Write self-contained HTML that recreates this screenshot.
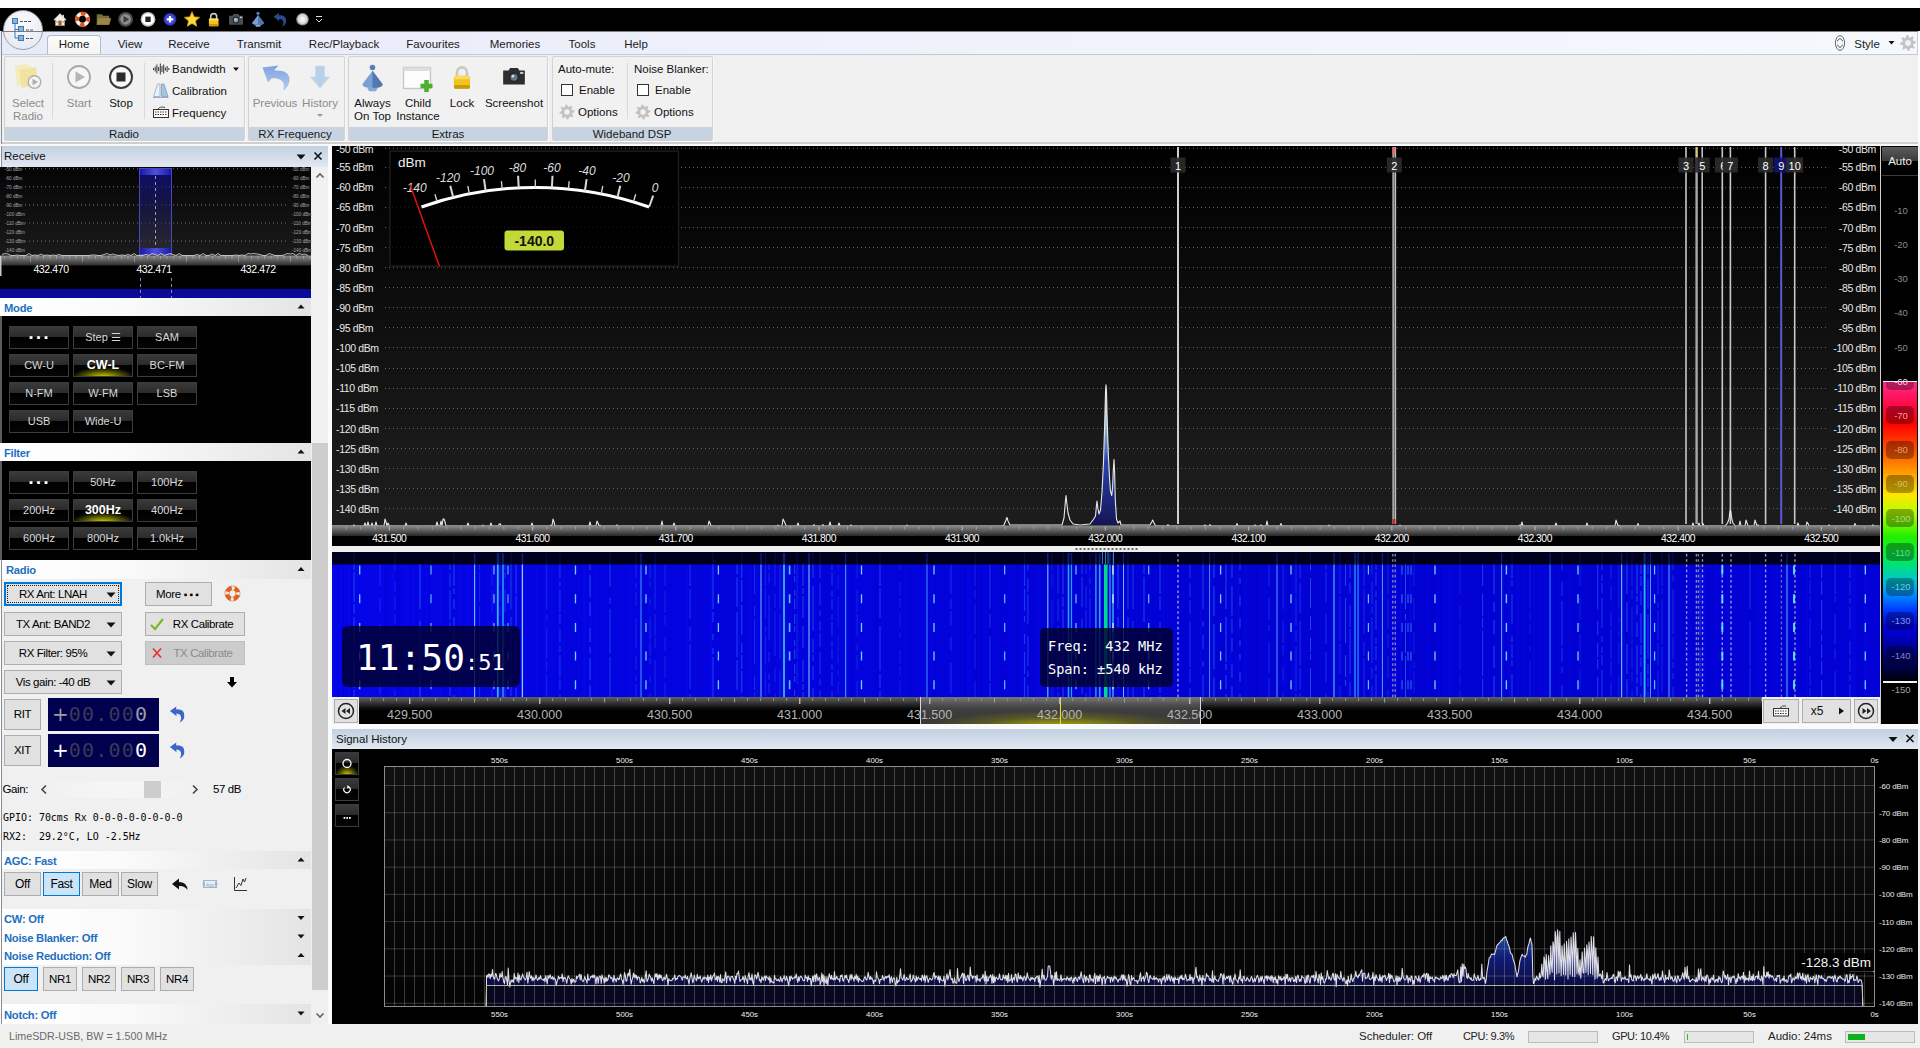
<!DOCTYPE html>
<html><head><meta charset="utf-8"><title>SDR Console</title>
<style>
html,body{margin:0;padding:0;background:#f0f0f0;overflow:hidden}
#app{position:relative;width:1920px;height:1048px;overflow:hidden;background:#f0f0f0;font-family:"Liberation Sans",sans-serif}
#app svg{overflow:visible;pointer-events:none}
</style></head><body><div id="app">
<div style="position:absolute;left:0px;top:0px;width:1920px;height:8px;background:#fff;"></div>
<div style="position:absolute;left:0px;top:8px;width:1920px;height:23px;background:#000;"></div>
<div style="position:absolute;left:0px;top:31px;width:1920px;height:23px;background:linear-gradient(90deg,#e7eaf8,#eef1fb 40%,#f5f8fd 100%);"></div>
<div style="position:absolute;left:1px;top:31px;width:1917px;height:1px;background:#7c7f86;"></div>
<div style="position:absolute;left:1px;top:31px;width:1px;height:1017px;background:#8a8d93;"></div>
<div style="position:absolute;left:1918px;top:32px;width:2px;height:114px;background:#fff;"></div>
<div style="position:absolute;left:1917px;top:32px;width:1px;height:22px;background:#c9ccd3;"></div>
<svg style="position:absolute;left:0px;top:0px;" width="340" height="34"><g transform="translate(53.44,13.240000000000002) scale(0.82)"><path d="M1 8 L8 1 L15 8 L13.5 8 L13.5 15 L2.5 15 L2.5 8 Z" fill="#f4efe6" stroke="#b9b4a8" stroke-width="0.6"/><path d="M0.6 8.4 L8 1 L15.4 8.4" fill="none" stroke="#d8d8d8" stroke-width="1.3"/><rect x="11" y="2" width="1.8" height="3.5" fill="#e8e8e8"/><rect x="6" y="9" width="4" height="6" fill="#a0622a"/><rect x="3.4" y="9.5" width="1.8" height="2.2" fill="#c9a070"/><rect x="10.8" y="9.5" width="1.8" height="2.2" fill="#c9a070"/></g><g transform="translate(82.5,19.3)"><circle r="5.4719999999999995" fill="none" stroke="#f4f4f4" stroke-width="3.952"/><circle r="5.4719999999999995" fill="none" stroke="#e8551a" stroke-width="3.952" stroke-dasharray="4.30 4.30" transform="rotate(-22.5)"/><circle r="7.4479999999999995" fill="none" stroke="#c8420f" stroke-width="0.5" opacity="0.6"/></g><g transform="translate(95.7,11.3)"><path d="M1 3 L6 3 L7.5 4.5 L13.5 4.5 L13.5 13.5 L1 13.5 Z" fill="#7d6d3c"/><path d="M3 7 L15.5 7 L13.5 13.5 L1 13.5 Z" fill="#9a8748"/></g><g transform="translate(125.6,19.3)"><circle r="7.4" fill="#4a4a4a"/><circle r="5.328" fill="#8d8d8d"/><path d="M-2.0720000000000005 -3.33 L3.7 0 L-2.0720000000000005 3.33 Z" fill="#3c3c3c"/></g><g transform="translate(148,19.3)"><circle r="7.4" fill="#bdbdbd"/><circle r="6.068" fill="#fff"/><rect x="-2.664" y="-2.664" width="5.328" height="5.328" fill="#222"/></g><g transform="translate(170,19.3)"><circle r="6.4" fill="#2a2fb4"/><circle r="5.120000000000001" fill="#3d48d8"/><path d="M-3.2 0 H3.2 M0 -3.2 V3.2" stroke="#fff" stroke-width="2.176"/></g><polygon points="192.00,11.80 194.12,16.89 199.61,17.33 195.42,20.91 196.70,26.27 192.00,23.40 187.30,26.27 188.58,20.91 184.39,17.33 189.88,16.89" fill="#ffd83a" stroke="#e0a800" stroke-width="0.8"/><g transform="translate(206.33999999999997,11.940000000000001) scale(0.92)"><path d="M4.8 8 V5 a3.2 3.2 0 0 1 6.4 0 V8" fill="none" stroke="#c9c9c0" stroke-width="1.7"/><rect x="2.8" y="7.2" width="10.4" height="8.3" rx="1" fill="#f0c320"/><rect x="2.8" y="7.2" width="10.4" height="2.2" rx="1" fill="#f8dc60"/><rect x="2.8" y="13.2" width="10.4" height="2.3" rx="1" fill="#c99a0a"/></g><g transform="translate(228.0,11.3) scale(1.0)"><path d="M1 4.5 H4.5 L5.5 2.8 H10.5 L11.5 4.5 H15 V13.5 H1 Z" fill="#4a4d52"/><circle cx="8" cy="8.8" r="3.4" fill="#24262a"/><circle cx="8" cy="8.8" r="2.3" fill="#8fa0b0"/><circle cx="7.3" cy="8.1" r="0.8" fill="#dfe8f0"/><rect x="12" y="5.4" width="2" height="1.3" fill="#ccc"/></g><g transform="translate(250.0,11.3) scale(1.0)"><circle cx="8" cy="2" r="1.6" fill="#5a7fb8"/><path d="M8 3.800 L13.800 11.500 Q14 13.500 8 13.800 Q2 13.500 2.200 11.5 Z" fill="#7a9fd4"/><path d="M8 3.800 L13.800 11.5 Q14 13.500 8 13.800 Z" fill="#5577b0"/><path d="M5 13.600 H11 L10 15.500 H6 Z" fill="#88a8d4"/></g><g transform="translate(272.6,11.3) scale(1.0)"><path d="M1 5.5 L6.5 1.5 L6.3 4 Q13.5 3.5 13.5 9.5 Q13.5 13.5 9.5 15.5 Q11.5 12.5 10.5 9.8 Q9.5 7.5 6.5 7.6 L6.8 10 Z" fill="#2a4a8c"/></g><g transform="translate(302.5,19.3)"><circle r="6.2" fill="#9a9a9a"/><circle r="4.960000000000001" fill="#dcdcdc"/><circle r="2.604" fill="#f2f2f2"/></g><path d="M316 16.5 H322" stroke="#ddd" stroke-width="1"/><path d="M316 19 L319 22 L322 19" stroke="#ddd" stroke-width="1" fill="none"/></svg>
<div style="position:absolute;left:3px;top:10px;width:40px;height:40px;border-radius:50%;background:radial-gradient(circle at 50% 35%,#fbfbfd,#e9ecf4 70%,#e2e6f0);border:1px solid #9aa0aa;box-sizing:border-box"></div>
<svg style="position:absolute;left:0px;top:0px;" width="50" height="54"><g fill="#8ab4dc" stroke="#3a78b4" stroke-width="1"><rect x="12.5" y="18.5" width="5" height="5"/><rect x="18.5" y="26.5" width="5" height="5"/><rect x="18.5" y="35.5" width="5" height="5"/></g><path d="M15 24 V38 H18 M15 29.5 H18" stroke="#3a78b4" stroke-width="1" fill="none"/><path d="M20 21.5 H31 M26 30 H33 M26 38.5 H33" stroke="#555" stroke-width="1" stroke-dasharray="3 1"/></svg>
<div style="position:absolute;left:2px;top:31px;width:44px;height:1px;background:rgba(110,112,118,0.9);"></div>
<div style="position:absolute;left:47px;top:35px;width:54px;height:20px;box-sizing:border-box;border:1px solid #b9bcc4;border-bottom:none;border-radius:4px 4px 0 0;background:linear-gradient(#fdfdfe,#f3f3f3)"></div>
<div style="position:absolute;top:35.0px;line-height:18px;height:18px;font-size:11.5px;color:#1a1a1a;font-family:'Liberation Sans',sans-serif;white-space:pre;left:74px;transform:translateX(-50%);">Home</div>
<div style="position:absolute;top:35.0px;line-height:18px;height:18px;font-size:11.5px;color:#1a1a1a;font-family:'Liberation Sans',sans-serif;white-space:pre;left:130px;transform:translateX(-50%);">View</div>
<div style="position:absolute;top:35.0px;line-height:18px;height:18px;font-size:11.5px;color:#1a1a1a;font-family:'Liberation Sans',sans-serif;white-space:pre;left:189px;transform:translateX(-50%);">Receive</div>
<div style="position:absolute;top:35.0px;line-height:18px;height:18px;font-size:11.5px;color:#1a1a1a;font-family:'Liberation Sans',sans-serif;white-space:pre;left:259px;transform:translateX(-50%);">Transmit</div>
<div style="position:absolute;top:35.0px;line-height:18px;height:18px;font-size:11.5px;color:#1a1a1a;font-family:'Liberation Sans',sans-serif;white-space:pre;left:344px;transform:translateX(-50%);">Rec/Playback</div>
<div style="position:absolute;top:35.0px;line-height:18px;height:18px;font-size:11.5px;color:#1a1a1a;font-family:'Liberation Sans',sans-serif;white-space:pre;left:433px;transform:translateX(-50%);">Favourites</div>
<div style="position:absolute;top:35.0px;line-height:18px;height:18px;font-size:11.5px;color:#1a1a1a;font-family:'Liberation Sans',sans-serif;white-space:pre;left:515px;transform:translateX(-50%);">Memories</div>
<div style="position:absolute;top:35.0px;line-height:18px;height:18px;font-size:11.5px;color:#1a1a1a;font-family:'Liberation Sans',sans-serif;white-space:pre;left:582px;transform:translateX(-50%);">Tools</div>
<div style="position:absolute;top:35.0px;line-height:18px;height:18px;font-size:11.5px;color:#1a1a1a;font-family:'Liberation Sans',sans-serif;white-space:pre;left:636px;transform:translateX(-50%);">Help</div>
<div style="position:absolute;top:34.5px;line-height:18px;height:18px;font-size:11.5px;color:#1a1a1a;font-family:'Liberation Sans',sans-serif;white-space:pre;left:1867px;transform:translateX(-50%);">Style</div>
<svg style="position:absolute;left:0px;top:0px;" width="1920" height="60"><ellipse cx="1840" cy="43" rx="4.6" ry="7.4" fill="none" stroke="#666" stroke-width="1"/><path d="M1837 41.2 L1840 38.4 L1843 41.2 M1837 44.8 L1840 47.6 L1843 44.8" fill="none" stroke="#555" stroke-width="1"/><path d="M1888.5 41 H1894.5 L1891.5 44.5 Z" fill="#111"/><polygon points="1915.85,41.44 1916.00,43.00 1913.65,44.12 1913.32,45.20 1914.65,47.44 1913.66,48.66 1911.20,47.79 1910.20,48.32 1909.56,50.85 1908.00,51.00 1906.88,48.65 1905.80,48.32 1903.56,49.65 1902.34,48.66 1903.21,46.20 1902.68,45.20 1900.15,44.56 1900.00,43.00 1902.35,41.88 1902.68,40.80 1901.35,38.56 1902.34,37.34 1904.80,38.21 1905.80,37.68 1906.44,35.15 1908.00,35.00 1909.12,37.35 1910.20,37.68 1912.44,36.35 1913.66,37.34 1912.79,39.80 1913.32,40.80" fill="#c4c4c4"/><circle cx="1908" cy="43" r="2.88" fill="#eef1f9"/></svg>
<div style="position:absolute;left:2px;top:54px;width:1916px;height:91px;background:#f0f0f0;"></div>
<div style="position:absolute;left:2px;top:54px;width:1916px;height:1px;background:#c6c9cf;"></div>
<div style="position:absolute;left:2px;top:141px;width:1916px;height:1px;background:#f6f6f6;"></div>
<div style="position:absolute;left:2px;top:142px;width:1916px;height:2px;background:#cfcfcf;"></div>
<div style="position:absolute;left:0px;top:144px;width:1920px;height:2px;background:#f8f8f8;"></div>
<div style="position:absolute;left:4px;top:56px;width:241px;height:85px;box-sizing:border-box;border:1px solid #d2d2d2;border-radius:2px;background:#f1f1f1;box-shadow:1px 1px 0 #fafafa"></div>
<div style="position:absolute;left:5px;top:127px;width:239px;height:13px;background:#c7d3e1;"></div>
<div style="position:absolute;top:124.5px;line-height:18px;height:18px;font-size:11.5px;color:#1a1a1a;font-family:'Liberation Sans',sans-serif;white-space:pre;left:124px;transform:translateX(-50%);">Radio</div>
<div style="position:absolute;left:248px;top:56px;width:97px;height:85px;box-sizing:border-box;border:1px solid #d2d2d2;border-radius:2px;background:#f1f1f1;box-shadow:1px 1px 0 #fafafa"></div>
<div style="position:absolute;left:249px;top:127px;width:95px;height:13px;background:#c7d3e1;"></div>
<div style="position:absolute;top:124.5px;line-height:18px;height:18px;font-size:11.5px;color:#1a1a1a;font-family:'Liberation Sans',sans-serif;white-space:pre;left:295px;transform:translateX(-50%);">RX Frequency</div>
<div style="position:absolute;left:348px;top:56px;width:200px;height:85px;box-sizing:border-box;border:1px solid #d2d2d2;border-radius:2px;background:#f1f1f1;box-shadow:1px 1px 0 #fafafa"></div>
<div style="position:absolute;left:349px;top:127px;width:198px;height:13px;background:#c7d3e1;"></div>
<div style="position:absolute;top:124.5px;line-height:18px;height:18px;font-size:11.5px;color:#1a1a1a;font-family:'Liberation Sans',sans-serif;white-space:pre;left:448px;transform:translateX(-50%);">Extras</div>
<div style="position:absolute;left:552px;top:56px;width:161px;height:85px;box-sizing:border-box;border:1px solid #d2d2d2;border-radius:2px;background:#f1f1f1;box-shadow:1px 1px 0 #fafafa"></div>
<div style="position:absolute;left:553px;top:127px;width:159px;height:13px;background:#c7d3e1;"></div>
<div style="position:absolute;top:124.5px;line-height:18px;height:18px;font-size:11.5px;color:#1a1a1a;font-family:'Liberation Sans',sans-serif;white-space:pre;left:632px;transform:translateX(-50%);">Wideband DSP</div>
<div style="position:absolute;left:52px;top:63px;width:1px;height:56px;background:#dadada;"></div>
<div style="position:absolute;left:144px;top:63px;width:1px;height:56px;background:#dadada;"></div>
<div style="position:absolute;left:627px;top:63px;width:1px;height:56px;background:#dadada;"></div>
<div style="position:absolute;top:94.0px;line-height:18px;height:18px;font-size:11.5px;color:#8c8c8c;font-family:'Liberation Sans',sans-serif;white-space:pre;left:28px;transform:translateX(-50%);">Select</div>
<div style="position:absolute;top:107.0px;line-height:18px;height:18px;font-size:11.5px;color:#8c8c8c;font-family:'Liberation Sans',sans-serif;white-space:pre;left:28px;transform:translateX(-50%);">Radio</div>
<div style="position:absolute;top:94.0px;line-height:18px;height:18px;font-size:11.5px;color:#8c8c8c;font-family:'Liberation Sans',sans-serif;white-space:pre;left:79px;transform:translateX(-50%);">Start</div>
<div style="position:absolute;top:94.0px;line-height:18px;height:18px;font-size:11.5px;color:#111;font-family:'Liberation Sans',sans-serif;white-space:pre;left:121px;transform:translateX(-50%);">Stop</div>
<div style="position:absolute;top:60.0px;line-height:18px;height:18px;font-size:11.5px;color:#111;font-family:'Liberation Sans',sans-serif;white-space:pre;left:172px;">Bandwidth</div>
<div style="position:absolute;top:82.0px;line-height:18px;height:18px;font-size:11.5px;color:#111;font-family:'Liberation Sans',sans-serif;white-space:pre;left:172px;">Calibration</div>
<div style="position:absolute;top:104.0px;line-height:18px;height:18px;font-size:11.5px;color:#111;font-family:'Liberation Sans',sans-serif;white-space:pre;left:172px;">Frequency</div>
<div style="position:absolute;top:94.0px;line-height:18px;height:18px;font-size:11.5px;color:#8c8c8c;font-family:'Liberation Sans',sans-serif;white-space:pre;left:275px;transform:translateX(-50%);">Previous</div>
<div style="position:absolute;top:94.0px;line-height:18px;height:18px;font-size:11.5px;color:#8c8c8c;font-family:'Liberation Sans',sans-serif;white-space:pre;left:320px;transform:translateX(-50%);">History</div>
<div style="position:absolute;top:94.0px;line-height:18px;height:18px;font-size:11.5px;color:#111;font-family:'Liberation Sans',sans-serif;white-space:pre;left:372.5px;transform:translateX(-50%);">Always</div>
<div style="position:absolute;top:107.0px;line-height:18px;height:18px;font-size:11.5px;color:#111;font-family:'Liberation Sans',sans-serif;white-space:pre;left:372.5px;transform:translateX(-50%);">On Top</div>
<div style="position:absolute;top:94.0px;line-height:18px;height:18px;font-size:11.5px;color:#111;font-family:'Liberation Sans',sans-serif;white-space:pre;left:418px;transform:translateX(-50%);">Child</div>
<div style="position:absolute;top:107.0px;line-height:18px;height:18px;font-size:11.5px;color:#111;font-family:'Liberation Sans',sans-serif;white-space:pre;left:418px;transform:translateX(-50%);">Instance</div>
<div style="position:absolute;top:94.0px;line-height:18px;height:18px;font-size:11.5px;color:#111;font-family:'Liberation Sans',sans-serif;white-space:pre;left:462px;transform:translateX(-50%);">Lock</div>
<div style="position:absolute;top:94.0px;line-height:18px;height:18px;font-size:11.5px;color:#111;font-family:'Liberation Sans',sans-serif;white-space:pre;left:514px;transform:translateX(-50%);">Screenshot</div>
<div style="position:absolute;top:60.0px;line-height:18px;height:18px;font-size:11.5px;color:#111;font-family:'Liberation Sans',sans-serif;white-space:pre;left:558px;">Auto-mute:</div>
<div style="position:absolute;top:81.0px;line-height:18px;height:18px;font-size:11.5px;color:#111;font-family:'Liberation Sans',sans-serif;white-space:pre;left:579px;">Enable</div>
<div style="position:absolute;top:103.0px;line-height:18px;height:18px;font-size:11.5px;color:#111;font-family:'Liberation Sans',sans-serif;white-space:pre;left:578px;">Options</div>
<div style="position:absolute;top:60.0px;line-height:18px;height:18px;font-size:11.5px;color:#111;font-family:'Liberation Sans',sans-serif;white-space:pre;left:634px;">Noise Blanker:</div>
<div style="position:absolute;top:81.0px;line-height:18px;height:18px;font-size:11.5px;color:#111;font-family:'Liberation Sans',sans-serif;white-space:pre;left:655px;">Enable</div>
<div style="position:absolute;top:103.0px;line-height:18px;height:18px;font-size:11.5px;color:#111;font-family:'Liberation Sans',sans-serif;white-space:pre;left:654px;">Options</div>
<div style="position:absolute;left:561px;top:84px;width:12px;height:12px;box-sizing:border-box;border:1px solid #333;background:#fff"></div>
<div style="position:absolute;left:637px;top:84px;width:12px;height:12px;box-sizing:border-box;border:1px solid #333;background:#fff"></div>
<svg style="position:absolute;left:0px;top:0px;" width="720" height="146"><g opacity="0.75"><path d="M15 66 L26 64 L33 68 L33 84 L17 86 Z" fill="#f5e9a8"/><path d="M19 70 L36 67 L38 84 L22 88 Z" fill="#efe08a"/><circle cx="34.5" cy="82" r="6.3" fill="#f4f4f4" stroke="#9a9a9a" stroke-width="1.4"/><path d="M32.5 78.8 L38 82 L32.5 85.2 Z" fill="#9a9a9a"/></g><circle cx="79" cy="77" r="11" fill="#f6f6f6" stroke="#a8a8a8" stroke-width="1.8"/><path d="M75.5 71.5 L85 77 L75.5 82.5 Z" fill="#b4b4b4"/><circle cx="121" cy="77" r="11" fill="#f8f8f8" stroke="#3a3a3a" stroke-width="2"/><rect x="116.5" y="72.5" width="9" height="9" fill="#2c2c2c"/><rect x="153.0" y="68.0" width="1" height="2" fill="#333"/><rect x="154.7" y="66.5" width="1" height="5" fill="#333"/><rect x="156.4" y="64.5" width="1" height="9" fill="#333"/><rect x="158.1" y="67.0" width="1" height="4" fill="#333"/><rect x="159.8" y="63.5" width="1" height="11" fill="#333"/><rect x="161.5" y="66.0" width="1" height="6" fill="#333"/><rect x="163.2" y="64.5" width="1" height="9" fill="#333"/><rect x="164.9" y="67.5" width="1" height="3" fill="#333"/><rect x="166.6" y="66.0" width="1" height="6" fill="#333"/><rect x="168.3" y="68.0" width="1" height="2" fill="#333"/><path d="M233 67.5 H239 L236 71 Z" fill="#111"/><path d="M157.500 84 H160 V96.5 H153.500 Z" fill="#e4f0fa" stroke="#8aa0b8" stroke-width="0.7"/><path d="M161.500 84 H164 L168 96.5 H161.5 Z" fill="#a4c6e6" stroke="#7a94b0" stroke-width="0.7"/><path d="M153 97.500 H168.500" stroke="#9ab0c8" stroke-width="1"/><rect x="153.5" y="109.5" width="15" height="8" fill="#fff" stroke="#333" stroke-width="1"/><path d="M155 112 H167 M155 114.5 H167" stroke="#333" stroke-width="1" stroke-dasharray="1.5 1"/><path d="M158 109 Q160 106 165 107.5" stroke="#333" fill="none" stroke-width="0.9"/><defs><linearGradient id="pv" x1="0" x2="0" y1="0" y2="1"><stop offset="0" stop-color="#7ea4de"/><stop offset="1" stop-color="#b4cbee"/></linearGradient></defs><path d="M262.5 67.500 L278.500 65.500 L274 70.500 Q289.500 69.500 289.500 80 Q289 87 283 90.500 Q286.500 81 277 78.500 Q273.500 77.800 271.500 78.500 L268 82.500 Z" fill="url(#pv)"/><path d="M315.5 66 H324.500 V77 H329.5 L320 88 L310.5 77 H315.5 Z" fill="#b9d0ea" stroke="#c9dcf0" stroke-width="0.8"/><path d="M317 114 H323 L320 117 Z" fill="#999"/><g transform="translate(358.5,64.0) scale(1.75)"><circle cx="8" cy="2" r="1.6" fill="#5a7fb8"/><path d="M8 3.800 L13.800 11.500 Q14 13.500 8 13.800 Q2 13.500 2.200 11.5 Z" fill="#7a9fd4"/><path d="M8 3.800 L13.800 11.5 Q14 13.500 8 13.800 Z" fill="#5577b0"/><path d="M5 13.600 H11 L10 15.500 H6 Z" fill="#88a8d4"/></g><rect x="403.5" y="67.5" width="27" height="21" fill="#fcfcfc" stroke="#c8c8c8" stroke-width="1.4"/><rect x="403.5" y="67.5" width="27" height="3.5" fill="#dedede"/><path d="M426.500 80 V92 M420.5 86 H432.5" stroke="#4caf2a" stroke-width="4.5"/><g transform="translate(449.6,64.6) scale(1.55)"><path d="M4.8 8 V5 a3.2 3.2 0 0 1 6.4 0 V8" fill="none" stroke="#c9c9c0" stroke-width="1.7"/><rect x="2.8" y="7.2" width="10.4" height="8.3" rx="1" fill="#f0c320"/><rect x="2.8" y="7.2" width="10.4" height="2.2" rx="1" fill="#f8dc60"/><rect x="2.8" y="13.2" width="10.4" height="2.3" rx="1" fill="#c99a0a"/></g><g transform="translate(501.6,63.6) scale(1.55)"><path d="M1 4.5 H4.5 L5.5 2.8 H10.5 L11.5 4.5 H15 V13.5 H1 Z" fill="#2e2e30"/><circle cx="8" cy="8.8" r="3.4" fill="#24262a"/><circle cx="8" cy="8.8" r="2.3" fill="#5f7688"/><circle cx="7.3" cy="8.1" r="0.8" fill="#dfe8f0"/><rect x="12" y="5.4" width="2" height="1.3" fill="#ccc"/></g><polygon points="574.36,110.54 574.50,112.00 572.30,113.05 571.99,114.07 573.24,116.17 572.30,117.30 570.00,116.49 569.07,116.99 568.46,119.36 567.00,119.50 565.95,117.30 564.93,116.99 562.83,118.24 561.70,117.30 562.51,115.00 562.01,114.07 559.64,113.46 559.50,112.00 561.70,110.95 562.01,109.93 560.76,107.83 561.70,106.70 564.00,107.51 564.93,107.01 565.54,104.64 567.00,104.50 568.05,106.70 569.07,107.01 571.17,105.76 572.30,106.70 571.49,109.00 571.99,109.93" fill="#c2c2c2"/><circle cx="567" cy="112" r="2.6999999999999997" fill="#f1f1f1"/><polygon points="650.36,110.54 650.50,112.00 648.30,113.05 647.99,114.07 649.24,116.17 648.30,117.30 646.00,116.49 645.07,116.99 644.46,119.36 643.00,119.50 641.95,117.30 640.93,116.99 638.83,118.24 637.70,117.30 638.51,115.00 638.01,114.07 635.64,113.46 635.50,112.00 637.70,110.95 638.01,109.93 636.76,107.83 637.70,106.70 640.00,107.51 640.93,107.01 641.54,104.64 643.00,104.50 644.05,106.70 645.07,107.01 647.17,105.76 648.30,106.70 647.49,109.00 647.99,109.93" fill="#c2c2c2"/><circle cx="643" cy="112" r="2.6999999999999997" fill="#f1f1f1"/></svg>
<div style="position:absolute;left:0px;top:146px;width:332px;height:878px;background:#f0f0f0;"></div>
<div style="position:absolute;left:0px;top:146px;width:2px;height:878px;background:#fdfdfd;"></div>
<div style="position:absolute;left:1px;top:146px;width:1px;height:878px;background:#8a8d93;"></div>
<div style="position:absolute;left:328px;top:146px;width:4px;height:878px;background:#fbfbfb;"></div>
<div style="position:absolute;left:2px;top:146px;width:326px;height:21px;background:linear-gradient(#c4d1e1,#d0dbe8 45%,#e1e8f1);"></div>
<div style="position:absolute;top:147.0px;line-height:18px;height:18px;font-size:11.5px;color:#111;font-family:'Liberation Sans',sans-serif;white-space:pre;left:4px;">Receive</div>
<svg style="position:absolute;left:290px;top:146px;" width="40" height="21"><path d="M6.5 8.5 H15.5 L11 13.5 Z" fill="#111"/><path d="M24.5 6.500 L31.5 13.5 M31.5 6.5 L24.5 13.5" stroke="#111" stroke-width="1.6"/></svg>
<div style="position:absolute;left:312px;top:167px;width:16px;height:857px;background:#f0f0f0;"></div>
<div style="position:absolute;left:312px;top:443px;width:16px;height:547px;background:#cdcdcd;"></div>
<svg style="position:absolute;left:312px;top:167px;" width="16" height="857"><path d="M4.5 10.5 L8 7 L11.5 10.5" fill="none" stroke="#606060" stroke-width="1.6"/><path d="M4.5 846.500 L8 850 L11.5 846.5" fill="none" stroke="#606060" stroke-width="1.6"/></svg>
<div style="position:absolute;left:0px;top:167px;width:311px;height:131px;background:#000;"></div>
<div style="position:absolute;left:0px;top:167px;width:311px;height:89px;background:linear-gradient(#050505,#1a1a1a);"></div>
<svg style="position:absolute;left:0px;top:0px;" width="312" height="300"><path d="M25 168.7 H287" stroke="#a0a0a0" stroke-width="1" stroke-dasharray="1 3" opacity="0.7"/><path d="M25 186.8 H287" stroke="#a0a0a0" stroke-width="1" stroke-dasharray="1 3" opacity="0.7"/><path d="M25 204.9 H287" stroke="#a0a0a0" stroke-width="1" stroke-dasharray="1 3" opacity="0.7"/><path d="M25 223 H287" stroke="#a0a0a0" stroke-width="1" stroke-dasharray="1 3" opacity="0.7"/><path d="M25 241.1 H287" stroke="#a0a0a0" stroke-width="1" stroke-dasharray="1 3" opacity="0.7"/><text x="5" y="170.8" font-size="4.6" fill="#a8a8a8" font-family="Liberation Sans,sans-serif">-50 dBm</text><text x="292" y="170.8" font-size="4.6" fill="#a8a8a8" font-family="Liberation Sans,sans-serif">-50 dBm</text><text x="5" y="179.8" font-size="4.6" fill="#a8a8a8" font-family="Liberation Sans,sans-serif">-60 dBm</text><text x="292" y="179.8" font-size="4.6" fill="#a8a8a8" font-family="Liberation Sans,sans-serif">-60 dBm</text><text x="5" y="188.9" font-size="4.6" fill="#a8a8a8" font-family="Liberation Sans,sans-serif">-70 dBm</text><text x="292" y="188.9" font-size="4.6" fill="#a8a8a8" font-family="Liberation Sans,sans-serif">-70 dBm</text><text x="5" y="197.9" font-size="4.6" fill="#a8a8a8" font-family="Liberation Sans,sans-serif">-80 dBm</text><text x="292" y="197.9" font-size="4.6" fill="#a8a8a8" font-family="Liberation Sans,sans-serif">-80 dBm</text><text x="5" y="206.9" font-size="4.6" fill="#a8a8a8" font-family="Liberation Sans,sans-serif">-90 dBm</text><text x="292" y="206.9" font-size="4.6" fill="#a8a8a8" font-family="Liberation Sans,sans-serif">-90 dBm</text><text x="5" y="216.0" font-size="4.6" fill="#a8a8a8" font-family="Liberation Sans,sans-serif">-100 dBm</text><text x="292" y="216.0" font-size="4.6" fill="#a8a8a8" font-family="Liberation Sans,sans-serif">-100 dBm</text><text x="5" y="225.0" font-size="4.6" fill="#a8a8a8" font-family="Liberation Sans,sans-serif">-110 dBm</text><text x="292" y="225.0" font-size="4.6" fill="#a8a8a8" font-family="Liberation Sans,sans-serif">-110 dBm</text><text x="5" y="234.0" font-size="4.6" fill="#a8a8a8" font-family="Liberation Sans,sans-serif">-120 dBm</text><text x="292" y="234.0" font-size="4.6" fill="#a8a8a8" font-family="Liberation Sans,sans-serif">-120 dBm</text><text x="5" y="243.0" font-size="4.6" fill="#a8a8a8" font-family="Liberation Sans,sans-serif">-130 dBm</text><text x="292" y="243.0" font-size="4.6" fill="#a8a8a8" font-family="Liberation Sans,sans-serif">-130 dBm</text><text x="5" y="252.1" font-size="4.6" fill="#a8a8a8" font-family="Liberation Sans,sans-serif">-140 dBm</text><text x="292" y="252.1" font-size="4.6" fill="#a8a8a8" font-family="Liberation Sans,sans-serif">-140 dBm</text><defs><linearGradient id="fbg" x1="0" x2="0" y1="0" y2="1"><stop offset="0" stop-color="#10109a" stop-opacity="0.7"/><stop offset="0.45" stop-color="#1a1a66" stop-opacity="0.55"/><stop offset="1" stop-color="#40404c" stop-opacity="0.4"/></linearGradient></defs><rect x="139.5" y="168.5" width="32" height="86" fill="url(#fbg)" stroke="#4848b8" stroke-width="1"/><defs><linearGradient id="fb" x1="0" x2="1"><stop offset="0" stop-color="#1818b0"/><stop offset="0.5" stop-color="#5050d8"/><stop offset="1" stop-color="#1818b0"/></linearGradient></defs><rect x="140" y="169" width="31" height="6" fill="url(#fb)"/><rect x="140" y="248" width="31" height="6" fill="url(#fb)"/><path d="M155.5 176 V248" stroke="#9a9ad8" stroke-width="1" stroke-dasharray="3 3"/><defs><linearGradient id="rl" x1="0" x2="0" y1="0" y2="1"><stop offset="0" stop-color="#8c8c8c"/><stop offset="1" stop-color="#2c2c2c"/></linearGradient></defs><rect x="0" y="255.5" width="311" height="10" fill="url(#rl)"/><rect x="0" y="256" width="1.5" height="20" fill="#c8c8c8"/><rect x="4.0" y="256" width="1" height="3" fill="#c8c8c8" opacity="0.45"/><rect x="10.5" y="256" width="1" height="3" fill="#c8c8c8" opacity="0.45"/><rect x="17.0" y="256" width="1" height="3" fill="#c8c8c8" opacity="0.45"/><rect x="23.5" y="256" width="1" height="3" fill="#c8c8c8" opacity="0.45"/><rect x="30.0" y="256" width="1" height="6" fill="#c8c8c8" opacity="0.45"/><rect x="36.5" y="256" width="1" height="3" fill="#c8c8c8" opacity="0.45"/><rect x="43.0" y="256" width="1" height="3" fill="#c8c8c8" opacity="0.45"/><rect x="49.5" y="256" width="1" height="3" fill="#c8c8c8" opacity="0.45"/><rect x="56.0" y="256" width="1" height="3" fill="#c8c8c8" opacity="0.45"/><rect x="62.5" y="256" width="1" height="3" fill="#c8c8c8" opacity="0.45"/><rect x="69.0" y="256" width="1" height="3" fill="#c8c8c8" opacity="0.45"/><rect x="75.5" y="256" width="1" height="3" fill="#c8c8c8" opacity="0.45"/><rect x="82.0" y="256" width="1" height="6" fill="#c8c8c8" opacity="0.45"/><rect x="88.5" y="256" width="1" height="3" fill="#c8c8c8" opacity="0.45"/><rect x="95.0" y="256" width="1" height="3" fill="#c8c8c8" opacity="0.45"/><rect x="101.5" y="256" width="1" height="3" fill="#c8c8c8" opacity="0.45"/><rect x="108.0" y="256" width="1" height="3" fill="#c8c8c8" opacity="0.45"/><rect x="114.5" y="256" width="1" height="3" fill="#c8c8c8" opacity="0.45"/><rect x="121.0" y="256" width="1" height="3" fill="#c8c8c8" opacity="0.45"/><rect x="127.5" y="256" width="1" height="3" fill="#c8c8c8" opacity="0.45"/><rect x="134.0" y="256" width="1" height="6" fill="#c8c8c8" opacity="0.45"/><rect x="140.5" y="256" width="1" height="3" fill="#c8c8c8" opacity="0.45"/><rect x="147.0" y="256" width="1" height="3" fill="#c8c8c8" opacity="0.45"/><rect x="153.5" y="256" width="1" height="3" fill="#c8c8c8" opacity="0.45"/><rect x="160.0" y="256" width="1" height="3" fill="#c8c8c8" opacity="0.45"/><rect x="166.5" y="256" width="1" height="3" fill="#c8c8c8" opacity="0.45"/><rect x="173.0" y="256" width="1" height="3" fill="#c8c8c8" opacity="0.45"/><rect x="179.5" y="256" width="1" height="3" fill="#c8c8c8" opacity="0.45"/><rect x="186.0" y="256" width="1" height="6" fill="#c8c8c8" opacity="0.45"/><rect x="192.5" y="256" width="1" height="3" fill="#c8c8c8" opacity="0.45"/><rect x="199.0" y="256" width="1" height="3" fill="#c8c8c8" opacity="0.45"/><rect x="205.5" y="256" width="1" height="3" fill="#c8c8c8" opacity="0.45"/><rect x="212.0" y="256" width="1" height="3" fill="#c8c8c8" opacity="0.45"/><rect x="218.5" y="256" width="1" height="3" fill="#c8c8c8" opacity="0.45"/><rect x="225.0" y="256" width="1" height="3" fill="#c8c8c8" opacity="0.45"/><rect x="231.5" y="256" width="1" height="3" fill="#c8c8c8" opacity="0.45"/><rect x="238.0" y="256" width="1" height="6" fill="#c8c8c8" opacity="0.45"/><rect x="244.5" y="256" width="1" height="3" fill="#c8c8c8" opacity="0.45"/><rect x="251.0" y="256" width="1" height="3" fill="#c8c8c8" opacity="0.45"/><rect x="257.5" y="256" width="1" height="3" fill="#c8c8c8" opacity="0.45"/><rect x="264.0" y="256" width="1" height="3" fill="#c8c8c8" opacity="0.45"/><rect x="270.5" y="256" width="1" height="3" fill="#c8c8c8" opacity="0.45"/><rect x="277.0" y="256" width="1" height="3" fill="#c8c8c8" opacity="0.45"/><rect x="283.5" y="256" width="1" height="3" fill="#c8c8c8" opacity="0.45"/><rect x="290.0" y="256" width="1" height="6" fill="#c8c8c8" opacity="0.45"/><rect x="296.5" y="256" width="1" height="3" fill="#c8c8c8" opacity="0.45"/><rect x="303.0" y="256" width="1" height="3" fill="#c8c8c8" opacity="0.45"/><rect x="309.5" y="256" width="1" height="3" fill="#c8c8c8" opacity="0.45"/><polyline points="2,254.5 5,253.5 8,254.0 11,255.5 14,255.5 17,255.0 20,255.5 23,255.5 26,255.5 29,253.5 32,255.5 35,255.0 38,255.5 41,254.0 44,255.5 47,255.0 50,255.5 53,255.0 56,255.5 59,254.5 62,255.5 65,255.5 68,255.5 71,255.5 74,255.5 77,255.5 80,255.5 83,255.5 86,255.5 89,255.5 92,255.0 95,255.0 98,255.5 101,255.5 104,254.5 107,253.5 110,255.0 113,254.0 116,255.0 119,255.5 122,255.0 125,255.5 128,254.5 131,255.5 134,253.5 137,255.5 140,255.5 143,255.5 146,254.5 149,255.5 152,253.5 155,254.5 158,255.5 161,253.5 164,255.5 167,254.5 170,253.5 173,254.5 176,255.5 179,253.5 182,255.5 185,255.5 188,255.5 191,255.5 194,255.5 197,254.5 200,255.5 203,253.5 206,255.5 209,255.5 212,254.0 215,255.5 218,253.5 221,255.5 224,255.5 227,255.5 230,255.5 233,255.5 236,255.0 239,255.5 242,255.0 245,255.5 248,253.5 251,254.0 254,253.5 257,254.0 260,254.5 263,255.5 266,255.5 269,253.5 272,254.5 275,255.5 278,255.5 281,255.5 284,255.0 287,253.5 290,254.0 293,253.5 296,255.5 299,253.5 302,254.5 305,254.0 308,255.5" fill="none" stroke="#ddd" stroke-width="0.8"/><rect x="0" y="289" width="311" height="9" fill="#0a0a98"/><path d="M140.5 278 V298 M171.500 278 V298" stroke="#8a8ab8" stroke-width="1" stroke-dasharray="3 3"/></svg>
<div style="position:absolute;top:260.5px;line-height:16px;height:16px;font-size:10.5px;color:#fff;font-family:'Liberation Sans',sans-serif;white-space:pre;left:51px;transform:translateX(-50%);letter-spacing:-0.4px;">432.470</div>
<div style="position:absolute;top:260.5px;line-height:16px;height:16px;font-size:10.5px;color:#fff;font-family:'Liberation Sans',sans-serif;white-space:pre;left:154px;transform:translateX(-50%);letter-spacing:-0.4px;">432.471</div>
<div style="position:absolute;top:260.5px;line-height:16px;height:16px;font-size:10.5px;color:#fff;font-family:'Liberation Sans',sans-serif;white-space:pre;left:258px;transform:translateX(-50%);letter-spacing:-0.4px;">432.472</div>
<div style="position:absolute;left:0px;top:298px;width:311px;height:18px;background:linear-gradient(90deg,#ffffff 0%,#fafafa 40%,#e4e4e4 100%);"></div><div style="position:absolute;top:299.7px;line-height:17px;height:17px;font-size:11.2px;color:#1c6fc0;font-family:'Liberation Sans',sans-serif;white-space:pre;font-weight:bold;left:4px;letter-spacing:-0.25px;">Mode</div><svg style="position:absolute;left:0px;top:0px;" width="312" height="316"><path d="M297.5 308.5 H304.5 L301 304.5 Z" fill="#111"/></svg>
<div style="position:absolute;left:0px;top:316px;width:2px;height:127px;background:#5a5a5a;"></div>
<div style="position:absolute;left:2px;top:316px;width:309px;height:127px;background:#000;"></div>
<div style="position:absolute;left:9px;top:326px;width:60px;height:23px;box-sizing:border-box;border:1px solid #3c3c3c;background:linear-gradient(#3a3a3a 0%,#2a2a2a 48%,#000 50%,#050505 100%);color:#d8d8d8;font-family:'Liberation Sans',sans-serif;font-size:11px;line-height:21px;text-align:center;white-space:nowrap"><span style="font-size:11px;letter-spacing:3.6px;margin-left:3px;color:#fff">&#9642;&#9642;&#9642;</span></div>
<div style="position:absolute;left:73px;top:326px;width:60px;height:23px;box-sizing:border-box;border:1px solid #3c3c3c;background:linear-gradient(#3a3a3a 0%,#2a2a2a 48%,#000 50%,#050505 100%);color:#d8d8d8;font-family:'Liberation Sans',sans-serif;font-size:11px;line-height:21px;text-align:center;white-space:nowrap">Step ☰</div>
<div style="position:absolute;left:137px;top:326px;width:60px;height:23px;box-sizing:border-box;border:1px solid #3c3c3c;background:linear-gradient(#3a3a3a 0%,#2a2a2a 48%,#000 50%,#050505 100%);color:#d8d8d8;font-family:'Liberation Sans',sans-serif;font-size:11px;line-height:21px;text-align:center;white-space:nowrap">SAM</div>
<div style="position:absolute;left:9px;top:354px;width:60px;height:23px;box-sizing:border-box;border:1px solid #3c3c3c;background:linear-gradient(#3a3a3a 0%,#2a2a2a 48%,#000 50%,#050505 100%);color:#d8d8d8;font-family:'Liberation Sans',sans-serif;font-size:11px;line-height:21px;text-align:center;white-space:nowrap">CW-U</div>
<div style="position:absolute;left:73px;top:354px;width:60px;height:23px;box-sizing:border-box;border:1px solid #3c3c3c;background:radial-gradient(ellipse 55% 50% at 50% 108%,rgba(225,225,0,1),rgba(150,150,0,0.55) 60%,rgba(0,0,0,0) 100%),linear-gradient(#3a3a3a 0%,#2a2a2a 48%,#000 50%,#050505 100%);color:#fff;font-family:'Liberation Sans',sans-serif;font-size:12.5px;font-weight:bold;line-height:21px;text-align:center;white-space:nowrap">CW-L</div>
<div style="position:absolute;left:137px;top:354px;width:60px;height:23px;box-sizing:border-box;border:1px solid #3c3c3c;background:linear-gradient(#3a3a3a 0%,#2a2a2a 48%,#000 50%,#050505 100%);color:#d8d8d8;font-family:'Liberation Sans',sans-serif;font-size:11px;line-height:21px;text-align:center;white-space:nowrap">BC-FM</div>
<div style="position:absolute;left:9px;top:382px;width:60px;height:23px;box-sizing:border-box;border:1px solid #3c3c3c;background:linear-gradient(#3a3a3a 0%,#2a2a2a 48%,#000 50%,#050505 100%);color:#d8d8d8;font-family:'Liberation Sans',sans-serif;font-size:11px;line-height:21px;text-align:center;white-space:nowrap">N-FM</div>
<div style="position:absolute;left:73px;top:382px;width:60px;height:23px;box-sizing:border-box;border:1px solid #3c3c3c;background:linear-gradient(#3a3a3a 0%,#2a2a2a 48%,#000 50%,#050505 100%);color:#d8d8d8;font-family:'Liberation Sans',sans-serif;font-size:11px;line-height:21px;text-align:center;white-space:nowrap">W-FM</div>
<div style="position:absolute;left:137px;top:382px;width:60px;height:23px;box-sizing:border-box;border:1px solid #3c3c3c;background:linear-gradient(#3a3a3a 0%,#2a2a2a 48%,#000 50%,#050505 100%);color:#d8d8d8;font-family:'Liberation Sans',sans-serif;font-size:11px;line-height:21px;text-align:center;white-space:nowrap">LSB</div>
<div style="position:absolute;left:9px;top:410px;width:60px;height:23px;box-sizing:border-box;border:1px solid #3c3c3c;background:linear-gradient(#3a3a3a 0%,#2a2a2a 48%,#000 50%,#050505 100%);color:#d8d8d8;font-family:'Liberation Sans',sans-serif;font-size:11px;line-height:21px;text-align:center;white-space:nowrap">USB</div>
<div style="position:absolute;left:73px;top:410px;width:60px;height:23px;box-sizing:border-box;border:1px solid #3c3c3c;background:linear-gradient(#3a3a3a 0%,#2a2a2a 48%,#000 50%,#050505 100%);color:#d8d8d8;font-family:'Liberation Sans',sans-serif;font-size:11px;line-height:21px;text-align:center;white-space:nowrap">Wide-U</div>
<div style="position:absolute;left:0px;top:443px;width:311px;height:18px;background:linear-gradient(90deg,#ffffff 0%,#fafafa 40%,#e4e4e4 100%);"></div><div style="position:absolute;top:444.7px;line-height:17px;height:17px;font-size:11.2px;color:#1c6fc0;font-family:'Liberation Sans',sans-serif;white-space:pre;font-weight:bold;left:4px;letter-spacing:-0.25px;">Filter</div><svg style="position:absolute;left:0px;top:0px;" width="312" height="461"><path d="M297.5 453.5 H304.5 L301 449.5 Z" fill="#111"/></svg>
<div style="position:absolute;left:0px;top:461px;width:2px;height:99px;background:#5a5a5a;"></div>
<div style="position:absolute;left:2px;top:461px;width:309px;height:99px;background:#000;"></div>
<div style="position:absolute;left:9px;top:471px;width:60px;height:23px;box-sizing:border-box;border:1px solid #3c3c3c;background:linear-gradient(#3a3a3a 0%,#2a2a2a 48%,#000 50%,#050505 100%);color:#d8d8d8;font-family:'Liberation Sans',sans-serif;font-size:11px;line-height:21px;text-align:center;white-space:nowrap"><span style="font-size:11px;letter-spacing:3.6px;margin-left:3px;color:#fff">&#9642;&#9642;&#9642;</span></div>
<div style="position:absolute;left:73px;top:471px;width:60px;height:23px;box-sizing:border-box;border:1px solid #3c3c3c;background:linear-gradient(#3a3a3a 0%,#2a2a2a 48%,#000 50%,#050505 100%);color:#d8d8d8;font-family:'Liberation Sans',sans-serif;font-size:11px;line-height:21px;text-align:center;white-space:nowrap">50Hz</div>
<div style="position:absolute;left:137px;top:471px;width:60px;height:23px;box-sizing:border-box;border:1px solid #3c3c3c;background:linear-gradient(#3a3a3a 0%,#2a2a2a 48%,#000 50%,#050505 100%);color:#d8d8d8;font-family:'Liberation Sans',sans-serif;font-size:11px;line-height:21px;text-align:center;white-space:nowrap">100Hz</div>
<div style="position:absolute;left:9px;top:499px;width:60px;height:23px;box-sizing:border-box;border:1px solid #3c3c3c;background:linear-gradient(#3a3a3a 0%,#2a2a2a 48%,#000 50%,#050505 100%);color:#d8d8d8;font-family:'Liberation Sans',sans-serif;font-size:11px;line-height:21px;text-align:center;white-space:nowrap">200Hz</div>
<div style="position:absolute;left:73px;top:499px;width:60px;height:23px;box-sizing:border-box;border:1px solid #3c3c3c;background:radial-gradient(ellipse 55% 50% at 50% 108%,rgba(225,225,0,1),rgba(150,150,0,0.55) 60%,rgba(0,0,0,0) 100%),linear-gradient(#3a3a3a 0%,#2a2a2a 48%,#000 50%,#050505 100%);color:#fff;font-family:'Liberation Sans',sans-serif;font-size:12.5px;font-weight:bold;line-height:21px;text-align:center;white-space:nowrap">300Hz</div>
<div style="position:absolute;left:137px;top:499px;width:60px;height:23px;box-sizing:border-box;border:1px solid #3c3c3c;background:linear-gradient(#3a3a3a 0%,#2a2a2a 48%,#000 50%,#050505 100%);color:#d8d8d8;font-family:'Liberation Sans',sans-serif;font-size:11px;line-height:21px;text-align:center;white-space:nowrap">400Hz</div>
<div style="position:absolute;left:9px;top:527px;width:60px;height:23px;box-sizing:border-box;border:1px solid #3c3c3c;background:linear-gradient(#3a3a3a 0%,#2a2a2a 48%,#000 50%,#050505 100%);color:#d8d8d8;font-family:'Liberation Sans',sans-serif;font-size:11px;line-height:21px;text-align:center;white-space:nowrap">600Hz</div>
<div style="position:absolute;left:73px;top:527px;width:60px;height:23px;box-sizing:border-box;border:1px solid #3c3c3c;background:linear-gradient(#3a3a3a 0%,#2a2a2a 48%,#000 50%,#050505 100%);color:#d8d8d8;font-family:'Liberation Sans',sans-serif;font-size:11px;line-height:21px;text-align:center;white-space:nowrap">800Hz</div>
<div style="position:absolute;left:137px;top:527px;width:60px;height:23px;box-sizing:border-box;border:1px solid #3c3c3c;background:linear-gradient(#3a3a3a 0%,#2a2a2a 48%,#000 50%,#050505 100%);color:#d8d8d8;font-family:'Liberation Sans',sans-serif;font-size:11px;line-height:21px;text-align:center;white-space:nowrap">1.0kHz</div>
<div style="position:absolute;left:2px;top:560px;width:309px;height:19px;background:linear-gradient(90deg,#ffffff 0%,#fafafa 40%,#e4e4e4 100%);"></div><div style="position:absolute;top:562.2px;line-height:17px;height:17px;font-size:11.2px;color:#1c6fc0;font-family:'Liberation Sans',sans-serif;white-space:pre;font-weight:bold;left:6px;letter-spacing:-0.25px;">Radio</div><svg style="position:absolute;left:0px;top:0px;" width="312" height="579"><path d="M297.5 571.0 H304.5 L301 567.0 Z" fill="#111"/></svg>
<div style="position:absolute;left:4px;top:582px;width:118px;height:24px;box-sizing:border-box;border:2px solid #0078d7;background:#e1e1e1"></div><div style="position:absolute;left:7px;top:585px;width:112px;height:18px;box-sizing:border-box;border:1px dotted #222"></div><div style="position:absolute;top:585.0px;line-height:18px;height:18px;font-size:11.5px;color:#000;font-family:'Liberation Sans',sans-serif;white-space:pre;left:53px;transform:translateX(-50%);letter-spacing:-0.4px;">RX Ant: LNAH</div><svg style="position:absolute;left:104px;top:590px;" width="14" height="10"><path d="M2.5 2.5 H11.5 L7 7.5 Z" fill="#111"/></svg>
<div style="position:absolute;left:4px;top:612px;width:118px;height:24px;box-sizing:border-box;border:1px solid #adadad;background:#e1e1e1;color:#000;font-family:'Liberation Sans',sans-serif;font-size:12px;line-height:22px;text-align:center;white-space:nowrap;letter-spacing:-0.3px;"></div><div style="position:absolute;top:615.0px;line-height:18px;height:18px;font-size:11.5px;color:#000;font-family:'Liberation Sans',sans-serif;white-space:pre;left:53px;transform:translateX(-50%);letter-spacing:-0.4px;">TX Ant: BAND2</div><svg style="position:absolute;left:104px;top:620px;" width="14" height="10"><path d="M2.5 2.5 H11.5 L7 7.5 Z" fill="#111"/></svg>
<div style="position:absolute;left:4px;top:641px;width:118px;height:24px;box-sizing:border-box;border:1px solid #adadad;background:#e1e1e1;color:#000;font-family:'Liberation Sans',sans-serif;font-size:12px;line-height:22px;text-align:center;white-space:nowrap;letter-spacing:-0.3px;"></div><div style="position:absolute;top:644.0px;line-height:18px;height:18px;font-size:11.5px;color:#000;font-family:'Liberation Sans',sans-serif;white-space:pre;left:53px;transform:translateX(-50%);letter-spacing:-0.4px;">RX Filter: 95%</div><svg style="position:absolute;left:104px;top:649px;" width="14" height="10"><path d="M2.5 2.5 H11.5 L7 7.5 Z" fill="#111"/></svg>
<div style="position:absolute;left:4px;top:670px;width:118px;height:24px;box-sizing:border-box;border:1px solid #adadad;background:#e1e1e1;color:#000;font-family:'Liberation Sans',sans-serif;font-size:12px;line-height:22px;text-align:center;white-space:nowrap;letter-spacing:-0.3px;"></div><div style="position:absolute;top:673.0px;line-height:18px;height:18px;font-size:11.5px;color:#000;font-family:'Liberation Sans',sans-serif;white-space:pre;left:53px;transform:translateX(-50%);letter-spacing:-0.4px;">Vis gain: -40 dB</div><svg style="position:absolute;left:104px;top:678px;" width="14" height="10"><path d="M2.5 2.5 H11.5 L7 7.5 Z" fill="#111"/></svg>
<div style="position:absolute;left:145px;top:582px;width:67px;height:24px;box-sizing:border-box;border:1px solid #adadad;background:#e1e1e1;color:#000;font-family:'Liberation Sans',sans-serif;font-size:11.5px;line-height:22px;text-align:center;white-space:nowrap;letter-spacing:-0.3px;">More <span style="font-size:10px;letter-spacing:2.2px;vertical-align:0.5px">&#9642;&#9642;&#9642;</span></div>
<svg style="position:absolute;left:222px;top:583px;" width="22" height="22"><g transform="translate(10.5,10.5)"><circle r="5.4719999999999995" fill="none" stroke="#e0601c" stroke-width="4.18"/><circle r="5.4719999999999995" fill="none" stroke="#fbe9dc" stroke-width="4.18" stroke-dasharray="2.75 5.84" transform="rotate(-14)"/><circle r="7.6" fill="none" stroke="#c04a10" stroke-width="0.6" opacity="0.7"/><circle r="3.344" fill="none" stroke="#c04a10" stroke-width="0.5" opacity="0.6"/></g></svg>
<div style="position:absolute;left:145px;top:612px;width:100px;height:24px;box-sizing:border-box;border:1px solid #adadad;background:#e1e1e1;color:#000;font-family:'Liberation Sans',sans-serif;font-size:11.5px;line-height:22px;text-align:center;white-space:nowrap;letter-spacing:-0.3px;"></div>
<div style="position:absolute;top:615.0px;line-height:18px;height:18px;font-size:11.5px;color:#000;font-family:'Liberation Sans',sans-serif;white-space:pre;left:203px;transform:translateX(-50%);letter-spacing:-0.4px;">RX Calibrate</div>
<svg style="position:absolute;left:148px;top:616px;" width="18" height="16"><path d="M3 9 L7 13 L15 3" fill="none" stroke="#7ab82e" stroke-width="2.2"/></svg>
<div style="position:absolute;left:145px;top:641px;width:100px;height:24px;box-sizing:border-box;border:1px solid #bfbfbf;background:#cccccc;color:#838383;font-family:'Liberation Sans',sans-serif;font-size:11.5px;line-height:22px;text-align:center;white-space:nowrap;letter-spacing:-0.3px;"></div>
<div style="position:absolute;top:644.0px;line-height:18px;height:18px;font-size:11.5px;color:#8a8a8a;font-family:'Liberation Sans',sans-serif;white-space:pre;left:203px;transform:translateX(-50%);letter-spacing:-0.4px;">TX Calibrate</div>
<svg style="position:absolute;left:148px;top:645px;" width="18" height="16"><path d="M5 3.500 L13 12.5 M13 3.5 L5 12.5" fill="none" stroke="#e82a2a" stroke-width="1.5"/></svg>
<svg style="position:absolute;left:224px;top:674px;" width="16" height="16"><path d="M6 3 H10 V8 H13 L8 13.5 L3 8 H6 Z" fill="#000"/></svg>
<div style="position:absolute;left:4px;top:699px;width:37px;height:31px;box-sizing:border-box;border:1px solid #adadad;background:#e1e1e1;color:#000;font-family:'Liberation Sans',sans-serif;font-size:11.5px;line-height:29px;text-align:center;white-space:nowrap;letter-spacing:-0.3px;">RIT</div>
<div style="position:absolute;left:48px;top:698px;width:111px;height:33px;background:#00004e;"></div>
<div style="position:absolute;left:52px;top:698px;height:33px;line-height:33px;font-family:'DejaVu Sans Mono',monospace;font-size:20px;white-space:pre;color:#9a9aa8;letter-spacing:1.2px"><span style="font-family:'DejaVu Sans',sans-serif;letter-spacing:0">+</span><span style="color:#3a3a55">00.00</span>0</div>
<svg style="position:absolute;left:168px;top:704px;" width="22" height="22"><g transform="translate(0.8000000000000007,0.8000000000000007) scale(1.15)"><path d="M1 5.5 L6.5 1.5 L6.3 4 Q13.5 3.5 13.5 9.5 Q13.5 13.5 9.5 15.5 Q11.5 12.5 10.5 9.8 Q9.5 7.5 6.5 7.6 L6.8 10 Z" fill="#3a66c8"/></g></svg>
<div style="position:absolute;left:4px;top:735px;width:37px;height:31px;box-sizing:border-box;border:1px solid #adadad;background:#e1e1e1;color:#000;font-family:'Liberation Sans',sans-serif;font-size:11.5px;line-height:29px;text-align:center;white-space:nowrap;letter-spacing:-0.3px;">XIT</div>
<div style="position:absolute;left:48px;top:734px;width:111px;height:33px;background:#00004e;"></div>
<div style="position:absolute;left:52px;top:734px;height:33px;line-height:33px;font-family:'DejaVu Sans Mono',monospace;font-size:20px;white-space:pre;color:#fff;letter-spacing:1.2px"><span style="font-family:'DejaVu Sans',sans-serif;letter-spacing:0">+</span><span style="color:#3a3a55">00.00</span>0</div>
<svg style="position:absolute;left:168px;top:740px;" width="22" height="22"><g transform="translate(0.8000000000000007,0.8000000000000007) scale(1.15)"><path d="M1 5.5 L6.5 1.5 L6.3 4 Q13.5 3.5 13.5 9.5 Q13.5 13.5 9.5 15.5 Q11.5 12.5 10.5 9.8 Q9.5 7.5 6.5 7.6 L6.8 10 Z" fill="#3a66c8"/></g></svg>
<div style="position:absolute;top:780.0px;line-height:18px;height:18px;font-size:11.5px;color:#000;font-family:'Liberation Sans',sans-serif;white-space:pre;left:2.5px;letter-spacing:-0.4px;">Gain:</div>
<div style="position:absolute;left:36px;top:781px;width:166px;height:17px;background:linear-gradient(90deg,#f0f0f0,#f6f6f6 50%,#f0f0f0);"></div>
<svg style="position:absolute;left:36px;top:781px;" width="170" height="17"><path d="M10 4.5 L6 8.5 L10 12.5 M157 4.5 L161 8.5 L157 12.5" fill="none" stroke="#444" stroke-width="1.6"/></svg>
<div style="position:absolute;left:144px;top:781px;width:17px;height:17px;background:#cdcdcd;"></div>
<div style="position:absolute;top:780.0px;line-height:18px;height:18px;font-size:11.5px;color:#000;font-family:'Liberation Sans',sans-serif;white-space:pre;left:213px;letter-spacing:-0.4px;">57 dB</div>
<div style="position:absolute;top:810.0px;line-height:15px;height:15px;font-size:9.95px;color:#000;font-family:'DejaVu Sans Mono','Liberation Mono',monospace;white-space:pre;left:3px;">GPIO: 70cms Rx 0-0-0-0-0-0-0-0</div>
<div style="position:absolute;top:829.0px;line-height:15px;height:15px;font-size:9.95px;color:#000;font-family:'DejaVu Sans Mono','Liberation Mono',monospace;white-space:pre;left:3px;">RX2:  29.2°C, LO -2.5Hz</div>
<div style="position:absolute;left:2px;top:851px;width:309px;height:18px;background:linear-gradient(90deg,#ffffff 0%,#fafafa 40%,#e4e4e4 100%);"></div><div style="position:absolute;top:852.7px;line-height:17px;height:17px;font-size:11.2px;color:#1c6fc0;font-family:'Liberation Sans',sans-serif;white-space:pre;font-weight:bold;left:4px;letter-spacing:-0.25px;">AGC: Fast</div><svg style="position:absolute;left:0px;top:0px;" width="312" height="869"><path d="M297.5 861.5 H304.5 L301 857.5 Z" fill="#111"/></svg>
<div style="position:absolute;left:4px;top:872px;width:37px;height:24px;box-sizing:border-box;border:1px solid #adadad;background:#e1e1e1;color:#000;font-family:'Liberation Sans',sans-serif;font-size:12px;line-height:22px;text-align:center;white-space:nowrap;letter-spacing:-0.3px;">Off</div>
<div style="position:absolute;left:43px;top:872px;width:37px;height:24px;box-sizing:border-box;border:1px solid #0078d7;background:#cce4f7;color:#000;font-family:'Liberation Sans',sans-serif;font-size:12px;line-height:22px;text-align:center;white-space:nowrap;letter-spacing:-0.3px;">Fast</div>
<div style="position:absolute;left:82px;top:872px;width:37px;height:24px;box-sizing:border-box;border:1px solid #adadad;background:#e1e1e1;color:#000;font-family:'Liberation Sans',sans-serif;font-size:12px;line-height:22px;text-align:center;white-space:nowrap;letter-spacing:-0.3px;">Med</div>
<div style="position:absolute;left:121px;top:872px;width:37px;height:24px;box-sizing:border-box;border:1px solid #adadad;background:#e1e1e1;color:#000;font-family:'Liberation Sans',sans-serif;font-size:12px;line-height:22px;text-align:center;white-space:nowrap;letter-spacing:-0.3px;">Slow</div>
<svg style="position:absolute;left:0px;top:0px;pointer-events:none" width="312" height="1048"><path d="M172 884 L179 878.5 V882 Q187 882 187.500 890 Q184.500 885.500 179 886 V889.5 Z" fill="#111"/><g opacity="0.75"><rect x="203.5" y="880.5" width="13" height="7" fill="#e4eef8" stroke="#8aa4c0"/><path d="M202 884 L205 881 V887 Z M218 884 L215 881 V887 Z" fill="#8aa4c0"/><text x="206" y="886.500" font-size="5" fill="#6a86a8" font-family="Liberation Sans,sans-serif">Agc</text></g><path d="M234.500 877 V890.5 H247" stroke="#333" fill="none" stroke-width="1"/><path d="M236 888 L239 883 L241 885.5 L243 879 L244.500 882 L246 878" stroke="#333" fill="none" stroke-width="1"/></svg>
<div style="position:absolute;left:2px;top:909px;width:309px;height:19px;background:linear-gradient(90deg,#ffffff 0%,#fafafa 40%,#e4e4e4 100%);"></div><div style="position:absolute;top:911.2px;line-height:17px;height:17px;font-size:11.2px;color:#1c6fc0;font-family:'Liberation Sans',sans-serif;white-space:pre;font-weight:bold;left:4px;letter-spacing:-0.25px;">CW: Off</div><svg style="position:absolute;left:0px;top:0px;" width="312" height="928"><path d="M297.5 916.0 H304.5 L301 920.0 Z" fill="#111"/></svg>
<div style="position:absolute;left:2px;top:928px;width:309px;height:18px;background:linear-gradient(90deg,#ffffff 0%,#fafafa 40%,#e4e4e4 100%);"></div><div style="position:absolute;top:929.7px;line-height:17px;height:17px;font-size:11.2px;color:#1c6fc0;font-family:'Liberation Sans',sans-serif;white-space:pre;font-weight:bold;left:4px;letter-spacing:-0.25px;">Noise Blanker: Off</div><svg style="position:absolute;left:0px;top:0px;" width="312" height="946"><path d="M297.5 934.5 H304.5 L301 938.5 Z" fill="#111"/></svg>
<div style="position:absolute;left:2px;top:946px;width:309px;height:19px;background:linear-gradient(90deg,#ffffff 0%,#fafafa 40%,#e4e4e4 100%);"></div><div style="position:absolute;top:948.2px;line-height:17px;height:17px;font-size:11.2px;color:#1c6fc0;font-family:'Liberation Sans',sans-serif;white-space:pre;font-weight:bold;left:4px;letter-spacing:-0.25px;">Noise Reduction: Off</div><svg style="position:absolute;left:0px;top:0px;" width="312" height="965"><path d="M297.5 957.0 H304.5 L301 953.0 Z" fill="#111"/></svg>
<div style="position:absolute;left:4px;top:967px;width:34px;height:24px;box-sizing:border-box;border:1px solid #0078d7;background:#cce4f7;color:#000;font-family:'Liberation Sans',sans-serif;font-size:12px;line-height:22px;text-align:center;white-space:nowrap;letter-spacing:-0.3px;">Off</div>
<div style="position:absolute;left:43px;top:967px;width:34px;height:24px;box-sizing:border-box;border:1px solid #adadad;background:#e1e1e1;color:#000;font-family:'Liberation Sans',sans-serif;font-size:11.5px;line-height:22px;text-align:center;white-space:nowrap;letter-spacing:-0.3px;">NR1</div>
<div style="position:absolute;left:82px;top:967px;width:34px;height:24px;box-sizing:border-box;border:1px solid #adadad;background:#e1e1e1;color:#000;font-family:'Liberation Sans',sans-serif;font-size:11.5px;line-height:22px;text-align:center;white-space:nowrap;letter-spacing:-0.3px;">NR2</div>
<div style="position:absolute;left:121px;top:967px;width:34px;height:24px;box-sizing:border-box;border:1px solid #adadad;background:#e1e1e1;color:#000;font-family:'Liberation Sans',sans-serif;font-size:11.5px;line-height:22px;text-align:center;white-space:nowrap;letter-spacing:-0.3px;">NR3</div>
<div style="position:absolute;left:160px;top:967px;width:34px;height:24px;box-sizing:border-box;border:1px solid #adadad;background:#e1e1e1;color:#000;font-family:'Liberation Sans',sans-serif;font-size:11.5px;line-height:22px;text-align:center;white-space:nowrap;letter-spacing:-0.3px;">NR4</div>
<div style="position:absolute;left:2px;top:1004px;width:309px;height:20px;background:linear-gradient(90deg,#ffffff 0%,#fafafa 40%,#e4e4e4 100%);"></div><div style="position:absolute;top:1006.7px;line-height:17px;height:17px;font-size:11.2px;color:#1c6fc0;font-family:'Liberation Sans',sans-serif;white-space:pre;font-weight:bold;left:4px;letter-spacing:-0.25px;">Notch: Off</div><svg style="position:absolute;left:0px;top:0px;" width="312" height="1024"><path d="M297.5 1011.5 H304.5 L301 1015.5 Z" fill="#111"/></svg>
<div style="position:absolute;left:332px;top:146px;width:1548px;height:400px;background:#000;"></div>
<div style="position:absolute;left:332px;top:146px;width:1548px;height:380px;background:linear-gradient(#000 0%,#0b0b0b 35%,#1a1a1a 80%,#1c1c1c 100%);"></div>
<svg style="position:absolute;left:0px;top:0px;" width="1920" height="548"><defs><linearGradient id="rl2" x1="0" x2="0" y1="0" y2="1"><stop offset="0" stop-color="#8e8e8e"/><stop offset="0.5" stop-color="#5a5a5a"/><stop offset="1" stop-color="#262626"/></linearGradient><linearGradient id="pk" x1="0" x2="0" y1="0" y2="1"><stop offset="0" stop-color="#ffffff"/><stop offset="0.3" stop-color="#9ec8e8"/><stop offset="0.55" stop-color="#2a48c0"/><stop offset="1" stop-color="#14145a"/></linearGradient></defs><path d="M385 148.5 H1828" stroke="#8a8a8a" stroke-width="1" stroke-dasharray="1 3" opacity="0.68"/><path d="M385 167.5 H1828" stroke="#8a8a8a" stroke-width="1" stroke-dasharray="1 3" opacity="0.68"/><path d="M385 187.5 H1828" stroke="#8a8a8a" stroke-width="1" stroke-dasharray="1 3" opacity="0.68"/><path d="M385 207.5 H1828" stroke="#8a8a8a" stroke-width="1" stroke-dasharray="1 3" opacity="0.68"/><path d="M385 227.5 H1828" stroke="#8a8a8a" stroke-width="1" stroke-dasharray="1 3" opacity="0.68"/><path d="M385 247.5 H1828" stroke="#8a8a8a" stroke-width="1" stroke-dasharray="1 3" opacity="0.68"/><path d="M385 267.5 H1828" stroke="#8a8a8a" stroke-width="1" stroke-dasharray="1 3" opacity="0.68"/><path d="M385 287.5 H1828" stroke="#8a8a8a" stroke-width="1" stroke-dasharray="1 3" opacity="0.68"/><path d="M385 307.5 H1828" stroke="#8a8a8a" stroke-width="1" stroke-dasharray="1 3" opacity="0.68"/><path d="M385 327.5 H1828" stroke="#8a8a8a" stroke-width="1" stroke-dasharray="1 3" opacity="0.68"/><path d="M385 347.5 H1828" stroke="#8a8a8a" stroke-width="1" stroke-dasharray="1 3" opacity="0.68"/><path d="M385 368.5 H1828" stroke="#8a8a8a" stroke-width="1" stroke-dasharray="1 3" opacity="0.68"/><path d="M385 388.5 H1828" stroke="#8a8a8a" stroke-width="1" stroke-dasharray="1 3" opacity="0.68"/><path d="M385 408.5 H1828" stroke="#8a8a8a" stroke-width="1" stroke-dasharray="1 3" opacity="0.68"/><path d="M385 428.5 H1828" stroke="#8a8a8a" stroke-width="1" stroke-dasharray="1 3" opacity="0.68"/><path d="M385 448.5 H1828" stroke="#8a8a8a" stroke-width="1" stroke-dasharray="1 3" opacity="0.68"/><path d="M385 468.5 H1828" stroke="#8a8a8a" stroke-width="1" stroke-dasharray="1 3" opacity="0.68"/><path d="M385 488.5 H1828" stroke="#8a8a8a" stroke-width="1" stroke-dasharray="1 3" opacity="0.68"/><path d="M385 508.5 H1828" stroke="#8a8a8a" stroke-width="1" stroke-dasharray="1 3" opacity="0.68"/><path d="M1178 147 V524" stroke="#cfcfcf" stroke-width="2"/><path d="M1394.3 147 V524" stroke="#707070" stroke-width="3.4"/><path d="M1686 147 V524" stroke="#c8c8c8" stroke-width="1.6"/><path d="M1696.6 147 V524" stroke="#a8a8a8" stroke-width="2.4"/><path d="M1702.2 147 V524" stroke="#c0c0c0" stroke-width="1.6"/><path d="M1722.3 147 V524" stroke="#c8c8c8" stroke-width="1.6"/><path d="M1730.4 147 V524" stroke="#c8c8c8" stroke-width="1.6"/><path d="M1765.6 147 V524" stroke="#c8c8c8" stroke-width="1.6"/><path d="M1781.2 147 V524" stroke="#5a5ad8" stroke-width="2"/><path d="M1794.7 147 V524" stroke="#c8c8c8" stroke-width="1.6"/><path d="M1393.1 147 V524 M1395.6 147 V524" stroke="#c4c4c4" stroke-width="1.1"/><rect x="1392.5" y="147" width="3" height="7" fill="#e86a6a"/><rect x="1392.5" y="519" width="3" height="5" fill="#c03030"/><rect x="1695.8" y="147" width="1.6" height="10" fill="#d8c860"/><polygon points="1093.0,520.0 1095.5,516.0 1096.5,505.0 1097.0,501.0 1097.8,508.0 1099.0,514.0 1100.5,510.0 1102.0,492.0 1103.5,462.0 1104.8,420.0 1105.5,392.0 1106.0,384.8 1106.5,392.0 1107.2,420.0 1108.4,456.0 1109.5,478.0 1110.5,491.0 1111.7,495.5 1112.6,488.0 1113.3,470.0 1114.0,459.6 1114.6,472.0 1115.3,500.0 1116.5,519.0 1118.0,523.0 1118,525 1093,525" fill="url(#pk)" opacity="0.9"/><polyline points="332.0,526.0 333.0,526.0 334.0,526.0 335.0,526.0 336.0,526.0 337.0,526.0 338.0,526.0 339.0,526.0 340.0,526.0 341.0,526.0 342.0,526.0 343.0,526.0 344.0,526.0 345.0,526.0 346.0,526.0 347.0,526.0 348.0,526.0 349.0,526.0 350.0,526.0 351.0,526.0 352.0,526.0 353.0,526.0 354.0,524.9 355.0,526.0 356.0,526.0 357.0,526.0 358.0,526.0 359.0,526.0 360.0,526.0 361.0,526.0 362.0,526.0 363.0,526.0 364.0,526.0 365.0,523.0 366.0,526.0 367.0,526.0 368.0,522.0 369.0,526.0 370.0,526.0 371.0,526.0 372.0,523.0 373.0,526.0 374.0,526.0 375.0,526.0 376.0,522.0 377.0,526.0 378.0,526.0 379.0,526.0 380.0,526.0 381.0,526.0 382.0,526.0 383.0,526.0 384.0,526.0 385.0,519.0 386.0,522.0 387.0,526.0 388.0,523.0 389.0,525.1 390.0,526.0 391.0,526.0 392.0,526.0 393.0,526.0 394.0,526.0 395.0,526.0 396.0,526.0 397.0,526.0 398.0,526.0 399.0,526.0 400.0,526.0 401.0,526.0 402.0,526.0 403.0,526.0 404.0,526.0 405.0,526.0 406.0,523.0 407.0,526.0 408.0,526.0 409.0,526.0 410.0,526.0 411.0,526.0 412.0,526.0 413.0,526.0 414.0,526.0 415.0,526.0 416.0,526.0 417.0,526.0 418.0,526.0 419.0,526.0 420.0,526.0 421.0,526.0 422.0,526.0 423.0,526.0 424.0,526.0 425.0,526.0 426.0,526.0 427.0,526.0 428.0,526.0 429.0,526.0 430.0,526.0 431.0,526.0 432.0,526.0 433.0,526.0 434.0,526.0 435.0,526.0 436.0,526.0 437.0,522.0 438.0,526.0 439.0,526.0 440.0,526.0 441.0,521.0 442.0,526.0 443.0,519.0 444.0,519.0 445.0,522.0 446.0,526.0 447.0,526.0 448.0,526.0 449.0,526.0 450.0,526.0 451.0,526.0 452.0,526.0 453.0,526.0 454.0,526.0 455.0,526.0 456.0,526.0 457.0,526.0 458.0,526.0 459.0,526.0 460.0,526.0 461.0,526.0 462.0,526.0 463.0,526.0 464.0,526.0 465.0,526.0 466.0,526.0 467.0,526.0 468.0,523.0 469.0,526.0 470.0,526.0 471.0,526.0 472.0,526.0 473.0,526.0 474.0,526.0 475.0,526.0 476.0,526.0 477.0,526.0 478.0,526.0 479.0,526.0 480.0,526.0 481.0,526.0 482.0,526.0 483.0,525.1 484.0,526.0 485.0,526.0 486.0,526.0 487.0,526.0 488.0,526.0 489.0,526.0 490.0,526.0 491.0,523.0 492.0,526.0 493.0,526.0 494.0,526.0 495.0,526.0 496.0,526.0 497.0,526.0 498.0,526.0 499.0,524.6 500.0,523.5 501.0,526.0 502.0,526.0 503.0,526.0 504.0,526.0 505.0,526.0 506.0,526.0 507.0,526.0 508.0,526.0 509.0,526.0 510.0,526.0 511.0,526.0 512.0,526.0 513.0,526.0 514.0,526.0 515.0,526.0 516.0,526.0 517.0,526.0 518.0,526.0 519.0,526.0 520.0,526.0 521.0,526.0 522.0,526.0 523.0,526.0 524.0,526.0 525.0,526.0 526.0,526.0 527.0,526.0 528.0,526.0 529.0,526.0 530.0,526.0 531.0,526.0 532.0,523.0 533.0,526.0 534.0,526.0 535.0,526.0 536.0,526.0 537.0,526.0 538.0,526.0 539.0,526.0 540.0,526.0 541.0,526.0 542.0,526.0 543.0,526.0 544.0,526.0 545.0,526.0 546.0,526.0 547.0,526.0 548.0,526.0 549.0,526.0 550.0,526.0 551.0,525.1 552.0,526.0 553.0,519.0 554.0,522.0 555.0,526.0 556.0,526.0 557.0,526.0 558.0,526.0 559.0,526.0 560.0,526.0 561.0,526.0 562.0,526.0 563.0,526.0 564.0,526.0 565.0,526.0 566.0,526.0 567.0,526.0 568.0,526.0 569.0,526.0 570.0,526.0 571.0,526.0 572.0,526.0 573.0,526.0 574.0,526.0 575.0,526.0 576.0,526.0 577.0,526.0 578.0,526.0 579.0,526.0 580.0,526.0 581.0,526.0 582.0,526.0 583.0,526.0 584.0,526.0 585.0,526.0 586.0,526.0 587.0,526.0 588.0,526.0 589.0,526.0 590.0,522.0 591.0,526.0 592.0,526.0 593.0,526.0 594.0,526.0 595.0,526.0 596.0,526.0 597.0,521.0 598.0,523.0 599.0,526.0 600.0,525.2 601.0,526.0 602.0,526.0 603.0,526.0 604.0,526.0 605.0,526.0 606.0,526.0 607.0,526.0 608.0,526.0 609.0,526.0 610.0,526.0 611.0,526.0 612.0,526.0 613.0,526.0 614.0,526.0 615.0,526.0 616.0,526.0 617.0,524.9 618.0,526.0 619.0,526.0 620.0,526.0 621.0,526.0 622.0,526.0 623.0,526.0 624.0,526.0 625.0,526.0 626.0,526.0 627.0,526.0 628.0,526.0 629.0,526.0 630.0,526.0 631.0,526.0 632.0,526.0 633.0,526.0 634.0,526.0 635.0,526.0 636.0,526.0 637.0,526.0 638.0,526.0 639.0,526.0 640.0,526.0 641.0,526.0 642.0,526.0 643.0,526.0 644.0,526.0 645.0,526.0 646.0,526.0 647.0,526.0 648.0,526.0 649.0,526.0 650.0,526.0 651.0,526.0 652.0,526.0 653.0,526.0 654.0,526.0 655.0,526.0 656.0,526.0 657.0,526.0 658.0,526.0 659.0,526.0 660.0,526.0 661.0,526.0 662.0,521.0 663.0,526.0 664.0,526.0 665.0,526.0 666.0,526.0 667.0,526.0 668.0,526.0 669.0,526.0 670.0,526.0 671.0,526.0 672.0,526.0 673.0,526.0 674.0,523.0 675.0,526.0 676.0,526.0 677.0,526.0 678.0,526.0 679.0,526.0 680.0,526.0 681.0,526.0 682.0,526.0 683.0,526.0 684.0,526.0 685.0,526.0 686.0,526.0 687.0,526.0 688.0,526.0 689.0,526.0 690.0,526.0 691.0,526.0 692.0,526.0 693.0,526.0 694.0,526.0 695.0,526.0 696.0,526.0 697.0,526.0 698.0,526.0 699.0,526.0 700.0,526.0 701.0,526.0 702.0,526.0 703.0,526.0 704.0,526.0 705.0,526.0 706.0,526.0 707.0,526.0 708.0,526.0 709.0,521.0 710.0,523.0 711.0,526.0 712.0,526.0 713.0,526.0 714.0,526.0 715.0,526.0 716.0,526.0 717.0,526.0 718.0,526.0 719.0,526.0 720.0,526.0 721.0,526.0 722.0,526.0 723.0,526.0 724.0,526.0 725.0,526.0 726.0,526.0 727.0,526.0 728.0,526.0 729.0,526.0 730.0,526.0 731.0,526.0 732.0,526.0 733.0,526.0 734.0,526.0 735.0,526.0 736.0,526.0 737.0,526.0 738.0,526.0 739.0,526.0 740.0,526.0 741.0,526.0 742.0,526.0 743.0,526.0 744.0,526.0 745.0,526.0 746.0,526.0 747.0,526.0 748.0,526.0 749.0,526.0 750.0,526.0 751.0,526.0 752.0,526.0 753.0,526.0 754.0,526.0 755.0,526.0 756.0,526.0 757.0,526.0 758.0,526.0 759.0,526.0 760.0,526.0 761.0,526.0 762.0,526.0 763.0,526.0 764.0,526.0 765.0,526.0 766.0,526.0 767.0,526.0 768.0,526.0 769.0,526.0 770.0,526.0 771.0,526.0 772.0,526.0 773.0,526.0 774.0,526.0 775.0,526.0 776.0,526.0 777.0,526.0 778.0,525.1 779.0,526.0 780.0,526.0 781.0,526.0 782.0,526.0 783.0,519.0 784.0,521.0 785.0,523.0 786.0,526.0 787.0,526.0 788.0,526.0 789.0,526.0 790.0,526.0 791.0,526.0 792.0,526.0 793.0,526.0 794.0,526.0 795.0,526.0 796.0,526.0 797.0,526.0 798.0,523.0 799.0,526.0 800.0,526.0 801.0,526.0 802.0,526.0 803.0,526.0 804.0,526.0 805.0,526.0 806.0,526.0 807.0,526.0 808.0,526.0 809.0,526.0 810.0,526.0 811.0,526.0 812.0,526.0 813.0,526.0 814.0,524.7 815.0,526.0 816.0,526.0 817.0,526.0 818.0,526.0 819.0,526.0 820.0,526.0 821.0,526.0 822.0,526.0 823.0,524.6 824.0,526.0 825.0,526.0 826.0,526.0 827.0,526.0 828.0,526.0 829.0,526.0 830.0,522.0 831.0,526.0 832.0,526.0 833.0,526.0 834.0,526.0 835.0,526.0 836.0,526.0 837.0,526.0 838.0,526.0 839.0,523.0 840.0,526.0 841.0,526.0 842.0,526.0 843.0,526.0 844.0,526.0 845.0,526.0 846.0,526.0 847.0,526.0 848.0,526.0 849.0,526.0 850.0,526.0 851.0,525.0 852.0,526.0 853.0,526.0 854.0,526.0 855.0,526.0 856.0,526.0 857.0,526.0 858.0,526.0 859.0,526.0 860.0,526.0 861.0,526.0 862.0,526.0 863.0,526.0 864.0,526.0 865.0,526.0 866.0,526.0 867.0,526.0 868.0,526.0 869.0,526.0 870.0,526.0 871.0,526.0 872.0,526.0 873.0,526.0 874.0,526.0 875.0,526.0 876.0,526.0 877.0,526.0 878.0,526.0 879.0,526.0 880.0,526.0 881.0,526.0 882.0,526.0 883.0,526.0 884.0,526.0 885.0,526.0 886.0,526.0 887.0,526.0 888.0,526.0 889.0,526.0 890.0,526.0 891.0,526.0 892.0,526.0 893.0,526.0 894.0,526.0 895.0,526.0 896.0,526.0 897.0,526.0 898.0,526.0 899.0,526.0 900.0,526.0 901.0,526.0 902.0,526.0 903.0,526.0 904.0,526.0 905.0,526.0 906.0,526.0 907.0,525.1 908.0,526.0 909.0,526.0 910.0,526.0 911.0,526.0 912.0,526.0 913.0,526.0 914.0,526.0 915.0,526.0 916.0,526.0 917.0,526.0 918.0,526.0 919.0,526.0 920.0,526.0 921.0,526.0 922.0,526.0 923.0,526.0 924.0,526.0 925.0,526.0 926.0,526.0 927.0,526.0 928.0,526.0 929.0,526.0 930.0,526.0 931.0,526.0 932.0,526.0 933.0,526.0 934.0,526.0 935.0,526.0 936.0,526.0 937.0,526.0 938.0,526.0 939.0,526.0 940.0,526.0 941.0,526.0 942.0,526.0 943.0,526.0 944.0,526.0 945.0,526.0 946.0,526.0 947.0,526.0 948.0,526.0 949.0,526.0 950.0,526.0 951.0,526.0 952.0,526.0 953.0,526.0 954.0,526.0 955.0,526.0 956.0,526.0 957.0,526.0 958.0,526.0 959.0,526.0 960.0,526.0 961.0,526.0 962.0,526.0 963.0,526.0 964.0,526.0 965.0,526.0 966.0,526.0 967.0,526.0 968.0,526.0 969.0,526.0 970.0,526.0 971.0,526.0 972.0,526.0 973.0,526.0 974.0,526.0 975.0,526.0 976.0,526.0 977.0,526.0 978.0,526.0 979.0,526.0 980.0,526.0 981.0,526.0 982.0,526.0 983.0,526.0 984.0,526.0 985.0,526.0 986.0,526.0 987.0,526.0 988.0,526.0 989.0,526.0 990.0,526.0 991.0,526.0 992.0,526.0 993.0,526.0 994.0,526.0 995.0,526.0 996.0,526.0 997.0,526.0 998.0,526.0 999.0,526.0 1000.0,526.0 1001.0,526.0 1002.0,526.0 1003.0,526.0 1004.0,525.0 1006.0,520.0 1007.0,517.4 1008.0,521.0 1010.0,525.0 1062.0,525.0 1064.0,518.0 1065.5,500.0 1066.0,495.5 1066.8,503.0 1068.0,513.0 1070.0,520.0 1073.0,524.0 1080.0,525.0 1090.0,524.0 1093.0,520.0 1095.5,516.0 1096.5,505.0 1097.0,501.0 1097.8,508.0 1099.0,514.0 1100.5,510.0 1102.0,492.0 1103.5,462.0 1104.8,420.0 1105.5,392.0 1106.0,384.8 1106.5,392.0 1107.2,420.0 1108.4,456.0 1109.5,478.0 1110.5,491.0 1111.7,495.5 1112.6,488.0 1113.3,470.0 1114.0,459.6 1114.6,472.0 1115.3,500.0 1116.5,519.0 1118.0,523.0 1120.0,521.0 1121.0,525.0 1150.0,525.0 1152.0,521.5 1152.7,520.0 1153.5,522.0 1155.0,525.0 1156.0,526.0 1157.0,526.0 1158.0,526.0 1159.0,526.0 1160.0,526.0 1161.0,526.0 1162.0,526.0 1163.0,526.0 1164.0,526.0 1165.0,526.0 1166.0,526.0 1167.0,526.0 1168.0,524.6 1169.0,526.0 1170.0,526.0 1171.0,526.0 1172.0,526.0 1173.0,526.0 1174.0,526.0 1175.0,526.0 1176.0,526.0 1177.0,526.0 1178.0,526.0 1179.0,526.0 1180.0,526.0 1181.0,526.0 1182.0,526.0 1183.0,526.0 1184.0,526.0 1185.0,526.0 1186.0,526.0 1187.0,526.0 1188.0,526.0 1189.0,526.0 1190.0,526.0 1191.0,526.0 1192.0,526.0 1193.0,526.0 1194.0,526.0 1195.0,526.0 1196.0,526.0 1197.0,526.0 1198.0,526.0 1199.0,526.0 1200.0,526.0 1201.0,526.0 1202.0,526.0 1203.0,526.0 1204.0,526.0 1205.0,525.0 1206.0,526.0 1207.0,526.0 1208.0,526.0 1209.0,526.0 1210.0,524.5 1211.0,526.0 1212.0,526.0 1213.0,526.0 1214.0,526.0 1215.0,526.0 1216.0,526.0 1217.0,526.0 1218.0,526.0 1219.0,526.0 1220.0,526.0 1221.0,526.0 1222.0,526.0 1223.0,526.0 1224.0,526.0 1225.0,526.0 1226.0,526.0 1227.0,526.0 1228.0,526.0 1229.0,526.0 1230.0,526.0 1231.0,526.0 1232.0,526.0 1233.0,526.0 1234.0,526.0 1235.0,526.0 1236.0,526.0 1237.0,523.5 1238.0,526.0 1239.0,526.0 1240.0,526.0 1241.0,526.0 1242.0,526.0 1243.0,526.0 1244.0,526.0 1245.0,526.0 1246.0,526.0 1247.0,526.0 1248.0,526.0 1249.0,526.0 1250.0,526.0 1251.0,526.0 1252.0,526.0 1253.0,526.0 1254.0,526.0 1255.0,525.0 1256.0,526.0 1257.0,526.0 1258.0,526.0 1259.0,526.0 1260.0,526.0 1261.0,525.0 1262.0,526.0 1263.0,526.0 1264.0,526.0 1265.0,526.0 1266.0,526.0 1267.0,521.0 1268.0,526.0 1269.0,526.0 1270.0,526.0 1271.0,526.0 1272.0,526.0 1273.0,526.0 1274.0,526.0 1275.0,526.0 1276.0,526.0 1277.0,526.0 1278.0,526.0 1279.0,526.0 1280.0,526.0 1281.0,523.5 1282.0,526.0 1283.0,526.0 1284.0,526.0 1285.0,526.0 1286.0,526.0 1287.0,526.0 1288.0,526.0 1289.0,526.0 1290.0,526.0 1291.0,526.0 1292.0,526.0 1293.0,526.0 1294.0,526.0 1295.0,526.0 1296.0,526.0 1297.0,526.0 1298.0,526.0 1299.0,526.0 1300.0,526.0 1301.0,526.0 1302.0,526.0 1303.0,526.0 1304.0,526.0 1305.0,526.0 1306.0,526.0 1307.0,526.0 1308.0,526.0 1309.0,526.0 1310.0,526.0 1311.0,526.0 1312.0,526.0 1313.0,526.0 1314.0,526.0 1315.0,526.0 1316.0,526.0 1317.0,526.0 1318.0,526.0 1319.0,526.0 1320.0,526.0 1321.0,526.0 1322.0,526.0 1323.0,526.0 1324.0,526.0 1325.0,526.0 1326.0,526.0 1327.0,526.0 1328.0,526.0 1329.0,525.1 1330.0,526.0 1331.0,526.0 1332.0,526.0 1333.0,526.0 1334.0,526.0 1335.0,526.0 1336.0,526.0 1337.0,526.0 1338.0,526.0 1339.0,526.0 1340.0,526.0 1341.0,526.0 1342.0,526.0 1343.0,526.0 1344.0,526.0 1345.0,526.0 1346.0,526.0 1347.0,526.0 1348.0,526.0 1349.0,526.0 1350.0,526.0 1351.0,526.0 1352.0,526.0 1353.0,526.0 1354.0,526.0 1355.0,526.0 1356.0,526.0 1357.0,526.0 1358.0,526.0 1359.0,526.0 1360.0,526.0 1361.0,526.0 1362.0,526.0 1363.0,526.0 1364.0,526.0 1365.0,526.0 1366.0,526.0 1367.0,526.0 1368.0,526.0 1369.0,526.0 1370.0,526.0 1371.0,526.0 1372.0,526.0 1373.0,526.0 1374.0,526.0 1375.0,526.0 1376.0,526.0 1377.0,526.0 1378.0,526.0 1379.0,526.0 1380.0,526.0 1381.0,526.0 1382.0,526.0 1383.0,526.0 1384.0,526.0 1385.0,526.0 1386.0,526.0 1387.0,526.0 1388.0,526.0 1389.0,526.0 1390.0,526.0 1391.0,526.0 1392.0,526.0 1393.0,526.0 1394.0,526.0 1395.0,526.0 1396.0,526.0 1397.0,526.0 1398.0,526.0 1399.0,526.0 1400.0,525.1 1401.0,526.0 1402.0,526.0 1403.0,526.0 1404.0,526.0 1405.0,526.0 1406.0,526.0 1407.0,526.0 1408.0,526.0 1409.0,526.0 1410.0,526.0 1411.0,526.0 1412.0,526.0 1413.0,526.0 1414.0,526.0 1415.0,526.0 1416.0,526.0 1417.0,526.0 1418.0,526.0 1419.0,526.0 1420.0,526.0 1421.0,526.0 1422.0,526.0 1423.0,526.0 1424.0,526.0 1425.0,526.0 1426.0,526.0 1427.0,526.0 1428.0,526.0 1429.0,526.0 1430.0,526.0 1431.0,526.0 1432.0,526.0 1433.0,526.0 1434.0,526.0 1435.0,526.0 1436.0,526.0 1437.0,526.0 1438.0,526.0 1439.0,526.0 1440.0,526.0 1441.0,526.0 1442.0,526.0 1443.0,526.0 1444.0,526.0 1445.0,526.0 1446.0,526.0 1447.0,526.0 1448.0,526.0 1449.0,526.0 1450.0,526.0 1451.0,526.0 1452.0,526.0 1453.0,526.0 1454.0,526.0 1455.0,526.0 1456.0,526.0 1457.0,526.0 1458.0,526.0 1459.0,526.0 1460.0,526.0 1461.0,526.0 1462.0,526.0 1463.0,526.0 1464.0,526.0 1465.0,526.0 1466.0,526.0 1467.0,526.0 1468.0,526.0 1469.0,526.0 1470.0,526.0 1471.0,526.0 1472.0,526.0 1473.0,526.0 1474.0,526.0 1475.0,526.0 1476.0,526.0 1477.0,526.0 1478.0,526.0 1479.0,526.0 1480.0,526.0 1481.0,526.0 1482.0,526.0 1483.0,526.0 1484.0,526.0 1485.0,526.0 1486.0,526.0 1487.0,526.0 1488.0,526.0 1489.0,526.0 1490.0,526.0 1491.0,526.0 1492.0,526.0 1493.0,526.0 1494.0,526.0 1495.0,526.0 1496.0,526.0 1497.0,526.0 1498.0,526.0 1499.0,526.0 1500.0,526.0 1501.0,526.0 1502.0,526.0 1503.0,526.0 1504.0,526.0 1505.0,526.0 1506.0,526.0 1507.0,526.0 1508.0,526.0 1509.0,526.0 1510.0,526.0 1511.0,526.0 1512.0,526.0 1513.0,526.0 1514.0,526.0 1515.0,526.0 1516.0,526.0 1517.0,526.0 1518.0,526.0 1519.0,526.0 1520.0,524.9 1521.0,526.0 1522.0,522.0 1523.0,526.0 1524.0,526.0 1525.0,526.0 1526.0,526.0 1527.0,526.0 1528.0,526.0 1529.0,526.0 1530.0,526.0 1531.0,526.0 1532.0,526.0 1533.0,526.0 1534.0,526.0 1535.0,526.0 1536.0,526.0 1537.0,526.0 1538.0,526.0 1539.0,526.0 1540.0,526.0 1541.0,526.0 1542.0,526.0 1543.0,526.0 1544.0,526.0 1545.0,526.0 1546.0,526.0 1547.0,526.0 1548.0,526.0 1549.0,526.0 1550.0,526.0 1551.0,526.0 1552.0,526.0 1553.0,526.0 1554.0,526.0 1555.0,526.0 1556.0,523.0 1557.0,526.0 1558.0,526.0 1559.0,526.0 1560.0,526.0 1561.0,526.0 1562.0,526.0 1563.0,526.0 1564.0,526.0 1565.0,526.0 1566.0,526.0 1567.0,526.0 1568.0,526.0 1569.0,526.0 1570.0,526.0 1571.0,526.0 1572.0,526.0 1573.0,526.0 1574.0,526.0 1575.0,526.0 1576.0,526.0 1577.0,526.0 1578.0,526.0 1579.0,526.0 1580.0,526.0 1581.0,526.0 1582.0,526.0 1583.0,526.0 1584.0,526.0 1585.0,526.0 1586.0,526.0 1587.0,523.0 1588.0,526.0 1589.0,526.0 1590.0,526.0 1591.0,526.0 1592.0,526.0 1593.0,526.0 1594.0,526.0 1595.0,526.0 1596.0,526.0 1597.0,526.0 1598.0,526.0 1599.0,526.0 1600.0,526.0 1601.0,526.0 1602.0,526.0 1603.0,526.0 1604.0,526.0 1605.0,526.0 1606.0,526.0 1607.0,526.0 1608.0,526.0 1609.0,526.0 1610.0,526.0 1611.0,526.0 1612.0,526.0 1613.0,526.0 1614.0,526.0 1615.0,526.0 1616.0,520.0 1617.0,523.0 1618.0,526.0 1619.0,525.2 1620.0,526.0 1621.0,526.0 1622.0,526.0 1623.0,526.0 1624.0,526.0 1625.0,526.0 1626.0,526.0 1627.0,526.0 1628.0,526.0 1629.0,526.0 1630.0,526.0 1631.0,526.0 1632.0,526.0 1633.0,526.0 1634.0,526.0 1635.0,526.0 1636.0,526.0 1637.0,526.0 1638.0,523.5 1639.0,526.0 1640.0,526.0 1641.0,526.0 1642.0,526.0 1643.0,526.0 1644.0,526.0 1645.0,526.0 1646.0,526.0 1647.0,526.0 1648.0,526.0 1649.0,526.0 1650.0,526.0 1651.0,526.0 1652.0,526.0 1653.0,526.0 1654.0,526.0 1655.0,526.0 1656.0,526.0 1657.0,526.0 1658.0,526.0 1659.0,526.0 1660.0,526.0 1661.0,526.0 1662.0,526.0 1663.0,526.0 1664.0,526.0 1665.0,526.0 1666.0,526.0 1667.0,526.0 1668.0,526.0 1669.0,526.0 1670.0,526.0 1671.0,526.0 1672.0,526.0 1673.0,526.0 1674.0,526.0 1675.0,526.0 1676.0,526.0 1677.0,526.0 1678.0,526.0 1679.0,526.0 1680.0,526.0 1681.0,526.0 1682.0,526.0 1683.0,526.0 1684.0,526.0 1685.0,526.0 1686.0,526.0 1687.0,526.0 1688.0,526.0 1689.0,526.0 1690.0,526.0 1691.0,526.0 1692.0,526.0 1693.0,523.0 1694.0,526.0 1695.0,526.0 1696.0,526.0 1697.0,526.0 1698.0,526.0 1699.0,523.0 1700.0,526.0 1701.0,526.0 1702.0,526.0 1703.0,523.5 1704.0,526.0 1705.0,526.0 1706.0,526.0 1707.0,526.0 1708.0,526.0 1709.0,526.0 1710.0,526.0 1711.0,526.0 1712.0,526.0 1713.0,526.0 1714.0,526.0 1715.0,526.0 1716.0,526.0 1717.0,526.0 1718.0,526.0 1719.0,526.0 1720.0,526.0 1721.0,526.0 1722.0,526.0 1723.0,526.0 1724.0,526.0 1725.0,526.0 1726.0,525.0 1727.5,523.0 1729.0,519.0 1729.9,512.0 1730.4,510.0 1730.9,512.0 1731.8,519.0 1733.0,523.0 1734.5,525.0 1735.0,526.0 1736.0,526.0 1737.0,526.0 1738.0,526.0 1739.0,526.0 1740.0,521.0 1741.0,526.0 1742.0,526.0 1743.0,526.0 1744.0,526.0 1745.0,526.0 1746.0,520.0 1747.0,523.0 1748.0,526.0 1749.0,526.0 1750.0,526.0 1751.0,526.0 1752.0,526.0 1753.0,526.0 1754.0,526.0 1755.0,520.0 1756.0,523.0 1757.0,526.0 1758.0,524.9 1759.0,526.0 1760.0,526.0 1761.0,526.0 1762.0,526.0 1763.0,526.0 1764.0,526.0 1765.0,526.0 1766.0,526.0 1767.0,526.0 1768.0,526.0 1769.0,526.0 1770.0,526.0 1771.0,526.0 1772.0,526.0 1773.0,526.0 1774.0,526.0 1775.0,526.0 1776.0,526.0 1777.0,526.0 1778.0,526.0 1779.0,526.0 1780.0,526.0 1781.0,526.0 1782.0,526.0 1783.0,526.0 1784.0,526.0 1785.0,526.0 1786.0,526.0 1787.0,526.0 1788.0,526.0 1789.0,526.0 1790.0,526.0 1791.0,526.0 1792.0,526.0 1793.0,526.0 1794.0,526.0 1795.0,526.0 1796.0,526.0 1797.0,526.0 1798.0,523.0 1799.0,526.0 1800.0,526.0 1801.0,526.0 1802.0,526.0 1803.0,526.0 1804.0,526.0 1805.0,526.0 1806.0,526.0 1807.0,522.0 1808.0,523.5 1809.0,526.0 1810.0,526.0 1811.0,526.0 1812.0,526.0 1813.0,526.0 1814.0,526.0 1815.0,526.0 1816.0,526.0 1817.0,526.0 1818.0,526.0 1819.0,526.0 1820.0,526.0 1821.0,526.0 1822.0,526.0 1823.0,526.0 1824.0,526.0 1825.0,526.0 1826.0,526.0 1827.0,526.0 1828.0,526.0 1829.0,524.8 1830.0,526.0 1831.0,526.0 1832.0,526.0 1833.0,526.0 1834.0,526.0 1835.0,526.0 1836.0,526.0 1837.0,526.0 1838.0,526.0 1839.0,526.0 1840.0,526.0 1841.0,526.0 1842.0,526.0 1843.0,526.0 1844.0,526.0 1845.0,526.0 1846.0,526.0 1847.0,526.0 1848.0,526.0 1849.0,526.0 1850.0,526.0 1851.0,526.0 1852.0,526.0 1853.0,526.0 1854.0,526.0 1855.0,523.5 1856.0,526.0 1857.0,526.0 1858.0,526.0 1859.0,526.0 1860.0,526.0 1861.0,526.0 1862.0,526.0 1863.0,526.0 1864.0,526.0 1865.0,526.0 1866.0,526.0 1867.0,526.0 1868.0,526.0 1869.0,526.0 1870.0,526.0 1871.0,526.0 1872.0,526.0 1873.0,524.8 1874.0,526.0 1875.0,526.0 1876.0,526.0 1877.0,526.0 1878.0,526.0 1879.0,526.0" fill="none" stroke="#e8e8e8" stroke-width="1.1" stroke-linejoin="round"/><rect x="332" y="525.5" width="1548" height="10.5" fill="url(#rl2)"/><rect x="345.8" y="526.500" width="1" height="3" fill="#c8c8c8" opacity="0.5"/><rect x="360.2" y="526.500" width="1" height="3" fill="#c8c8c8" opacity="0.5"/><rect x="374.5" y="526.500" width="1" height="3" fill="#c8c8c8" opacity="0.5"/><rect x="388.8" y="526.500" width="1.2" height="4" fill="#d8d8d8" opacity="0.6"/><rect x="403.1" y="526.500" width="1" height="3" fill="#c8c8c8" opacity="0.5"/><rect x="417.4" y="526.500" width="1" height="3" fill="#c8c8c8" opacity="0.5"/><rect x="431.8" y="526.500" width="1" height="3" fill="#c8c8c8" opacity="0.5"/><rect x="446.1" y="526.500" width="1" height="3" fill="#c8c8c8" opacity="0.5"/><rect x="460.4" y="526.500" width="1" height="3" fill="#c8c8c8" opacity="0.5"/><rect x="474.7" y="526.500" width="1" height="3" fill="#c8c8c8" opacity="0.5"/><rect x="489.0" y="526.500" width="1" height="3" fill="#c8c8c8" opacity="0.5"/><rect x="503.4" y="526.500" width="1" height="3" fill="#c8c8c8" opacity="0.5"/><rect x="517.7" y="526.500" width="1" height="3" fill="#c8c8c8" opacity="0.5"/><rect x="532.0" y="526.500" width="1.2" height="4" fill="#d8d8d8" opacity="0.6"/><rect x="546.3" y="526.500" width="1" height="3" fill="#c8c8c8" opacity="0.5"/><rect x="560.6" y="526.500" width="1" height="3" fill="#c8c8c8" opacity="0.5"/><rect x="575.0" y="526.500" width="1" height="3" fill="#c8c8c8" opacity="0.5"/><rect x="589.3" y="526.500" width="1" height="3" fill="#c8c8c8" opacity="0.5"/><rect x="603.6" y="526.500" width="1" height="3" fill="#c8c8c8" opacity="0.5"/><rect x="617.9" y="526.500" width="1" height="3" fill="#c8c8c8" opacity="0.5"/><rect x="632.2" y="526.500" width="1" height="3" fill="#c8c8c8" opacity="0.5"/><rect x="646.6" y="526.500" width="1" height="3" fill="#c8c8c8" opacity="0.5"/><rect x="660.9" y="526.500" width="1" height="3" fill="#c8c8c8" opacity="0.5"/><rect x="675.2" y="526.500" width="1.2" height="4" fill="#d8d8d8" opacity="0.6"/><rect x="689.5" y="526.500" width="1" height="3" fill="#c8c8c8" opacity="0.5"/><rect x="703.8" y="526.500" width="1" height="3" fill="#c8c8c8" opacity="0.5"/><rect x="718.2" y="526.500" width="1" height="3" fill="#c8c8c8" opacity="0.5"/><rect x="732.5" y="526.500" width="1" height="3" fill="#c8c8c8" opacity="0.5"/><rect x="746.8" y="526.500" width="1" height="3" fill="#c8c8c8" opacity="0.5"/><rect x="761.1" y="526.500" width="1" height="3" fill="#c8c8c8" opacity="0.5"/><rect x="775.4" y="526.500" width="1" height="3" fill="#c8c8c8" opacity="0.5"/><rect x="789.8" y="526.500" width="1" height="3" fill="#c8c8c8" opacity="0.5"/><rect x="804.1" y="526.500" width="1" height="3" fill="#c8c8c8" opacity="0.5"/><rect x="818.4" y="526.500" width="1.2" height="4" fill="#d8d8d8" opacity="0.6"/><rect x="832.7" y="526.500" width="1" height="3" fill="#c8c8c8" opacity="0.5"/><rect x="847.0" y="526.500" width="1" height="3" fill="#c8c8c8" opacity="0.5"/><rect x="861.4" y="526.500" width="1" height="3" fill="#c8c8c8" opacity="0.5"/><rect x="875.7" y="526.500" width="1" height="3" fill="#c8c8c8" opacity="0.5"/><rect x="890.0" y="526.500" width="1" height="3" fill="#c8c8c8" opacity="0.5"/><rect x="904.3" y="526.500" width="1" height="3" fill="#c8c8c8" opacity="0.5"/><rect x="918.6" y="526.500" width="1" height="3" fill="#c8c8c8" opacity="0.5"/><rect x="933.0" y="526.500" width="1" height="3" fill="#c8c8c8" opacity="0.5"/><rect x="947.3" y="526.500" width="1" height="3" fill="#c8c8c8" opacity="0.5"/><rect x="961.6" y="526.500" width="1.2" height="4" fill="#d8d8d8" opacity="0.6"/><rect x="975.9" y="526.500" width="1" height="3" fill="#c8c8c8" opacity="0.5"/><rect x="990.2" y="526.500" width="1" height="3" fill="#c8c8c8" opacity="0.5"/><rect x="1004.6" y="526.500" width="1" height="3" fill="#c8c8c8" opacity="0.5"/><rect x="1018.9" y="526.500" width="1" height="3" fill="#c8c8c8" opacity="0.5"/><rect x="1033.2" y="526.500" width="1" height="3" fill="#c8c8c8" opacity="0.5"/><rect x="1047.5" y="526.500" width="1" height="3" fill="#c8c8c8" opacity="0.5"/><rect x="1061.8" y="526.500" width="1" height="3" fill="#c8c8c8" opacity="0.5"/><rect x="1076.2" y="526.500" width="1" height="3" fill="#c8c8c8" opacity="0.5"/><rect x="1090.5" y="526.500" width="1" height="3" fill="#c8c8c8" opacity="0.5"/><rect x="1104.8" y="526.500" width="1.2" height="4" fill="#d8d8d8" opacity="0.6"/><rect x="1119.1" y="526.500" width="1" height="3" fill="#c8c8c8" opacity="0.5"/><rect x="1133.4" y="526.500" width="1" height="3" fill="#c8c8c8" opacity="0.5"/><rect x="1147.8" y="526.500" width="1" height="3" fill="#c8c8c8" opacity="0.5"/><rect x="1162.1" y="526.500" width="1" height="3" fill="#c8c8c8" opacity="0.5"/><rect x="1176.4" y="526.500" width="1" height="3" fill="#c8c8c8" opacity="0.5"/><rect x="1190.7" y="526.500" width="1" height="3" fill="#c8c8c8" opacity="0.5"/><rect x="1205.0" y="526.500" width="1" height="3" fill="#c8c8c8" opacity="0.5"/><rect x="1219.4" y="526.500" width="1" height="3" fill="#c8c8c8" opacity="0.5"/><rect x="1233.7" y="526.500" width="1" height="3" fill="#c8c8c8" opacity="0.5"/><rect x="1248.0" y="526.500" width="1.2" height="4" fill="#d8d8d8" opacity="0.6"/><rect x="1262.3" y="526.500" width="1" height="3" fill="#c8c8c8" opacity="0.5"/><rect x="1276.6" y="526.500" width="1" height="3" fill="#c8c8c8" opacity="0.5"/><rect x="1291.0" y="526.500" width="1" height="3" fill="#c8c8c8" opacity="0.5"/><rect x="1305.3" y="526.500" width="1" height="3" fill="#c8c8c8" opacity="0.5"/><rect x="1319.6" y="526.500" width="1" height="3" fill="#c8c8c8" opacity="0.5"/><rect x="1333.9" y="526.500" width="1" height="3" fill="#c8c8c8" opacity="0.5"/><rect x="1348.2" y="526.500" width="1" height="3" fill="#c8c8c8" opacity="0.5"/><rect x="1362.6" y="526.500" width="1" height="3" fill="#c8c8c8" opacity="0.5"/><rect x="1376.9" y="526.500" width="1" height="3" fill="#c8c8c8" opacity="0.5"/><rect x="1391.2" y="526.500" width="1.2" height="4" fill="#d8d8d8" opacity="0.6"/><rect x="1405.5" y="526.500" width="1" height="3" fill="#c8c8c8" opacity="0.5"/><rect x="1419.8" y="526.500" width="1" height="3" fill="#c8c8c8" opacity="0.5"/><rect x="1434.2" y="526.500" width="1" height="3" fill="#c8c8c8" opacity="0.5"/><rect x="1448.5" y="526.500" width="1" height="3" fill="#c8c8c8" opacity="0.5"/><rect x="1462.8" y="526.500" width="1" height="3" fill="#c8c8c8" opacity="0.5"/><rect x="1477.1" y="526.500" width="1" height="3" fill="#c8c8c8" opacity="0.5"/><rect x="1491.4" y="526.500" width="1" height="3" fill="#c8c8c8" opacity="0.5"/><rect x="1505.8" y="526.500" width="1" height="3" fill="#c8c8c8" opacity="0.5"/><rect x="1520.1" y="526.500" width="1" height="3" fill="#c8c8c8" opacity="0.5"/><rect x="1534.4" y="526.500" width="1.2" height="4" fill="#d8d8d8" opacity="0.6"/><rect x="1548.7" y="526.500" width="1" height="3" fill="#c8c8c8" opacity="0.5"/><rect x="1563.0" y="526.500" width="1" height="3" fill="#c8c8c8" opacity="0.5"/><rect x="1577.4" y="526.500" width="1" height="3" fill="#c8c8c8" opacity="0.5"/><rect x="1591.7" y="526.500" width="1" height="3" fill="#c8c8c8" opacity="0.5"/><rect x="1606.0" y="526.500" width="1" height="3" fill="#c8c8c8" opacity="0.5"/><rect x="1620.3" y="526.500" width="1" height="3" fill="#c8c8c8" opacity="0.5"/><rect x="1634.6" y="526.500" width="1" height="3" fill="#c8c8c8" opacity="0.5"/><rect x="1649.0" y="526.500" width="1" height="3" fill="#c8c8c8" opacity="0.5"/><rect x="1663.3" y="526.500" width="1" height="3" fill="#c8c8c8" opacity="0.5"/><rect x="1677.6" y="526.500" width="1.2" height="4" fill="#d8d8d8" opacity="0.6"/><rect x="1691.9" y="526.500" width="1" height="3" fill="#c8c8c8" opacity="0.5"/><rect x="1706.2" y="526.500" width="1" height="3" fill="#c8c8c8" opacity="0.5"/><rect x="1720.6" y="526.500" width="1" height="3" fill="#c8c8c8" opacity="0.5"/><rect x="1734.9" y="526.500" width="1" height="3" fill="#c8c8c8" opacity="0.5"/><rect x="1749.2" y="526.500" width="1" height="3" fill="#c8c8c8" opacity="0.5"/><rect x="1763.5" y="526.500" width="1" height="3" fill="#c8c8c8" opacity="0.5"/><rect x="1777.8" y="526.500" width="1" height="3" fill="#c8c8c8" opacity="0.5"/><rect x="1792.2" y="526.500" width="1" height="3" fill="#c8c8c8" opacity="0.5"/><rect x="1806.5" y="526.500" width="1" height="3" fill="#c8c8c8" opacity="0.5"/><rect x="1820.8" y="526.500" width="1.2" height="4" fill="#d8d8d8" opacity="0.6"/><rect x="1835.1" y="526.500" width="1" height="3" fill="#c8c8c8" opacity="0.5"/><rect x="1849.4" y="526.500" width="1" height="3" fill="#c8c8c8" opacity="0.5"/><rect x="1863.8" y="526.500" width="1" height="3" fill="#c8c8c8" opacity="0.5"/><rect x="1170.5" y="157.500" width="15" height="15" fill="#2a2a2a" opacity="0.92"/><text x="1178.0" y="169.5" font-size="11" fill="#fff" text-anchor="middle" font-family="Liberation Sans,sans-serif">1</text><rect x="1386.8" y="157.500" width="15" height="15" fill="#2a2a2a" opacity="0.92"/><text x="1394.3" y="169.5" font-size="11" fill="#fff" text-anchor="middle" font-family="Liberation Sans,sans-serif">2</text><rect x="1678.5" y="157.500" width="15" height="15" fill="#2a2a2a" opacity="0.92"/><text x="1686.0" y="169.5" font-size="11" fill="#fff" text-anchor="middle" font-family="Liberation Sans,sans-serif">3</text><rect x="1694.7" y="157.500" width="15" height="15" fill="#2a2a2a" opacity="0.92"/><text x="1702.2" y="169.5" font-size="11" fill="#fff" text-anchor="middle" font-family="Liberation Sans,sans-serif">5</text><rect x="1714.8" y="157.500" width="15" height="15" fill="#2a2a2a" opacity="0.92"/><text x="1723.3" y="169.5" font-size="11" fill="#fff" text-anchor="middle" font-family="Liberation Sans,sans-serif" clip-path="inset(0 3px 0 0)">6</text><rect x="1722.9" y="157.500" width="15" height="15" fill="#2a2a2a" opacity="0.92"/><text x="1730.4" y="169.5" font-size="11" fill="#fff" text-anchor="middle" font-family="Liberation Sans,sans-serif">7</text><rect x="1758.1" y="157.500" width="15" height="15" fill="#2a2a2a" opacity="0.92"/><text x="1765.6" y="169.5" font-size="11" fill="#fff" text-anchor="middle" font-family="Liberation Sans,sans-serif">8</text><rect x="1773.7" y="157.500" width="15" height="15" fill="#14146a" opacity="0.92"/><text x="1781.2" y="169.5" font-size="11" fill="#fff" text-anchor="middle" font-family="Liberation Sans,sans-serif">9</text><rect x="1786.2" y="157.500" width="17" height="15" fill="#2a2a2a" opacity="0.92"/><text x="1794.7" y="169.5" font-size="11" fill="#fff" text-anchor="middle" font-family="Liberation Sans,sans-serif">10</text><rect x="390" y="151" width="288.500" height="115" fill="#000" stroke="#1c1c1c" stroke-width="1.5"/><path d="M392 207.2 H676" stroke="#3a3a3a" stroke-width="1" stroke-dasharray="1 3" opacity="0.5"/><path d="M392 227.3 H676" stroke="#3a3a3a" stroke-width="1" stroke-dasharray="1 3" opacity="0.5"/><path d="M392 247.4 H676" stroke="#3a3a3a" stroke-width="1" stroke-dasharray="1 3" opacity="0.5"/><path d="M421.5 207.0 A340.2 340.2 0 0 1 649.1 207.0" fill="none" stroke="#fff" stroke-width="3"/><path d="M437.2 201.8 L434.9 194.2" stroke="#d8d8d8" stroke-width="1.3"/><path d="M453.2 197.5 L450.3 185.8" stroke="#d8d8d8" stroke-width="2"/><path d="M469.4 193.8 L467.8 186.0" stroke="#d8d8d8" stroke-width="1.3"/><path d="M485.7 191.0 L484.0 179.2" stroke="#d8d8d8" stroke-width="2"/><path d="M502.2 189.0 L501.4 181.1" stroke="#d8d8d8" stroke-width="1.3"/><path d="M518.7 187.8 L518.1 175.8" stroke="#d8d8d8" stroke-width="2"/><path d="M535.3 187.4 L535.3 179.4" stroke="#d8d8d8" stroke-width="1.3"/><path d="M551.9 187.8 L552.5 175.8" stroke="#d8d8d8" stroke-width="2"/><path d="M568.4 189.0 L569.2 181.1" stroke="#d8d8d8" stroke-width="1.3"/><path d="M584.9 191.0 L586.6 179.2" stroke="#d8d8d8" stroke-width="2"/><path d="M601.2 193.8 L602.8 186.0" stroke="#d8d8d8" stroke-width="1.3"/><path d="M617.4 197.5 L620.3 185.8" stroke="#d8d8d8" stroke-width="2"/><path d="M633.4 201.8 L635.7 194.2" stroke="#d8d8d8" stroke-width="1.3"/><path d="M649.1 207.0 L653.2 195.7" stroke="#d8d8d8" stroke-width="2"/><text x="414.7" y="192.1" font-size="12" font-style="italic" fill="#dcdcdc" text-anchor="middle" font-family="Liberation Sans,sans-serif">-140</text><text x="448" y="182.2" font-size="12" font-style="italic" fill="#dcdcdc" text-anchor="middle" font-family="Liberation Sans,sans-serif">-120</text><text x="482" y="174.89999999999998" font-size="12" font-style="italic" fill="#dcdcdc" text-anchor="middle" font-family="Liberation Sans,sans-serif">-100</text><text x="517.5" y="171.79999999999998" font-size="12" font-style="italic" fill="#dcdcdc" text-anchor="middle" font-family="Liberation Sans,sans-serif">-80</text><text x="552" y="171.79999999999998" font-size="12" font-style="italic" fill="#dcdcdc" text-anchor="middle" font-family="Liberation Sans,sans-serif">-60</text><text x="587" y="174.89999999999998" font-size="12" font-style="italic" fill="#dcdcdc" text-anchor="middle" font-family="Liberation Sans,sans-serif">-40</text><text x="621" y="182.2" font-size="12" font-style="italic" fill="#dcdcdc" text-anchor="middle" font-family="Liberation Sans,sans-serif">-20</text><text x="655" y="192.1" font-size="12" font-style="italic" fill="#dcdcdc" text-anchor="middle" font-family="Liberation Sans,sans-serif">0</text><text x="398" y="167" font-size="13.5" fill="#f0f0f0" font-family="Liberation Sans,sans-serif">dBm</text><path d="M410 184.500 L439.5 266.5" stroke="#e01010" stroke-width="1.5"/><rect x="504.5" y="230.500" width="59.5" height="20" rx="3" fill="#c3d938"/><text x="534.3" y="246" font-size="14" font-weight="bold" fill="#111" text-anchor="middle" font-family="Liberation Sans,sans-serif">-140.0</text></svg>
<div style="position:absolute;top:140.5px;line-height:16px;height:16px;font-size:10.5px;color:#e8e8e8;font-family:'Liberation Sans',sans-serif;white-space:pre;left:336px;letter-spacing:-0.35px;">-50 dBm</div>
<div style="position:absolute;top:140.5px;line-height:16px;height:16px;font-size:10.5px;color:#e8e8e8;font-family:'Liberation Sans',sans-serif;white-space:pre;left:1876px;transform:translateX(-100%);letter-spacing:-0.35px;">-50 dBm</div>
<div style="position:absolute;top:159.2px;line-height:16px;height:16px;font-size:10.5px;color:#e8e8e8;font-family:'Liberation Sans',sans-serif;white-space:pre;left:336px;letter-spacing:-0.35px;">-55 dBm</div>
<div style="position:absolute;top:159.2px;line-height:16px;height:16px;font-size:10.5px;color:#e8e8e8;font-family:'Liberation Sans',sans-serif;white-space:pre;left:1876px;transform:translateX(-100%);letter-spacing:-0.35px;">-55 dBm</div>
<div style="position:absolute;top:179.3px;line-height:16px;height:16px;font-size:10.5px;color:#e8e8e8;font-family:'Liberation Sans',sans-serif;white-space:pre;left:336px;letter-spacing:-0.35px;">-60 dBm</div>
<div style="position:absolute;top:179.3px;line-height:16px;height:16px;font-size:10.5px;color:#e8e8e8;font-family:'Liberation Sans',sans-serif;white-space:pre;left:1876px;transform:translateX(-100%);letter-spacing:-0.35px;">-60 dBm</div>
<div style="position:absolute;top:199.4px;line-height:16px;height:16px;font-size:10.5px;color:#e8e8e8;font-family:'Liberation Sans',sans-serif;white-space:pre;left:336px;letter-spacing:-0.35px;">-65 dBm</div>
<div style="position:absolute;top:199.4px;line-height:16px;height:16px;font-size:10.5px;color:#e8e8e8;font-family:'Liberation Sans',sans-serif;white-space:pre;left:1876px;transform:translateX(-100%);letter-spacing:-0.35px;">-65 dBm</div>
<div style="position:absolute;top:219.5px;line-height:16px;height:16px;font-size:10.5px;color:#e8e8e8;font-family:'Liberation Sans',sans-serif;white-space:pre;left:336px;letter-spacing:-0.35px;">-70 dBm</div>
<div style="position:absolute;top:219.5px;line-height:16px;height:16px;font-size:10.5px;color:#e8e8e8;font-family:'Liberation Sans',sans-serif;white-space:pre;left:1876px;transform:translateX(-100%);letter-spacing:-0.35px;">-70 dBm</div>
<div style="position:absolute;top:239.6px;line-height:16px;height:16px;font-size:10.5px;color:#e8e8e8;font-family:'Liberation Sans',sans-serif;white-space:pre;left:336px;letter-spacing:-0.35px;">-75 dBm</div>
<div style="position:absolute;top:239.6px;line-height:16px;height:16px;font-size:10.5px;color:#e8e8e8;font-family:'Liberation Sans',sans-serif;white-space:pre;left:1876px;transform:translateX(-100%);letter-spacing:-0.35px;">-75 dBm</div>
<div style="position:absolute;top:259.7px;line-height:16px;height:16px;font-size:10.5px;color:#e8e8e8;font-family:'Liberation Sans',sans-serif;white-space:pre;left:336px;letter-spacing:-0.35px;">-80 dBm</div>
<div style="position:absolute;top:259.7px;line-height:16px;height:16px;font-size:10.5px;color:#e8e8e8;font-family:'Liberation Sans',sans-serif;white-space:pre;left:1876px;transform:translateX(-100%);letter-spacing:-0.35px;">-80 dBm</div>
<div style="position:absolute;top:279.8px;line-height:16px;height:16px;font-size:10.5px;color:#e8e8e8;font-family:'Liberation Sans',sans-serif;white-space:pre;left:336px;letter-spacing:-0.35px;">-85 dBm</div>
<div style="position:absolute;top:279.8px;line-height:16px;height:16px;font-size:10.5px;color:#e8e8e8;font-family:'Liberation Sans',sans-serif;white-space:pre;left:1876px;transform:translateX(-100%);letter-spacing:-0.35px;">-85 dBm</div>
<div style="position:absolute;top:299.9px;line-height:16px;height:16px;font-size:10.5px;color:#e8e8e8;font-family:'Liberation Sans',sans-serif;white-space:pre;left:336px;letter-spacing:-0.35px;">-90 dBm</div>
<div style="position:absolute;top:299.9px;line-height:16px;height:16px;font-size:10.5px;color:#e8e8e8;font-family:'Liberation Sans',sans-serif;white-space:pre;left:1876px;transform:translateX(-100%);letter-spacing:-0.35px;">-90 dBm</div>
<div style="position:absolute;top:320.0px;line-height:16px;height:16px;font-size:10.5px;color:#e8e8e8;font-family:'Liberation Sans',sans-serif;white-space:pre;left:336px;letter-spacing:-0.35px;">-95 dBm</div>
<div style="position:absolute;top:320.0px;line-height:16px;height:16px;font-size:10.5px;color:#e8e8e8;font-family:'Liberation Sans',sans-serif;white-space:pre;left:1876px;transform:translateX(-100%);letter-spacing:-0.35px;">-95 dBm</div>
<div style="position:absolute;top:340.1px;line-height:16px;height:16px;font-size:10.5px;color:#e8e8e8;font-family:'Liberation Sans',sans-serif;white-space:pre;left:336px;letter-spacing:-0.35px;">-100 dBm</div>
<div style="position:absolute;top:340.1px;line-height:16px;height:16px;font-size:10.5px;color:#e8e8e8;font-family:'Liberation Sans',sans-serif;white-space:pre;left:1876px;transform:translateX(-100%);letter-spacing:-0.35px;">-100 dBm</div>
<div style="position:absolute;top:360.2px;line-height:16px;height:16px;font-size:10.5px;color:#e8e8e8;font-family:'Liberation Sans',sans-serif;white-space:pre;left:336px;letter-spacing:-0.35px;">-105 dBm</div>
<div style="position:absolute;top:360.2px;line-height:16px;height:16px;font-size:10.5px;color:#e8e8e8;font-family:'Liberation Sans',sans-serif;white-space:pre;left:1876px;transform:translateX(-100%);letter-spacing:-0.35px;">-105 dBm</div>
<div style="position:absolute;top:380.3px;line-height:16px;height:16px;font-size:10.5px;color:#e8e8e8;font-family:'Liberation Sans',sans-serif;white-space:pre;left:336px;letter-spacing:-0.35px;">-110 dBm</div>
<div style="position:absolute;top:380.3px;line-height:16px;height:16px;font-size:10.5px;color:#e8e8e8;font-family:'Liberation Sans',sans-serif;white-space:pre;left:1876px;transform:translateX(-100%);letter-spacing:-0.35px;">-110 dBm</div>
<div style="position:absolute;top:400.4px;line-height:16px;height:16px;font-size:10.5px;color:#e8e8e8;font-family:'Liberation Sans',sans-serif;white-space:pre;left:336px;letter-spacing:-0.35px;">-115 dBm</div>
<div style="position:absolute;top:400.4px;line-height:16px;height:16px;font-size:10.5px;color:#e8e8e8;font-family:'Liberation Sans',sans-serif;white-space:pre;left:1876px;transform:translateX(-100%);letter-spacing:-0.35px;">-115 dBm</div>
<div style="position:absolute;top:420.5px;line-height:16px;height:16px;font-size:10.5px;color:#e8e8e8;font-family:'Liberation Sans',sans-serif;white-space:pre;left:336px;letter-spacing:-0.35px;">-120 dBm</div>
<div style="position:absolute;top:420.5px;line-height:16px;height:16px;font-size:10.5px;color:#e8e8e8;font-family:'Liberation Sans',sans-serif;white-space:pre;left:1876px;transform:translateX(-100%);letter-spacing:-0.35px;">-120 dBm</div>
<div style="position:absolute;top:440.6px;line-height:16px;height:16px;font-size:10.5px;color:#e8e8e8;font-family:'Liberation Sans',sans-serif;white-space:pre;left:336px;letter-spacing:-0.35px;">-125 dBm</div>
<div style="position:absolute;top:440.6px;line-height:16px;height:16px;font-size:10.5px;color:#e8e8e8;font-family:'Liberation Sans',sans-serif;white-space:pre;left:1876px;transform:translateX(-100%);letter-spacing:-0.35px;">-125 dBm</div>
<div style="position:absolute;top:460.7px;line-height:16px;height:16px;font-size:10.5px;color:#e8e8e8;font-family:'Liberation Sans',sans-serif;white-space:pre;left:336px;letter-spacing:-0.35px;">-130 dBm</div>
<div style="position:absolute;top:460.7px;line-height:16px;height:16px;font-size:10.5px;color:#e8e8e8;font-family:'Liberation Sans',sans-serif;white-space:pre;left:1876px;transform:translateX(-100%);letter-spacing:-0.35px;">-130 dBm</div>
<div style="position:absolute;top:480.8px;line-height:16px;height:16px;font-size:10.5px;color:#e8e8e8;font-family:'Liberation Sans',sans-serif;white-space:pre;left:336px;letter-spacing:-0.35px;">-135 dBm</div>
<div style="position:absolute;top:480.8px;line-height:16px;height:16px;font-size:10.5px;color:#e8e8e8;font-family:'Liberation Sans',sans-serif;white-space:pre;left:1876px;transform:translateX(-100%);letter-spacing:-0.35px;">-135 dBm</div>
<div style="position:absolute;top:500.9px;line-height:16px;height:16px;font-size:10.5px;color:#e8e8e8;font-family:'Liberation Sans',sans-serif;white-space:pre;left:336px;letter-spacing:-0.35px;">-140 dBm</div>
<div style="position:absolute;top:500.9px;line-height:16px;height:16px;font-size:10.5px;color:#e8e8e8;font-family:'Liberation Sans',sans-serif;white-space:pre;left:1876px;transform:translateX(-100%);letter-spacing:-0.35px;">-140 dBm</div>
<div style="position:absolute;top:530.8px;line-height:16px;height:16px;font-size:10.3px;color:#fff;font-family:'Liberation Sans',sans-serif;white-space:pre;left:389.3px;transform:translateX(-50%);letter-spacing:-0.45px;">431.500</div>
<div style="position:absolute;top:530.8px;line-height:16px;height:16px;font-size:10.3px;color:#fff;font-family:'Liberation Sans',sans-serif;white-space:pre;left:532.5px;transform:translateX(-50%);letter-spacing:-0.45px;">431.600</div>
<div style="position:absolute;top:530.8px;line-height:16px;height:16px;font-size:10.3px;color:#fff;font-family:'Liberation Sans',sans-serif;white-space:pre;left:675.7px;transform:translateX(-50%);letter-spacing:-0.45px;">431.700</div>
<div style="position:absolute;top:530.8px;line-height:16px;height:16px;font-size:10.3px;color:#fff;font-family:'Liberation Sans',sans-serif;white-space:pre;left:818.9px;transform:translateX(-50%);letter-spacing:-0.45px;">431.800</div>
<div style="position:absolute;top:530.8px;line-height:16px;height:16px;font-size:10.3px;color:#fff;font-family:'Liberation Sans',sans-serif;white-space:pre;left:962.0999999999999px;transform:translateX(-50%);letter-spacing:-0.45px;">431.900</div>
<div style="position:absolute;top:530.8px;line-height:16px;height:16px;font-size:10.3px;color:#fff;font-family:'Liberation Sans',sans-serif;white-space:pre;left:1105.3px;transform:translateX(-50%);letter-spacing:-0.45px;">432.000</div>
<div style="position:absolute;top:530.8px;line-height:16px;height:16px;font-size:10.3px;color:#fff;font-family:'Liberation Sans',sans-serif;white-space:pre;left:1248.5px;transform:translateX(-50%);letter-spacing:-0.45px;">432.100</div>
<div style="position:absolute;top:530.8px;line-height:16px;height:16px;font-size:10.3px;color:#fff;font-family:'Liberation Sans',sans-serif;white-space:pre;left:1391.6999999999998px;transform:translateX(-50%);letter-spacing:-0.45px;">432.200</div>
<div style="position:absolute;top:530.8px;line-height:16px;height:16px;font-size:10.3px;color:#fff;font-family:'Liberation Sans',sans-serif;white-space:pre;left:1534.8999999999999px;transform:translateX(-50%);letter-spacing:-0.45px;">432.300</div>
<div style="position:absolute;top:530.8px;line-height:16px;height:16px;font-size:10.3px;color:#fff;font-family:'Liberation Sans',sans-serif;white-space:pre;left:1678.1px;transform:translateX(-50%);letter-spacing:-0.45px;">432.400</div>
<div style="position:absolute;top:530.8px;line-height:16px;height:16px;font-size:10.3px;color:#fff;font-family:'Liberation Sans',sans-serif;white-space:pre;left:1821.3px;transform:translateX(-50%);letter-spacing:-0.45px;">432.500</div>
<div style="position:absolute;left:332px;top:546px;width:1548px;height:6px;background:#f0f0f0;"></div>
<svg style="position:absolute;left:1070px;top:546px;" width="80" height="6"><path d="M5.500 3 H68" stroke="#6a6a6a" stroke-width="2" stroke-dasharray="2 2"/></svg>
<div style="position:absolute;left:1880px;top:146px;width:1.3px;height:578px;background:#d2d2d2;"></div>
<div style="position:absolute;left:332px;top:552px;width:1548px;height:145px;background:linear-gradient(90deg,#0505e8 0%,#0303de 30%,#0202d4 60%,#0202d6 100%);"></div>
<svg style="position:absolute;left:0px;top:0px;" width="1920" height="700"><rect x="333" y="552" width="1" height="145" fill="#0a0af8" opacity="0.22"/><rect x="337" y="552" width="2" height="145" fill="#0000cc" opacity="0.22"/><rect x="340" y="552" width="2" height="145" fill="#0a0af8" opacity="0.22"/><rect x="342" y="552" width="2" height="145" fill="#0000cc" opacity="0.22"/><rect x="345" y="552" width="2" height="145" fill="#0000c8" opacity="0.22"/><rect x="351" y="552" width="2" height="145" fill="#0000c8" opacity="0.22"/><rect x="353" y="552" width="1" height="145" fill="#0000d4" opacity="0.22"/><rect x="356" y="552" width="2" height="145" fill="#0a0af8" opacity="0.22"/><rect x="361" y="552" width="1" height="145" fill="#0808f4" opacity="0.22"/><rect x="362" y="552" width="1" height="145" fill="#0000d4" opacity="0.22"/><rect x="365" y="552" width="1" height="145" fill="#0808f4" opacity="0.22"/><rect x="366" y="552" width="2" height="145" fill="#0a0af8" opacity="0.22"/><rect x="384" y="552" width="2" height="145" fill="#0000c8" opacity="0.22"/><rect x="386" y="552" width="1" height="145" fill="#0000d4" opacity="0.22"/><rect x="387" y="552" width="2" height="145" fill="#0000c8" opacity="0.22"/><rect x="391" y="552" width="1" height="145" fill="#0808f4" opacity="0.22"/><rect x="392" y="552" width="1" height="145" fill="#0a0af8" opacity="0.22"/><rect x="393" y="552" width="1" height="145" fill="#0a0af8" opacity="0.22"/><rect x="395" y="552" width="1" height="145" fill="#0000c8" opacity="0.22"/><rect x="396" y="552" width="1" height="145" fill="#0000c8" opacity="0.22"/><rect x="397" y="552" width="2" height="145" fill="#0000cc" opacity="0.22"/><rect x="399" y="552" width="2" height="145" fill="#0000d0" opacity="0.22"/><rect x="402" y="552" width="1" height="145" fill="#0000cc" opacity="0.22"/><rect x="403" y="552" width="2" height="145" fill="#0a0af8" opacity="0.22"/><rect x="410" y="552" width="2" height="145" fill="#0000d4" opacity="0.22"/><rect x="415" y="552" width="1" height="145" fill="#0000d0" opacity="0.22"/><rect x="416" y="552" width="2" height="145" fill="#0000d0" opacity="0.22"/><rect x="419" y="552" width="2" height="145" fill="#0808f4" opacity="0.22"/><rect x="423" y="552" width="1" height="145" fill="#0000d4" opacity="0.22"/><rect x="424" y="552" width="1" height="145" fill="#0000d4" opacity="0.22"/><rect x="428" y="552" width="3" height="145" fill="#0000d0" opacity="0.22"/><rect x="433" y="552" width="1" height="145" fill="#0000cc" opacity="0.22"/><rect x="435" y="552" width="2" height="145" fill="#0808f4" opacity="0.22"/><rect x="442" y="552" width="1" height="145" fill="#0000d4" opacity="0.22"/><rect x="443" y="552" width="1" height="145" fill="#0000cc" opacity="0.22"/><rect x="444" y="552" width="3" height="145" fill="#0000d4" opacity="0.22"/><rect x="447" y="552" width="1" height="145" fill="#0000d0" opacity="0.22"/><rect x="449" y="552" width="1" height="145" fill="#0000cc" opacity="0.22"/><rect x="450" y="552" width="1" height="145" fill="#0000d4" opacity="0.22"/><rect x="452" y="552" width="2" height="145" fill="#0000c8" opacity="0.22"/><rect x="454" y="552" width="1" height="145" fill="#0000cc" opacity="0.22"/><rect x="456" y="552" width="2" height="145" fill="#0000d0" opacity="0.22"/><rect x="459" y="552" width="3" height="145" fill="#0a0af8" opacity="0.22"/><rect x="463" y="552" width="2" height="145" fill="#0000d0" opacity="0.22"/><rect x="465" y="552" width="2" height="145" fill="#0808f4" opacity="0.22"/><rect x="467" y="552" width="1" height="145" fill="#0808f4" opacity="0.22"/><rect x="469" y="552" width="1" height="145" fill="#0808f4" opacity="0.22"/><rect x="474" y="552" width="3" height="145" fill="#0000d4" opacity="0.22"/><rect x="482" y="552" width="1" height="145" fill="#0000cc" opacity="0.22"/><rect x="484" y="552" width="1" height="145" fill="#0000cc" opacity="0.22"/><rect x="485" y="552" width="1" height="145" fill="#0000d4" opacity="0.22"/><rect x="490" y="552" width="1" height="145" fill="#0000c8" opacity="0.22"/><rect x="491" y="552" width="1" height="145" fill="#0000cc" opacity="0.22"/><rect x="492" y="552" width="3" height="145" fill="#0a0af8" opacity="0.22"/><rect x="495" y="552" width="2" height="145" fill="#0a0af8" opacity="0.22"/><rect x="497" y="552" width="1" height="145" fill="#0000d0" opacity="0.22"/><rect x="498" y="552" width="2" height="145" fill="#0000c8" opacity="0.22"/><rect x="500" y="552" width="1" height="145" fill="#0000c8" opacity="0.22"/><rect x="503" y="552" width="1" height="145" fill="#0000d0" opacity="0.22"/><rect x="505" y="552" width="1" height="145" fill="#0a0af8" opacity="0.22"/><rect x="506" y="552" width="2" height="145" fill="#0000d0" opacity="0.22"/><rect x="508" y="552" width="1" height="145" fill="#0a0af8" opacity="0.22"/><rect x="509" y="552" width="2" height="145" fill="#0808f4" opacity="0.22"/><rect x="513" y="552" width="1" height="145" fill="#0000c8" opacity="0.22"/><rect x="514" y="552" width="1" height="145" fill="#0000c8" opacity="0.22"/><rect x="515" y="552" width="3" height="145" fill="#0a0af8" opacity="0.22"/><rect x="518" y="552" width="2" height="145" fill="#0000d0" opacity="0.22"/><rect x="520" y="552" width="1" height="145" fill="#0000d4" opacity="0.22"/><rect x="523" y="552" width="1" height="145" fill="#0000d0" opacity="0.22"/><rect x="524" y="552" width="2" height="145" fill="#0a0af8" opacity="0.22"/><rect x="529" y="552" width="2" height="145" fill="#0000d0" opacity="0.22"/><rect x="533" y="552" width="2" height="145" fill="#0000c8" opacity="0.22"/><rect x="537" y="552" width="1" height="145" fill="#0808f4" opacity="0.22"/><rect x="538" y="552" width="3" height="145" fill="#0000d4" opacity="0.22"/><rect x="541" y="552" width="2" height="145" fill="#0000cc" opacity="0.22"/><rect x="543" y="552" width="1" height="145" fill="#0000d4" opacity="0.22"/><rect x="544" y="552" width="2" height="145" fill="#0808f4" opacity="0.22"/><rect x="546" y="552" width="1" height="145" fill="#0000c8" opacity="0.22"/><rect x="547" y="552" width="1" height="145" fill="#0a0af8" opacity="0.22"/><rect x="548" y="552" width="1" height="145" fill="#0000d4" opacity="0.22"/><rect x="555" y="552" width="3" height="145" fill="#0000d0" opacity="0.22"/><rect x="558" y="552" width="2" height="145" fill="#0a0af8" opacity="0.22"/><rect x="560" y="552" width="3" height="145" fill="#0000cc" opacity="0.22"/><rect x="564" y="552" width="1" height="145" fill="#0a0af8" opacity="0.22"/><rect x="566" y="552" width="2" height="145" fill="#0000c8" opacity="0.22"/><rect x="569" y="552" width="1" height="145" fill="#0000c8" opacity="0.22"/><rect x="570" y="552" width="3" height="145" fill="#0000d4" opacity="0.22"/><rect x="574" y="552" width="1" height="145" fill="#0a0af8" opacity="0.22"/><rect x="575" y="552" width="2" height="145" fill="#0000cc" opacity="0.22"/><rect x="580" y="552" width="2" height="145" fill="#0000c8" opacity="0.22"/><rect x="583" y="552" width="3" height="145" fill="#0a0af8" opacity="0.22"/><rect x="589" y="552" width="2" height="145" fill="#0a0af8" opacity="0.22"/><rect x="593" y="552" width="2" height="145" fill="#0000c8" opacity="0.22"/><rect x="595" y="552" width="2" height="145" fill="#0808f4" opacity="0.22"/><rect x="607" y="552" width="1" height="145" fill="#0808f4" opacity="0.22"/><rect x="608" y="552" width="3" height="145" fill="#0000d4" opacity="0.22"/><rect x="615" y="552" width="1" height="145" fill="#0000cc" opacity="0.22"/><rect x="618" y="552" width="3" height="145" fill="#0000d0" opacity="0.22"/><rect x="629" y="552" width="1" height="145" fill="#0808f4" opacity="0.22"/><rect x="630" y="552" width="2" height="145" fill="#0a0af8" opacity="0.22"/><rect x="632" y="552" width="1" height="145" fill="#0808f4" opacity="0.22"/><rect x="633" y="552" width="1" height="145" fill="#0000d4" opacity="0.22"/><rect x="636" y="552" width="1" height="145" fill="#0000d4" opacity="0.22"/><rect x="637" y="552" width="2" height="145" fill="#0000d4" opacity="0.22"/><rect x="642" y="552" width="1" height="145" fill="#0000cc" opacity="0.22"/><rect x="644" y="552" width="3" height="145" fill="#0000cc" opacity="0.22"/><rect x="647" y="552" width="1" height="145" fill="#0000cc" opacity="0.22"/><rect x="648" y="552" width="1" height="145" fill="#0a0af8" opacity="0.22"/><rect x="653" y="552" width="1" height="145" fill="#0000c8" opacity="0.22"/><rect x="654" y="552" width="1" height="145" fill="#0000c8" opacity="0.22"/><rect x="658" y="552" width="1" height="145" fill="#0000d0" opacity="0.22"/><rect x="659" y="552" width="1" height="145" fill="#0a0af8" opacity="0.22"/><rect x="663" y="552" width="1" height="145" fill="#0000d0" opacity="0.22"/><rect x="664" y="552" width="2" height="145" fill="#0000c8" opacity="0.22"/><rect x="670" y="552" width="2" height="145" fill="#0000d0" opacity="0.22"/><rect x="674" y="552" width="1" height="145" fill="#0a0af8" opacity="0.22"/><rect x="675" y="552" width="1" height="145" fill="#0000d4" opacity="0.22"/><rect x="682" y="552" width="1" height="145" fill="#0000d0" opacity="0.22"/><rect x="686" y="552" width="2" height="145" fill="#0808f4" opacity="0.22"/><rect x="688" y="552" width="2" height="145" fill="#0000d4" opacity="0.22"/><rect x="696" y="552" width="3" height="145" fill="#0000d0" opacity="0.22"/><rect x="699" y="552" width="3" height="145" fill="#0000c8" opacity="0.22"/><rect x="702" y="552" width="2" height="145" fill="#0000d0" opacity="0.22"/><rect x="707" y="552" width="2" height="145" fill="#0000d0" opacity="0.22"/><rect x="709" y="552" width="3" height="145" fill="#0808f4" opacity="0.22"/><rect x="713" y="552" width="3" height="145" fill="#0000d4" opacity="0.22"/><rect x="719" y="552" width="2" height="145" fill="#0000d0" opacity="0.22"/><rect x="721" y="552" width="1" height="145" fill="#0000cc" opacity="0.22"/><rect x="722" y="552" width="1" height="145" fill="#0000d0" opacity="0.22"/><rect x="724" y="552" width="2" height="145" fill="#0000d0" opacity="0.22"/><rect x="726" y="552" width="2" height="145" fill="#0000c8" opacity="0.22"/><rect x="728" y="552" width="1" height="145" fill="#0000c8" opacity="0.22"/><rect x="729" y="552" width="1" height="145" fill="#0000c8" opacity="0.22"/><rect x="730" y="552" width="3" height="145" fill="#0000d4" opacity="0.22"/><rect x="733" y="552" width="1" height="145" fill="#0000cc" opacity="0.22"/><rect x="734" y="552" width="2" height="145" fill="#0000d4" opacity="0.22"/><rect x="738" y="552" width="3" height="145" fill="#0a0af8" opacity="0.22"/><rect x="742" y="552" width="1" height="145" fill="#0000cc" opacity="0.22"/><rect x="743" y="552" width="2" height="145" fill="#0000d0" opacity="0.22"/><rect x="749" y="552" width="2" height="145" fill="#0a0af8" opacity="0.22"/><rect x="755" y="552" width="3" height="145" fill="#0a0af8" opacity="0.22"/><rect x="759" y="552" width="1" height="145" fill="#0000d4" opacity="0.22"/><rect x="760" y="552" width="1" height="145" fill="#0a0af8" opacity="0.22"/><rect x="761" y="552" width="3" height="145" fill="#0000cc" opacity="0.22"/><rect x="764" y="552" width="2" height="145" fill="#0a0af8" opacity="0.22"/><rect x="773" y="552" width="1" height="145" fill="#0000c8" opacity="0.22"/><rect x="776" y="552" width="1" height="145" fill="#0000cc" opacity="0.22"/><rect x="777" y="552" width="2" height="145" fill="#0a0af8" opacity="0.22"/><rect x="780" y="552" width="1" height="145" fill="#0000d0" opacity="0.22"/><rect x="792" y="552" width="1" height="145" fill="#0000cc" opacity="0.22"/><rect x="793" y="552" width="2" height="145" fill="#0000c8" opacity="0.22"/><rect x="795" y="552" width="2" height="145" fill="#0000cc" opacity="0.22"/><rect x="797" y="552" width="3" height="145" fill="#0808f4" opacity="0.22"/><rect x="805" y="552" width="1" height="145" fill="#0808f4" opacity="0.22"/><rect x="806" y="552" width="3" height="145" fill="#0000cc" opacity="0.22"/><rect x="811" y="552" width="3" height="145" fill="#0000d0" opacity="0.22"/><rect x="814" y="552" width="2" height="145" fill="#0a0af8" opacity="0.22"/><rect x="816" y="552" width="2" height="145" fill="#0000c8" opacity="0.22"/><rect x="818" y="552" width="1" height="145" fill="#0000d0" opacity="0.22"/><rect x="820" y="552" width="2" height="145" fill="#0000cc" opacity="0.22"/><rect x="822" y="552" width="1" height="145" fill="#0808f4" opacity="0.22"/><rect x="823" y="552" width="2" height="145" fill="#0000c8" opacity="0.22"/><rect x="825" y="552" width="1" height="145" fill="#0000cc" opacity="0.22"/><rect x="826" y="552" width="2" height="145" fill="#0000c8" opacity="0.22"/><rect x="828" y="552" width="1" height="145" fill="#0000d0" opacity="0.22"/><rect x="829" y="552" width="2" height="145" fill="#0000d4" opacity="0.22"/><rect x="831" y="552" width="1" height="145" fill="#0000c8" opacity="0.22"/><rect x="832" y="552" width="2" height="145" fill="#0000cc" opacity="0.22"/><rect x="834" y="552" width="1" height="145" fill="#0808f4" opacity="0.22"/><rect x="835" y="552" width="1" height="145" fill="#0a0af8" opacity="0.22"/><rect x="836" y="552" width="1" height="145" fill="#0000c8" opacity="0.22"/><rect x="837" y="552" width="2" height="145" fill="#0000d4" opacity="0.22"/><rect x="839" y="552" width="1" height="145" fill="#0808f4" opacity="0.22"/><rect x="840" y="552" width="1" height="145" fill="#0a0af8" opacity="0.22"/><rect x="841" y="552" width="1" height="145" fill="#0000d0" opacity="0.22"/><rect x="845" y="552" width="1" height="145" fill="#0000d4" opacity="0.22"/><rect x="850" y="552" width="1" height="145" fill="#0000c8" opacity="0.22"/><rect x="851" y="552" width="1" height="145" fill="#0000c8" opacity="0.22"/><rect x="852" y="552" width="2" height="145" fill="#0000d4" opacity="0.22"/><rect x="857" y="552" width="2" height="145" fill="#0808f4" opacity="0.22"/><rect x="860" y="552" width="1" height="145" fill="#0a0af8" opacity="0.22"/><rect x="866" y="552" width="1" height="145" fill="#0a0af8" opacity="0.22"/><rect x="867" y="552" width="1" height="145" fill="#0808f4" opacity="0.22"/><rect x="869" y="552" width="3" height="145" fill="#0a0af8" opacity="0.22"/><rect x="874" y="552" width="2" height="145" fill="#0000d4" opacity="0.22"/><rect x="876" y="552" width="2" height="145" fill="#0000cc" opacity="0.22"/><rect x="882" y="552" width="3" height="145" fill="#0808f4" opacity="0.22"/><rect x="885" y="552" width="1" height="145" fill="#0000d4" opacity="0.22"/><rect x="891" y="552" width="1" height="145" fill="#0000d4" opacity="0.22"/><rect x="893" y="552" width="1" height="145" fill="#0000d4" opacity="0.22"/><rect x="894" y="552" width="3" height="145" fill="#0000d0" opacity="0.22"/><rect x="897" y="552" width="1" height="145" fill="#0808f4" opacity="0.22"/><rect x="898" y="552" width="1" height="145" fill="#0000d0" opacity="0.22"/><rect x="899" y="552" width="1" height="145" fill="#0000d4" opacity="0.22"/><rect x="900" y="552" width="1" height="145" fill="#0000c8" opacity="0.22"/><rect x="903" y="552" width="1" height="145" fill="#0000d0" opacity="0.22"/><rect x="904" y="552" width="1" height="145" fill="#0a0af8" opacity="0.22"/><rect x="905" y="552" width="2" height="145" fill="#0a0af8" opacity="0.22"/><rect x="910" y="552" width="2" height="145" fill="#0000c8" opacity="0.22"/><rect x="914" y="552" width="1" height="145" fill="#0000d0" opacity="0.22"/><rect x="915" y="552" width="1" height="145" fill="#0808f4" opacity="0.22"/><rect x="920" y="552" width="3" height="145" fill="#0000d4" opacity="0.22"/><rect x="923" y="552" width="3" height="145" fill="#0a0af8" opacity="0.22"/><rect x="926" y="552" width="3" height="145" fill="#0000c8" opacity="0.22"/><rect x="930" y="552" width="2" height="145" fill="#0808f4" opacity="0.22"/><rect x="932" y="552" width="1" height="145" fill="#0000c8" opacity="0.22"/><rect x="933" y="552" width="2" height="145" fill="#0000d4" opacity="0.22"/><rect x="935" y="552" width="1" height="145" fill="#0000cc" opacity="0.22"/><rect x="940" y="552" width="1" height="145" fill="#0000d4" opacity="0.22"/><rect x="942" y="552" width="1" height="145" fill="#0000c8" opacity="0.22"/><rect x="943" y="552" width="1" height="145" fill="#0808f4" opacity="0.22"/><rect x="944" y="552" width="1" height="145" fill="#0000d0" opacity="0.22"/><rect x="950" y="552" width="3" height="145" fill="#0808f4" opacity="0.22"/><rect x="958" y="552" width="2" height="145" fill="#0a0af8" opacity="0.22"/><rect x="960" y="552" width="1" height="145" fill="#0000c8" opacity="0.22"/><rect x="963" y="552" width="1" height="145" fill="#0000c8" opacity="0.22"/><rect x="964" y="552" width="3" height="145" fill="#0000cc" opacity="0.22"/><rect x="967" y="552" width="3" height="145" fill="#0808f4" opacity="0.22"/><rect x="970" y="552" width="2" height="145" fill="#0808f4" opacity="0.22"/><rect x="972" y="552" width="3" height="145" fill="#0000d0" opacity="0.22"/><rect x="975" y="552" width="1" height="145" fill="#0000d0" opacity="0.22"/><rect x="976" y="552" width="2" height="145" fill="#0000cc" opacity="0.22"/><rect x="978" y="552" width="1" height="145" fill="#0000d4" opacity="0.22"/><rect x="980" y="552" width="3" height="145" fill="#0000cc" opacity="0.22"/><rect x="983" y="552" width="2" height="145" fill="#0808f4" opacity="0.22"/><rect x="985" y="552" width="2" height="145" fill="#0a0af8" opacity="0.22"/><rect x="987" y="552" width="1" height="145" fill="#0000d0" opacity="0.22"/><rect x="988" y="552" width="1" height="145" fill="#0000d0" opacity="0.22"/><rect x="991" y="552" width="2" height="145" fill="#0000cc" opacity="0.22"/><rect x="993" y="552" width="3" height="145" fill="#0a0af8" opacity="0.22"/><rect x="996" y="552" width="1" height="145" fill="#0000c8" opacity="0.22"/><rect x="997" y="552" width="1" height="145" fill="#0808f4" opacity="0.22"/><rect x="1000" y="552" width="1" height="145" fill="#0000cc" opacity="0.22"/><rect x="1001" y="552" width="1" height="145" fill="#0000d0" opacity="0.22"/><rect x="1003" y="552" width="1" height="145" fill="#0000d0" opacity="0.22"/><rect x="1005" y="552" width="2" height="145" fill="#0000d0" opacity="0.22"/><rect x="1007" y="552" width="1" height="145" fill="#0808f4" opacity="0.22"/><rect x="1009" y="552" width="3" height="145" fill="#0a0af8" opacity="0.22"/><rect x="1016" y="552" width="2" height="145" fill="#0000d0" opacity="0.22"/><rect x="1018" y="552" width="2" height="145" fill="#0000c8" opacity="0.22"/><rect x="1020" y="552" width="1" height="145" fill="#0808f4" opacity="0.22"/><rect x="1021" y="552" width="3" height="145" fill="#0808f4" opacity="0.22"/><rect x="1024" y="552" width="2" height="145" fill="#0a0af8" opacity="0.22"/><rect x="1026" y="552" width="2" height="145" fill="#0a0af8" opacity="0.22"/><rect x="1028" y="552" width="3" height="145" fill="#0000cc" opacity="0.22"/><rect x="1032" y="552" width="2" height="145" fill="#0000d0" opacity="0.22"/><rect x="1034" y="552" width="2" height="145" fill="#0000d0" opacity="0.22"/><rect x="1036" y="552" width="2" height="145" fill="#0a0af8" opacity="0.22"/><rect x="1039" y="552" width="1" height="145" fill="#0808f4" opacity="0.22"/><rect x="1044" y="552" width="2" height="145" fill="#0000d0" opacity="0.22"/><rect x="1048" y="552" width="1" height="145" fill="#0000d0" opacity="0.22"/><rect x="1052" y="552" width="1" height="145" fill="#0000d4" opacity="0.22"/><rect x="1053" y="552" width="1" height="145" fill="#0a0af8" opacity="0.22"/><rect x="1056" y="552" width="3" height="145" fill="#0000d0" opacity="0.22"/><rect x="1059" y="552" width="1" height="145" fill="#0808f4" opacity="0.22"/><rect x="1060" y="552" width="2" height="145" fill="#0000d0" opacity="0.22"/><rect x="1063" y="552" width="1" height="145" fill="#0808f4" opacity="0.22"/><rect x="1064" y="552" width="2" height="145" fill="#0000cc" opacity="0.22"/><rect x="1066" y="552" width="2" height="145" fill="#0000c8" opacity="0.22"/><rect x="1068" y="552" width="2" height="145" fill="#0000cc" opacity="0.22"/><rect x="1070" y="552" width="3" height="145" fill="#0a0af8" opacity="0.22"/><rect x="1076" y="552" width="3" height="145" fill="#0000d0" opacity="0.22"/><rect x="1079" y="552" width="2" height="145" fill="#0000d0" opacity="0.22"/><rect x="1083" y="552" width="1" height="145" fill="#0000cc" opacity="0.22"/><rect x="1084" y="552" width="1" height="145" fill="#0000d4" opacity="0.22"/><rect x="1088" y="552" width="3" height="145" fill="#0808f4" opacity="0.22"/><rect x="1091" y="552" width="1" height="145" fill="#0000d4" opacity="0.22"/><rect x="1092" y="552" width="1" height="145" fill="#0000d4" opacity="0.22"/><rect x="1094" y="552" width="1" height="145" fill="#0000cc" opacity="0.22"/><rect x="1095" y="552" width="2" height="145" fill="#0000c8" opacity="0.22"/><rect x="1097" y="552" width="2" height="145" fill="#0000c8" opacity="0.22"/><rect x="1099" y="552" width="1" height="145" fill="#0000c8" opacity="0.22"/><rect x="1100" y="552" width="1" height="145" fill="#0808f4" opacity="0.22"/><rect x="1102" y="552" width="2" height="145" fill="#0000cc" opacity="0.22"/><rect x="1106" y="552" width="1" height="145" fill="#0a0af8" opacity="0.22"/><rect x="1107" y="552" width="2" height="145" fill="#0000d0" opacity="0.22"/><rect x="1109" y="552" width="2" height="145" fill="#0000d0" opacity="0.22"/><rect x="1115" y="552" width="2" height="145" fill="#0000d0" opacity="0.22"/><rect x="1117" y="552" width="2" height="145" fill="#0808f4" opacity="0.22"/><rect x="1119" y="552" width="2" height="145" fill="#0a0af8" opacity="0.22"/><rect x="1122" y="552" width="3" height="145" fill="#0000cc" opacity="0.22"/><rect x="1125" y="552" width="1" height="145" fill="#0000cc" opacity="0.22"/><rect x="1126" y="552" width="1" height="145" fill="#0000c8" opacity="0.22"/><rect x="1129" y="552" width="1" height="145" fill="#0000c8" opacity="0.22"/><rect x="1133" y="552" width="3" height="145" fill="#0000d4" opacity="0.22"/><rect x="1136" y="552" width="1" height="145" fill="#0a0af8" opacity="0.22"/><rect x="1137" y="552" width="2" height="145" fill="#0000cc" opacity="0.22"/><rect x="1141" y="552" width="1" height="145" fill="#0a0af8" opacity="0.22"/><rect x="1143" y="552" width="2" height="145" fill="#0a0af8" opacity="0.22"/><rect x="1152" y="552" width="1" height="145" fill="#0000c8" opacity="0.22"/><rect x="1153" y="552" width="2" height="145" fill="#0000d4" opacity="0.22"/><rect x="1156" y="552" width="1" height="145" fill="#0000d0" opacity="0.22"/><rect x="1157" y="552" width="2" height="145" fill="#0000d0" opacity="0.22"/><rect x="1162" y="552" width="2" height="145" fill="#0a0af8" opacity="0.22"/><rect x="1164" y="552" width="1" height="145" fill="#0808f4" opacity="0.22"/><rect x="1167" y="552" width="1" height="145" fill="#0808f4" opacity="0.22"/><rect x="1168" y="552" width="2" height="145" fill="#0000c8" opacity="0.22"/><rect x="1170" y="552" width="1" height="145" fill="#0000c8" opacity="0.22"/><rect x="1171" y="552" width="2" height="145" fill="#0000c8" opacity="0.22"/><rect x="1177" y="552" width="1" height="145" fill="#0000d0" opacity="0.22"/><rect x="1178" y="552" width="2" height="145" fill="#0808f4" opacity="0.22"/><rect x="1184" y="552" width="2" height="145" fill="#0000d0" opacity="0.22"/><rect x="1186" y="552" width="1" height="145" fill="#0000c8" opacity="0.22"/><rect x="1187" y="552" width="2" height="145" fill="#0000c8" opacity="0.22"/><rect x="1189" y="552" width="1" height="145" fill="#0000d0" opacity="0.22"/><rect x="1190" y="552" width="1" height="145" fill="#0a0af8" opacity="0.22"/><rect x="1194" y="552" width="2" height="145" fill="#0000d0" opacity="0.22"/><rect x="1199" y="552" width="1" height="145" fill="#0000d4" opacity="0.22"/><rect x="1200" y="552" width="2" height="145" fill="#0808f4" opacity="0.22"/><rect x="1202" y="552" width="1" height="145" fill="#0000d0" opacity="0.22"/><rect x="1207" y="552" width="2" height="145" fill="#0000d0" opacity="0.22"/><rect x="1209" y="552" width="2" height="145" fill="#0000cc" opacity="0.22"/><rect x="1211" y="552" width="2" height="145" fill="#0808f4" opacity="0.22"/><rect x="1213" y="552" width="1" height="145" fill="#0808f4" opacity="0.22"/><rect x="1216" y="552" width="3" height="145" fill="#0000d0" opacity="0.22"/><rect x="1223" y="552" width="1" height="145" fill="#0000d4" opacity="0.22"/><rect x="1224" y="552" width="1" height="145" fill="#0000c8" opacity="0.22"/><rect x="1225" y="552" width="1" height="145" fill="#0808f4" opacity="0.22"/><rect x="1229" y="552" width="3" height="145" fill="#0808f4" opacity="0.22"/><rect x="1232" y="552" width="2" height="145" fill="#0000d0" opacity="0.22"/><rect x="1235" y="552" width="1" height="145" fill="#0a0af8" opacity="0.22"/><rect x="1237" y="552" width="2" height="145" fill="#0a0af8" opacity="0.22"/><rect x="1239" y="552" width="1" height="145" fill="#0808f4" opacity="0.22"/><rect x="1240" y="552" width="2" height="145" fill="#0000d0" opacity="0.22"/><rect x="1244" y="552" width="2" height="145" fill="#0a0af8" opacity="0.22"/><rect x="1246" y="552" width="1" height="145" fill="#0a0af8" opacity="0.22"/><rect x="1249" y="552" width="1" height="145" fill="#0a0af8" opacity="0.22"/><rect x="1253" y="552" width="1" height="145" fill="#0000d4" opacity="0.22"/><rect x="1256" y="552" width="3" height="145" fill="#0000cc" opacity="0.22"/><rect x="1260" y="552" width="2" height="145" fill="#0a0af8" opacity="0.22"/><rect x="1264" y="552" width="1" height="145" fill="#0000c8" opacity="0.22"/><rect x="1265" y="552" width="1" height="145" fill="#0808f4" opacity="0.22"/><rect x="1269" y="552" width="1" height="145" fill="#0000d0" opacity="0.22"/><rect x="1270" y="552" width="2" height="145" fill="#0000d0" opacity="0.22"/><rect x="1272" y="552" width="1" height="145" fill="#0000c8" opacity="0.22"/><rect x="1276" y="552" width="3" height="145" fill="#0000cc" opacity="0.22"/><rect x="1279" y="552" width="1" height="145" fill="#0a0af8" opacity="0.22"/><rect x="1280" y="552" width="1" height="145" fill="#0000d4" opacity="0.22"/><rect x="1281" y="552" width="1" height="145" fill="#0000d4" opacity="0.22"/><rect x="1284" y="552" width="2" height="145" fill="#0a0af8" opacity="0.22"/><rect x="1288" y="552" width="3" height="145" fill="#0000d0" opacity="0.22"/><rect x="1291" y="552" width="1" height="145" fill="#0a0af8" opacity="0.22"/><rect x="1292" y="552" width="2" height="145" fill="#0a0af8" opacity="0.22"/><rect x="1294" y="552" width="1" height="145" fill="#0808f4" opacity="0.22"/><rect x="1295" y="552" width="3" height="145" fill="#0808f4" opacity="0.22"/><rect x="1300" y="552" width="1" height="145" fill="#0a0af8" opacity="0.22"/><rect x="1306" y="552" width="1" height="145" fill="#0000cc" opacity="0.22"/><rect x="1307" y="552" width="1" height="145" fill="#0a0af8" opacity="0.22"/><rect x="1309" y="552" width="2" height="145" fill="#0000c8" opacity="0.22"/><rect x="1311" y="552" width="2" height="145" fill="#0000d4" opacity="0.22"/><rect x="1321" y="552" width="1" height="145" fill="#0808f4" opacity="0.22"/><rect x="1325" y="552" width="1" height="145" fill="#0a0af8" opacity="0.22"/><rect x="1329" y="552" width="2" height="145" fill="#0a0af8" opacity="0.22"/><rect x="1331" y="552" width="1" height="145" fill="#0000d4" opacity="0.22"/><rect x="1337" y="552" width="2" height="145" fill="#0808f4" opacity="0.22"/><rect x="1339" y="552" width="2" height="145" fill="#0808f4" opacity="0.22"/><rect x="1344" y="552" width="2" height="145" fill="#0000cc" opacity="0.22"/><rect x="1346" y="552" width="1" height="145" fill="#0000cc" opacity="0.22"/><rect x="1347" y="552" width="1" height="145" fill="#0a0af8" opacity="0.22"/><rect x="1349" y="552" width="2" height="145" fill="#0808f4" opacity="0.22"/><rect x="1351" y="552" width="1" height="145" fill="#0000d0" opacity="0.22"/><rect x="1352" y="552" width="3" height="145" fill="#0000d0" opacity="0.22"/><rect x="1355" y="552" width="1" height="145" fill="#0000c8" opacity="0.22"/><rect x="1356" y="552" width="2" height="145" fill="#0000cc" opacity="0.22"/><rect x="1358" y="552" width="1" height="145" fill="#0000d4" opacity="0.22"/><rect x="1359" y="552" width="1" height="145" fill="#0a0af8" opacity="0.22"/><rect x="1363" y="552" width="1" height="145" fill="#0000d4" opacity="0.22"/><rect x="1368" y="552" width="1" height="145" fill="#0000d4" opacity="0.22"/><rect x="1369" y="552" width="2" height="145" fill="#0a0af8" opacity="0.22"/><rect x="1371" y="552" width="1" height="145" fill="#0808f4" opacity="0.22"/><rect x="1372" y="552" width="3" height="145" fill="#0a0af8" opacity="0.22"/><rect x="1378" y="552" width="2" height="145" fill="#0a0af8" opacity="0.22"/><rect x="1381" y="552" width="2" height="145" fill="#0000c8" opacity="0.22"/><rect x="1383" y="552" width="1" height="145" fill="#0000c8" opacity="0.22"/><rect x="1385" y="552" width="1" height="145" fill="#0000cc" opacity="0.22"/><rect x="1389" y="552" width="1" height="145" fill="#0000d4" opacity="0.22"/><rect x="1392" y="552" width="1" height="145" fill="#0000cc" opacity="0.22"/><rect x="1394" y="552" width="3" height="145" fill="#0808f4" opacity="0.22"/><rect x="1397" y="552" width="3" height="145" fill="#0000c8" opacity="0.22"/><rect x="1400" y="552" width="2" height="145" fill="#0a0af8" opacity="0.22"/><rect x="1402" y="552" width="3" height="145" fill="#0000cc" opacity="0.22"/><rect x="1406" y="552" width="3" height="145" fill="#0000c8" opacity="0.22"/><rect x="1409" y="552" width="3" height="145" fill="#0a0af8" opacity="0.22"/><rect x="1416" y="552" width="2" height="145" fill="#0000cc" opacity="0.22"/><rect x="1421" y="552" width="1" height="145" fill="#0000d4" opacity="0.22"/><rect x="1422" y="552" width="2" height="145" fill="#0000c8" opacity="0.22"/><rect x="1424" y="552" width="1" height="145" fill="#0000d0" opacity="0.22"/><rect x="1425" y="552" width="1" height="145" fill="#0000cc" opacity="0.22"/><rect x="1426" y="552" width="2" height="145" fill="#0a0af8" opacity="0.22"/><rect x="1430" y="552" width="3" height="145" fill="#0000cc" opacity="0.22"/><rect x="1433" y="552" width="2" height="145" fill="#0000c8" opacity="0.22"/><rect x="1435" y="552" width="1" height="145" fill="#0000cc" opacity="0.22"/><rect x="1436" y="552" width="2" height="145" fill="#0808f4" opacity="0.22"/><rect x="1439" y="552" width="1" height="145" fill="#0a0af8" opacity="0.22"/><rect x="1440" y="552" width="1" height="145" fill="#0000c8" opacity="0.22"/><rect x="1441" y="552" width="2" height="145" fill="#0000d0" opacity="0.22"/><rect x="1443" y="552" width="1" height="145" fill="#0a0af8" opacity="0.22"/><rect x="1444" y="552" width="2" height="145" fill="#0a0af8" opacity="0.22"/><rect x="1448" y="552" width="3" height="145" fill="#0a0af8" opacity="0.22"/><rect x="1453" y="552" width="1" height="145" fill="#0808f4" opacity="0.22"/><rect x="1454" y="552" width="2" height="145" fill="#0000d0" opacity="0.22"/><rect x="1458" y="552" width="1" height="145" fill="#0000cc" opacity="0.22"/><rect x="1460" y="552" width="1" height="145" fill="#0a0af8" opacity="0.22"/><rect x="1461" y="552" width="1" height="145" fill="#0808f4" opacity="0.22"/><rect x="1462" y="552" width="1" height="145" fill="#0000cc" opacity="0.22"/><rect x="1466" y="552" width="2" height="145" fill="#0000c8" opacity="0.22"/><rect x="1473" y="552" width="1" height="145" fill="#0000d0" opacity="0.22"/><rect x="1475" y="552" width="2" height="145" fill="#0000d0" opacity="0.22"/><rect x="1477" y="552" width="1" height="145" fill="#0a0af8" opacity="0.22"/><rect x="1478" y="552" width="1" height="145" fill="#0000d4" opacity="0.22"/><rect x="1479" y="552" width="1" height="145" fill="#0000d4" opacity="0.22"/><rect x="1480" y="552" width="1" height="145" fill="#0000cc" opacity="0.22"/><rect x="1481" y="552" width="3" height="145" fill="#0000d4" opacity="0.22"/><rect x="1484" y="552" width="3" height="145" fill="#0000d4" opacity="0.22"/><rect x="1487" y="552" width="1" height="145" fill="#0000d4" opacity="0.22"/><rect x="1488" y="552" width="1" height="145" fill="#0a0af8" opacity="0.22"/><rect x="1489" y="552" width="1" height="145" fill="#0000d0" opacity="0.22"/><rect x="1490" y="552" width="3" height="145" fill="#0000c8" opacity="0.22"/><rect x="1496" y="552" width="2" height="145" fill="#0000d0" opacity="0.22"/><rect x="1500" y="552" width="1" height="145" fill="#0000d4" opacity="0.22"/><rect x="1501" y="552" width="3" height="145" fill="#0808f4" opacity="0.22"/><rect x="1504" y="552" width="3" height="145" fill="#0000d0" opacity="0.22"/><rect x="1508" y="552" width="3" height="145" fill="#0808f4" opacity="0.22"/><rect x="1513" y="552" width="3" height="145" fill="#0000c8" opacity="0.22"/><rect x="1516" y="552" width="3" height="145" fill="#0a0af8" opacity="0.22"/><rect x="1520" y="552" width="1" height="145" fill="#0000d0" opacity="0.22"/><rect x="1522" y="552" width="2" height="145" fill="#0808f4" opacity="0.22"/><rect x="1526" y="552" width="1" height="145" fill="#0000c8" opacity="0.22"/><rect x="1528" y="552" width="2" height="145" fill="#0000d4" opacity="0.22"/><rect x="1530" y="552" width="2" height="145" fill="#0000cc" opacity="0.22"/><rect x="1532" y="552" width="1" height="145" fill="#0000cc" opacity="0.22"/><rect x="1533" y="552" width="2" height="145" fill="#0808f4" opacity="0.22"/><rect x="1540" y="552" width="2" height="145" fill="#0a0af8" opacity="0.22"/><rect x="1544" y="552" width="2" height="145" fill="#0808f4" opacity="0.22"/><rect x="1547" y="552" width="3" height="145" fill="#0000c8" opacity="0.22"/><rect x="1554" y="552" width="3" height="145" fill="#0000cc" opacity="0.22"/><rect x="1559" y="552" width="1" height="145" fill="#0a0af8" opacity="0.22"/><rect x="1561" y="552" width="1" height="145" fill="#0000cc" opacity="0.22"/><rect x="1562" y="552" width="2" height="145" fill="#0000cc" opacity="0.22"/><rect x="1564" y="552" width="1" height="145" fill="#0000d4" opacity="0.22"/><rect x="1565" y="552" width="2" height="145" fill="#0000d4" opacity="0.22"/><rect x="1567" y="552" width="2" height="145" fill="#0000c8" opacity="0.22"/><rect x="1569" y="552" width="1" height="145" fill="#0a0af8" opacity="0.22"/><rect x="1570" y="552" width="1" height="145" fill="#0808f4" opacity="0.22"/><rect x="1572" y="552" width="1" height="145" fill="#0000cc" opacity="0.22"/><rect x="1573" y="552" width="2" height="145" fill="#0000cc" opacity="0.22"/><rect x="1575" y="552" width="1" height="145" fill="#0000c8" opacity="0.22"/><rect x="1579" y="552" width="2" height="145" fill="#0000d4" opacity="0.22"/><rect x="1585" y="552" width="1" height="145" fill="#0000cc" opacity="0.22"/><rect x="1590" y="552" width="2" height="145" fill="#0000c8" opacity="0.22"/><rect x="1595" y="552" width="2" height="145" fill="#0000cc" opacity="0.22"/><rect x="1597" y="552" width="1" height="145" fill="#0000c8" opacity="0.22"/><rect x="1598" y="552" width="1" height="145" fill="#0808f4" opacity="0.22"/><rect x="1599" y="552" width="3" height="145" fill="#0000d4" opacity="0.22"/><rect x="1602" y="552" width="2" height="145" fill="#0000d4" opacity="0.22"/><rect x="1605" y="552" width="1" height="145" fill="#0000d0" opacity="0.22"/><rect x="1607" y="552" width="1" height="145" fill="#0000c8" opacity="0.22"/><rect x="1609" y="552" width="1" height="145" fill="#0000d0" opacity="0.22"/><rect x="1610" y="552" width="2" height="145" fill="#0808f4" opacity="0.22"/><rect x="1616" y="552" width="1" height="145" fill="#0000c8" opacity="0.22"/><rect x="1617" y="552" width="1" height="145" fill="#0808f4" opacity="0.22"/><rect x="1618" y="552" width="1" height="145" fill="#0a0af8" opacity="0.22"/><rect x="1620" y="552" width="2" height="145" fill="#0000d4" opacity="0.22"/><rect x="1623" y="552" width="2" height="145" fill="#0a0af8" opacity="0.22"/><rect x="1625" y="552" width="2" height="145" fill="#0000c8" opacity="0.22"/><rect x="1627" y="552" width="2" height="145" fill="#0000d0" opacity="0.22"/><rect x="1629" y="552" width="1" height="145" fill="#0a0af8" opacity="0.22"/><rect x="1631" y="552" width="1" height="145" fill="#0000d0" opacity="0.22"/><rect x="1632" y="552" width="1" height="145" fill="#0a0af8" opacity="0.22"/><rect x="1635" y="552" width="2" height="145" fill="#0808f4" opacity="0.22"/><rect x="1637" y="552" width="1" height="145" fill="#0a0af8" opacity="0.22"/><rect x="1638" y="552" width="2" height="145" fill="#0808f4" opacity="0.22"/><rect x="1641" y="552" width="3" height="145" fill="#0000d4" opacity="0.22"/><rect x="1649" y="552" width="1" height="145" fill="#0000d0" opacity="0.22"/><rect x="1652" y="552" width="1" height="145" fill="#0000d4" opacity="0.22"/><rect x="1653" y="552" width="1" height="145" fill="#0808f4" opacity="0.22"/><rect x="1666" y="552" width="2" height="145" fill="#0000d0" opacity="0.22"/><rect x="1668" y="552" width="2" height="145" fill="#0808f4" opacity="0.22"/><rect x="1670" y="552" width="3" height="145" fill="#0a0af8" opacity="0.22"/><rect x="1677" y="552" width="1" height="145" fill="#0000cc" opacity="0.22"/><rect x="1682" y="552" width="1" height="145" fill="#0000d4" opacity="0.22"/><rect x="1683" y="552" width="2" height="145" fill="#0000d0" opacity="0.22"/><rect x="1686" y="552" width="1" height="145" fill="#0000c8" opacity="0.22"/><rect x="1688" y="552" width="3" height="145" fill="#0808f4" opacity="0.22"/><rect x="1693" y="552" width="2" height="145" fill="#0000cc" opacity="0.22"/><rect x="1697" y="552" width="1" height="145" fill="#0000c8" opacity="0.22"/><rect x="1703" y="552" width="2" height="145" fill="#0808f4" opacity="0.22"/><rect x="1705" y="552" width="2" height="145" fill="#0808f4" opacity="0.22"/><rect x="1707" y="552" width="3" height="145" fill="#0000d0" opacity="0.22"/><rect x="1712" y="552" width="2" height="145" fill="#0000cc" opacity="0.22"/><rect x="1715" y="552" width="3" height="145" fill="#0a0af8" opacity="0.22"/><rect x="1718" y="552" width="2" height="145" fill="#0000cc" opacity="0.22"/><rect x="1721" y="552" width="1" height="145" fill="#0a0af8" opacity="0.22"/><rect x="1722" y="552" width="1" height="145" fill="#0000d4" opacity="0.22"/><rect x="1724" y="552" width="3" height="145" fill="#0000d0" opacity="0.22"/><rect x="1727" y="552" width="2" height="145" fill="#0a0af8" opacity="0.22"/><rect x="1730" y="552" width="3" height="145" fill="#0000d0" opacity="0.22"/><rect x="1737" y="552" width="2" height="145" fill="#0000cc" opacity="0.22"/><rect x="1739" y="552" width="1" height="145" fill="#0000c8" opacity="0.22"/><rect x="1741" y="552" width="1" height="145" fill="#0000c8" opacity="0.22"/><rect x="1742" y="552" width="1" height="145" fill="#0000cc" opacity="0.22"/><rect x="1743" y="552" width="1" height="145" fill="#0000d0" opacity="0.22"/><rect x="1748" y="552" width="3" height="145" fill="#0000c8" opacity="0.22"/><rect x="1751" y="552" width="2" height="145" fill="#0000d0" opacity="0.22"/><rect x="1754" y="552" width="2" height="145" fill="#0000d0" opacity="0.22"/><rect x="1756" y="552" width="2" height="145" fill="#0808f4" opacity="0.22"/><rect x="1760" y="552" width="2" height="145" fill="#0808f4" opacity="0.22"/><rect x="1767" y="552" width="1" height="145" fill="#0000d0" opacity="0.22"/><rect x="1768" y="552" width="1" height="145" fill="#0000c8" opacity="0.22"/><rect x="1775" y="552" width="3" height="145" fill="#0808f4" opacity="0.22"/><rect x="1779" y="552" width="1" height="145" fill="#0000d4" opacity="0.22"/><rect x="1781" y="552" width="3" height="145" fill="#0000cc" opacity="0.22"/><rect x="1787" y="552" width="2" height="145" fill="#0808f4" opacity="0.22"/><rect x="1791" y="552" width="1" height="145" fill="#0000d4" opacity="0.22"/><rect x="1792" y="552" width="1" height="145" fill="#0000cc" opacity="0.22"/><rect x="1793" y="552" width="2" height="145" fill="#0000cc" opacity="0.22"/><rect x="1806" y="552" width="2" height="145" fill="#0808f4" opacity="0.22"/><rect x="1808" y="552" width="3" height="145" fill="#0000d4" opacity="0.22"/><rect x="1811" y="552" width="2" height="145" fill="#0000d0" opacity="0.22"/><rect x="1813" y="552" width="1" height="145" fill="#0000d4" opacity="0.22"/><rect x="1820" y="552" width="2" height="145" fill="#0000d0" opacity="0.22"/><rect x="1822" y="552" width="2" height="145" fill="#0000d0" opacity="0.22"/><rect x="1831" y="552" width="1" height="145" fill="#0000d0" opacity="0.22"/><rect x="1832" y="552" width="2" height="145" fill="#0000cc" opacity="0.22"/><rect x="1838" y="552" width="1" height="145" fill="#0000c8" opacity="0.22"/><rect x="1845" y="552" width="2" height="145" fill="#0000d0" opacity="0.22"/><rect x="1849" y="552" width="1" height="145" fill="#0000cc" opacity="0.22"/><rect x="1852" y="552" width="3" height="145" fill="#0a0af8" opacity="0.22"/><rect x="1855" y="552" width="1" height="145" fill="#0a0af8" opacity="0.22"/><rect x="1856" y="552" width="2" height="145" fill="#0000d0" opacity="0.22"/><rect x="1859" y="552" width="3" height="145" fill="#0000c8" opacity="0.22"/><rect x="1862" y="552" width="2" height="145" fill="#0000c8" opacity="0.22"/><rect x="1864" y="552" width="2" height="145" fill="#0808f4" opacity="0.22"/><rect x="1866" y="552" width="1" height="145" fill="#0a0af8" opacity="0.22"/><rect x="1874" y="552" width="1" height="145" fill="#0000c8" opacity="0.22"/><rect x="1876" y="552" width="1" height="145" fill="#0000d4" opacity="0.22"/><path d="M354 564 V697" stroke="#2e62f4" stroke-width="1" stroke-dasharray="6 2 30 2 10 3 30 3" opacity="0.69"/><path d="M450 564 V697" stroke="#2e62f4" stroke-width="1" stroke-dasharray="6 3 14 3 30 2 10 8" opacity="0.59"/><path d="M454 564 V697" stroke="#2e62f4" stroke-width="1" stroke-dasharray="22 2 6 5 10 8 22 3" opacity="0.74"/><path d="M479.6 564 V697" stroke="#2e62f4" stroke-width="1" stroke-dasharray="6 2 30 5 45 3 10 8" opacity="0.35"/><path d="M546.7 564 V697" stroke="#2e62f4" stroke-width="1" stroke-dasharray="45 5 6 8 30 3 10 3" opacity="0.38"/><path d="M665 564 V697" stroke="#2e62f4" stroke-width="1" stroke-dasharray="22 5 22 2 10 12 14 5" opacity="0.40"/><path d="M713 564 V697" stroke="#2e62f4" stroke-width="1" stroke-dasharray="45 3 10 12 6 8 6 3" opacity="0.70"/><path d="M737 564 V697" stroke="#2e62f4" stroke-width="1" stroke-dasharray="10 3 30 5 45 3 30 8" opacity="0.70"/><path d="M741.8 564 V697" stroke="#2e62f4" stroke-width="1" stroke-dasharray="14 2 22 3 30 8 10 2" opacity="0.72"/><path d="M754.6 564 V697" stroke="#2e62f4" stroke-width="1" stroke-dasharray="30 12 10 3 45 12 14 2" opacity="0.48"/><path d="M765.6 564 V697" stroke="#2e62f4" stroke-width="1" stroke-dasharray="22 2 30 8 6 3 30 8" opacity="0.36"/><path d="M794.7 564 V697" stroke="#2e62f4" stroke-width="1" stroke-dasharray="10 2 6 8 6 3 10 5" opacity="0.69"/><path d="M813 564 V697" stroke="#2e62f4" stroke-width="1" stroke-dasharray="14 8 45 8 14 2 6 5" opacity="0.67"/><path d="M832 564 V697" stroke="#2e62f4" stroke-width="1" stroke-dasharray="6 2 14 5 6 2 10 5" opacity="0.57"/><path d="M857 564 V697" stroke="#2e62f4" stroke-width="1" stroke-dasharray="14 12 22 2 22 8 6 5" opacity="0.35"/><path d="M951 564 V697" stroke="#2e62f4" stroke-width="1" stroke-dasharray="30 5 10 2 14 12 14 12" opacity="0.45"/><path d="M1024.6 564 V697" stroke="#2e62f4" stroke-width="1" stroke-dasharray="22 3 22 5 6 12 10 8" opacity="0.64"/><path d="M1028 564 V697" stroke="#2e62f4" stroke-width="1" stroke-dasharray="6 8 14 2 30 12 30 5" opacity="0.60"/><path d="M1082 564 V697" stroke="#2e62f4" stroke-width="1" stroke-dasharray="10 3 30 12 22 8 45 5" opacity="0.61"/><path d="M1144 564 V697" stroke="#2e62f4" stroke-width="1" stroke-dasharray="10 3 45 12 6 3 10 12" opacity="0.66"/><path d="M1214 564 V697" stroke="#2e62f4" stroke-width="1" stroke-dasharray="14 8 30 8 45 8 30 12" opacity="0.74"/><path d="M1269 564 V697" stroke="#2e62f4" stroke-width="1" stroke-dasharray="22 12 22 5 6 12 30 5" opacity="0.44"/><path d="M1310.5 564 V697" stroke="#2e62f4" stroke-width="1" stroke-dasharray="6 8 30 8 14 8 14 2" opacity="0.70"/><path d="M1345.6 564 V697" stroke="#2e62f4" stroke-width="1" stroke-dasharray="22 12 45 12 22 3 6 12" opacity="0.75"/><path d="M1364 564 V697" stroke="#2e62f4" stroke-width="1" stroke-dasharray="22 3 45 8 14 2 45 12" opacity="0.47"/><path d="M1405.5 564 V697" stroke="#2e62f4" stroke-width="1" stroke-dasharray="45 5 6 3 30 3 45 2" opacity="0.74"/><path d="M1414 564 V697" stroke="#2e62f4" stroke-width="1" stroke-dasharray="22 12 22 12 22 8 6 3" opacity="0.32"/><path d="M1482.6 564 V697" stroke="#2e62f4" stroke-width="1" stroke-dasharray="22 8 22 2 10 3 45 3" opacity="0.64"/><path d="M1562 564 V697" stroke="#2e62f4" stroke-width="1" stroke-dasharray="6 12 14 5 45 2 14 5" opacity="0.59"/><path d="M1597.7 564 V697" stroke="#2e62f4" stroke-width="1" stroke-dasharray="45 12 14 8 14 2 10 8" opacity="0.59"/><path d="M1602 564 V697" stroke="#2e62f4" stroke-width="1" stroke-dasharray="6 5 6 2 10 5 30 8" opacity="0.62"/><path d="M1619 564 V697" stroke="#2e62f4" stroke-width="1" stroke-dasharray="45 8 6 8 6 5 22 12" opacity="0.33"/><path d="M1632 564 V697" stroke="#2e62f4" stroke-width="1" stroke-dasharray="22 3 10 8 30 2 6 2" opacity="0.36"/><path d="M1641 564 V697" stroke="#2e62f4" stroke-width="1" stroke-dasharray="10 2 10 5 14 8 30 2" opacity="0.69"/><path d="M1673 564 V697" stroke="#2e62f4" stroke-width="1" stroke-dasharray="6 5 6 8 45 3 22 3" opacity="0.49"/><path d="M1821.7 564 V697" stroke="#2e62f4" stroke-width="1" stroke-dasharray="14 3 14 5 30 5 6 3" opacity="0.68"/><path d="M1850 564 V697" stroke="#2e62f4" stroke-width="1" stroke-dasharray="14 3 14 3 6 3 22 12" opacity="0.50"/><path d="M380 564 V697" stroke="#2e62f4" stroke-width="1" stroke-dasharray="22 12 14 12 6 8 6 3" opacity="0.44"/><path d="M395 564 V697" stroke="#2e62f4" stroke-width="1" stroke-dasharray="6 12 10 5 14 3 10 3" opacity="0.35"/><path d="M420 564 V697" stroke="#2e62f4" stroke-width="1" stroke-dasharray="45 12 30 2 45 3 10 5" opacity="0.74"/><path d="M560 564 V697" stroke="#2e62f4" stroke-width="1" stroke-dasharray="14 3 6 3 22 2 10 5" opacity="0.59"/><path d="M590 564 V697" stroke="#2e62f4" stroke-width="1" stroke-dasharray="6 5 22 5 14 12 14 5" opacity="0.72"/><path d="M610 564 V697" stroke="#2e62f4" stroke-width="1" stroke-dasharray="22 12 6 5 45 3 45 5" opacity="0.65"/><path d="M690 564 V697" stroke="#2e62f4" stroke-width="1" stroke-dasharray="22 3 30 8 14 3 45 5" opacity="0.56"/><path d="M880 564 V697" stroke="#2e62f4" stroke-width="1" stroke-dasharray="22 2 30 8 45 3 14 3" opacity="0.66"/><path d="M900 564 V697" stroke="#2e62f4" stroke-width="1" stroke-dasharray="6 12 14 2 10 5 14 5" opacity="0.32"/><path d="M975 564 V697" stroke="#2e62f4" stroke-width="1" stroke-dasharray="22 3 10 5 30 5 30 12" opacity="0.38"/><path d="M990 564 V697" stroke="#2e62f4" stroke-width="1" stroke-dasharray="45 5 14 8 45 2 22 3" opacity="0.53"/><path d="M1160 564 V697" stroke="#2e62f4" stroke-width="1" stroke-dasharray="30 2 14 12 6 3 30 2" opacity="0.68"/><path d="M1190 564 V697" stroke="#2e62f4" stroke-width="1" stroke-dasharray="14 5 14 3 14 8 45 2" opacity="0.52"/><path d="M1240 564 V697" stroke="#2e62f4" stroke-width="1" stroke-dasharray="6 8 6 12 10 12 10 12" opacity="0.71"/><path d="M1300 564 V697" stroke="#2e62f4" stroke-width="1" stroke-dasharray="14 5 30 8 45 2 22 3" opacity="0.50"/><path d="M1460 564 V697" stroke="#2e62f4" stroke-width="1" stroke-dasharray="30 12 14 5 45 5 10 5" opacity="0.30"/><path d="M1530 564 V697" stroke="#2e62f4" stroke-width="1" stroke-dasharray="45 2 10 3 10 12 6 8" opacity="0.31"/><path d="M1580 564 V697" stroke="#2e62f4" stroke-width="1" stroke-dasharray="22 12 22 3 6 5 30 5" opacity="0.30"/><path d="M1700 564 V697" stroke="#2e62f4" stroke-width="1" stroke-dasharray="6 3 30 3 30 12 30 8" opacity="0.53"/><path d="M1750 564 V697" stroke="#2e62f4" stroke-width="1" stroke-dasharray="45 12 45 2 45 8 22 5" opacity="0.57"/><path d="M1810 564 V697" stroke="#2e62f4" stroke-width="1" stroke-dasharray="14 2 14 2 14 8 30 8" opacity="0.38"/><path d="M1835 564 V697" stroke="#2e62f4" stroke-width="1" stroke-dasharray="30 2 6 12 30 5 10 12" opacity="0.44"/><path d="M492 564 V697" stroke="#2e62f4" stroke-width="1" stroke-dasharray="22 5 22 8 6 12 14 5" opacity="0.34"/><path d="M500 564 V697" stroke="#2e62f4" stroke-width="1" stroke-dasharray="22 5 10 5 10 3 22 3" opacity="0.32"/><path d="M505 564 V697" stroke="#2e62f4" stroke-width="1" stroke-dasharray="6 2 6 12 22 12 22 5" opacity="0.55"/><path d="M511 564 V697" stroke="#2e62f4" stroke-width="1" stroke-dasharray="45 8 45 12 22 5 14 8" opacity="0.60"/><path d="M516 564 V697" stroke="#2e62f4" stroke-width="1" stroke-dasharray="30 2 30 8 30 2 10 12" opacity="0.62"/><path d="M636 564 V697" stroke="#2e62f4" stroke-width="1" stroke-dasharray="14 5 6 3 14 12 30 8" opacity="0.41"/><path d="M650 564 V697" stroke="#2e62f4" stroke-width="1" stroke-dasharray="14 3 6 12 6 12 22 2" opacity="0.42"/><path d="M655 564 V697" stroke="#2e62f4" stroke-width="1" stroke-dasharray="45 5 22 2 10 12 45 2" opacity="0.44"/><path d="M769 564 V697" stroke="#2e62f4" stroke-width="1" stroke-dasharray="6 3 10 12 45 12 10 12" opacity="0.46"/><path d="M775 564 V697" stroke="#2e62f4" stroke-width="1" stroke-dasharray="22 8 14 3 45 12 14 12" opacity="0.38"/><path d="M780 564 V697" stroke="#2e62f4" stroke-width="1" stroke-dasharray="45 5 45 12 30 3 14 5" opacity="0.44"/><path d="M797 564 V697" stroke="#2e62f4" stroke-width="1" stroke-dasharray="45 5 45 3 22 12 14 8" opacity="0.36"/><path d="M803 564 V697" stroke="#2e62f4" stroke-width="1" stroke-dasharray="22 2 6 2 22 8 22 12" opacity="0.70"/><path d="M820 564 V697" stroke="#2e62f4" stroke-width="1" stroke-dasharray="14 5 22 5 6 5 10 2" opacity="0.54"/><path d="M838 564 V697" stroke="#2e62f4" stroke-width="1" stroke-dasharray="6 5 14 8 30 8 30 5" opacity="0.32"/><path d="M1052 564 V697" stroke="#2e62f4" stroke-width="1" stroke-dasharray="6 3 14 12 45 8 14 12" opacity="0.30"/><path d="M1058 564 V697" stroke="#2e62f4" stroke-width="1" stroke-dasharray="30 5 22 5 10 8 45 3" opacity="0.47"/><path d="M1063 564 V697" stroke="#2e62f4" stroke-width="1" stroke-dasharray="30 3 10 2 45 5 45 8" opacity="0.68"/><path d="M1086 564 V697" stroke="#2e62f4" stroke-width="1" stroke-dasharray="10 12 22 2 22 8 45 8" opacity="0.43"/><path d="M1090 564 V697" stroke="#2e62f4" stroke-width="1" stroke-dasharray="6 8 6 5 6 3 45 8" opacity="0.43"/><path d="M1118 564 V697" stroke="#2e62f4" stroke-width="1" stroke-dasharray="45 8 10 8 45 2 6 8" opacity="0.70"/><path d="M1128 564 V697" stroke="#2e62f4" stroke-width="1" stroke-dasharray="45 8 14 2 30 5 6 2" opacity="0.64"/><path d="M1133 564 V697" stroke="#2e62f4" stroke-width="1" stroke-dasharray="45 12 14 5 10 2 30 5" opacity="0.57"/><path d="M1203 564 V697" stroke="#2e62f4" stroke-width="1" stroke-dasharray="45 12 6 8 14 12 6 8" opacity="0.69"/><path d="M1226 564 V697" stroke="#2e62f4" stroke-width="1" stroke-dasharray="45 8 45 2 6 5 14 5" opacity="0.72"/><path d="M1232 564 V697" stroke="#2e62f4" stroke-width="1" stroke-dasharray="14 8 30 3 14 5 14 12" opacity="0.69"/><path d="M1283 564 V697" stroke="#2e62f4" stroke-width="1" stroke-dasharray="45 12 22 2 10 12 14 12" opacity="0.41"/><path d="M1296 564 V697" stroke="#2e62f4" stroke-width="1" stroke-dasharray="30 2 30 5 10 5 45 3" opacity="0.41"/><path d="M1326 564 V697" stroke="#2e62f4" stroke-width="1" stroke-dasharray="6 2 30 12 30 8 30 12" opacity="0.54"/><path d="M1340 564 V697" stroke="#2e62f4" stroke-width="1" stroke-dasharray="30 2 45 3 30 12 22 8" opacity="0.35"/><path d="M1350 564 V697" stroke="#2e62f4" stroke-width="1" stroke-dasharray="14 5 10 12 22 2 45 8" opacity="0.59"/><path d="M1372 564 V697" stroke="#2e62f4" stroke-width="1" stroke-dasharray="10 8 22 3 6 5 45 5" opacity="0.47"/><path d="M1376 564 V697" stroke="#2e62f4" stroke-width="1" stroke-dasharray="6 2 14 5 6 3 30 8" opacity="0.64"/><path d="M1388 564 V697" stroke="#2e62f4" stroke-width="1" stroke-dasharray="30 5 30 5 14 8 22 12" opacity="0.39"/><path d="M1494 564 V697" stroke="#2e62f4" stroke-width="1" stroke-dasharray="30 8 10 8 14 12 22 8" opacity="0.71"/><path d="M1512 564 V697" stroke="#2e62f4" stroke-width="1" stroke-dasharray="14 2 6 8 30 12 6 2" opacity="0.61"/><path d="M1611 564 V697" stroke="#2e62f4" stroke-width="1" stroke-dasharray="14 8 14 12 14 3 30 2" opacity="0.35"/><path d="M1627 564 V697" stroke="#2e62f4" stroke-width="1" stroke-dasharray="30 8 30 12 30 5 45 8" opacity="0.74"/><path d="M1637 564 V697" stroke="#2e62f4" stroke-width="1" stroke-dasharray="30 2 6 3 10 8 14 8" opacity="0.73"/><path d="M1648 564 V697" stroke="#2e62f4" stroke-width="1" stroke-dasharray="10 5 30 5 45 5 10 3" opacity="0.61"/><path d="M1658 564 V697" stroke="#2e62f4" stroke-width="1" stroke-dasharray="30 8 6 2 30 3 22 5" opacity="0.42"/><path d="M1662 564 V697" stroke="#2e62f4" stroke-width="1" stroke-dasharray="22 2 6 5 45 3 45 12" opacity="0.40"/><path d="M474.6 564 V697" stroke="#6cc8ff" stroke-width="1.20" opacity="0.92"/><path d="M497.8 564 V697" stroke="#38c8ff" stroke-width="1.76" opacity="0.92"/><path d="M503 564 V697" stroke="#30b8ff" stroke-width="1.44" opacity="0.92"/><path d="M522.4 564 V697" stroke="#9adcff" stroke-width="1.28" opacity="0.92"/><path d="M641 564 V697" stroke="#4aa4ff" stroke-width="1.04" opacity="0.92"/><path d="M761 564 V697" stroke="#5cc0ff" stroke-width="1.12" opacity="0.92"/><path d="M784 564 V697" stroke="#30c0ff" stroke-width="1.92" opacity="0.92"/><path d="M809 564 V697" stroke="#6cc8ff" stroke-width="1.20" opacity="0.92"/><path d="M845.7 564 V697" stroke="#5cc0ff" stroke-width="0.96" opacity="0.92"/><path d="M927 564 V697" stroke="#4aa4ff" stroke-width="0.96" opacity="0.92"/><path d="M1047.8 564 V697" stroke="#6cc8ff" stroke-width="1.20" opacity="0.92"/><path d="M1068.5 564 V697" stroke="#28b0ff" stroke-width="1.60" opacity="0.92"/><path d="M1071.5 564 V697" stroke="#28a8ff" stroke-width="1.20" opacity="0.92"/><path d="M1095.9 564 V697" stroke="#54b8ff" stroke-width="1.20" opacity="0.92"/><path d="M1099.7 564 V697" stroke="#30b0ff" stroke-width="1.60" opacity="0.92"/><path d="M1110 564 V697" stroke="#30c8ff" stroke-width="1.20" opacity="0.92"/><path d="M1113 564 V697" stroke="#50d0ff" stroke-width="1.28" opacity="0.92"/><path d="M1123.5 564 V697" stroke="#70ccff" stroke-width="1.04" opacity="0.92"/><path d="M1209.6 564 V697" stroke="#4aa4ff" stroke-width="0.96" opacity="0.92"/><path d="M1277 564 V697" stroke="#5cc0ff" stroke-width="0.96" opacity="0.92"/><path d="M1334 564 V697" stroke="#5cc0ff" stroke-width="1.20" opacity="0.92"/><path d="M1355 564 V697" stroke="#30b0ff" stroke-width="1.28" opacity="0.92"/><path d="M1358 564 V697" stroke="#30a8ff" stroke-width="1.12" opacity="0.92"/><path d="M1382.4 564 V697" stroke="#5cc0ff" stroke-width="0.96" opacity="0.92"/><path d="M1501.6 564 V697" stroke="#58b0ff" stroke-width="1.04" opacity="0.92"/><path d="M1550 564 V697" stroke="#48a0ff" stroke-width="0.96" opacity="0.92"/><path d="M1621.6 564 V697" stroke="#6cc8ff" stroke-width="1.20" opacity="0.92"/><path d="M1644.6 564 V697" stroke="#30c0ff" stroke-width="1.92" opacity="0.92"/><path d="M1650.5 564 V697" stroke="#40b0ff" stroke-width="1.04" opacity="0.92"/><path d="M1669 564 V697" stroke="#5cb8ff" stroke-width="1.04" opacity="0.92"/><path d="M1787 564 V697" stroke="#5cc0ff" stroke-width="1.04" opacity="0.92"/><rect x="1104" y="564" width="3.6" height="133" fill="#00d890"/><path d="M359.7 565.5 V697" stroke="#74ccff" stroke-width="1.3" stroke-dasharray="9 19.7"/><path d="M431 565.5 V697" stroke="#60b8ff" stroke-width="1.2" stroke-dasharray="9 19.7"/><path d="M494 565.5 V697" stroke="#68c0ff" stroke-width="1.2" stroke-dasharray="9 19.7"/><path d="M508 565.5 V697" stroke="#60b8ff" stroke-width="1.1" stroke-dasharray="9 19.7"/><path d="M575.5 565.5 V697" stroke="#74ccff" stroke-width="1.3" stroke-dasharray="9 19.7"/><path d="M646 565.5 V697" stroke="#74ccff" stroke-width="1.3" stroke-dasharray="9 19.7"/><path d="M718.4 565.5 V697" stroke="#74ccff" stroke-width="1.3" stroke-dasharray="9 19.7"/><path d="M789.6 565.5 V697" stroke="#50c0ff" stroke-width="1.6" stroke-dasharray="9 19.7"/><path d="M861.5 565.5 V697" stroke="#74ccff" stroke-width="1.3" stroke-dasharray="9 19.7"/><path d="M934 565.5 V697" stroke="#74ccff" stroke-width="1.3" stroke-dasharray="9 19.7"/><path d="M1004.7 565.5 V697" stroke="#68c0ff" stroke-width="1.2" stroke-dasharray="9 19.7"/><path d="M1076 565.5 V697" stroke="#60b8ff" stroke-width="1.3" stroke-dasharray="9 19.7"/><path d="M1148.7 565.5 V697" stroke="#68c0ff" stroke-width="1.2" stroke-dasharray="9 19.7"/><path d="M1220.6 565.5 V697" stroke="#74ccff" stroke-width="1.3" stroke-dasharray="9 19.7"/><path d="M1291 565.5 V697" stroke="#74ccff" stroke-width="1.3" stroke-dasharray="9 19.7"/><path d="M1368.4 565.5 V697" stroke="#68c0ff" stroke-width="1.2" stroke-dasharray="9 19.7"/><path d="M1402 565.5 V697" stroke="#3a80f0" stroke-width="0.9" stroke-dasharray="9 19.7"/><path d="M1408 565.5 V697" stroke="#3a80f0" stroke-width="0.9" stroke-dasharray="9 19.7"/><path d="M1411 565.5 V697" stroke="#3a80f0" stroke-width="0.9" stroke-dasharray="9 19.7"/><path d="M1435 565.5 V697" stroke="#74ccff" stroke-width="1.3" stroke-dasharray="9 19.7"/><path d="M1506.4 565.5 V697" stroke="#7ac8ff" stroke-width="1.4" stroke-dasharray="9 19.7"/><path d="M1578 565.5 V697" stroke="#74ccff" stroke-width="1.3" stroke-dasharray="9 19.7"/><path d="M1654.6 565.5 V697" stroke="#68c0ff" stroke-width="1.2" stroke-dasharray="9 19.7"/><path d="M1722.3 565.5 V697" stroke="#40d8ff" stroke-width="2" stroke-dasharray="9 19.7"/><path d="M1794 565.5 V697" stroke="#40d8ff" stroke-width="2" stroke-dasharray="9 19.7"/><path d="M1865.3 565.5 V697" stroke="#74ccff" stroke-width="1.3" stroke-dasharray="9 19.7"/><path d="M1113 565.5 V697" stroke="#c0f0ff" stroke-width="1.4" stroke-dasharray="9 19.7"/><rect x="332" y="552" width="1548" height="12.5" fill="#00000e" opacity="0.93"/><path d="M474.6 553 V564" stroke="#1838c0" stroke-width="1.5" opacity="0.55"/><path d="M497.8 553 V564" stroke="#1838c0" stroke-width="2.2" opacity="0.55"/><path d="M503 553 V564" stroke="#1838c0" stroke-width="1.8" opacity="0.55"/><path d="M522.4 553 V564" stroke="#1838c0" stroke-width="1.6" opacity="0.55"/><path d="M641 553 V564" stroke="#1838c0" stroke-width="1.3" opacity="0.55"/><path d="M761 553 V564" stroke="#1838c0" stroke-width="1.4" opacity="0.55"/><path d="M784 553 V564" stroke="#1838c0" stroke-width="2.4" opacity="0.55"/><path d="M809 553 V564" stroke="#1838c0" stroke-width="1.5" opacity="0.55"/><path d="M845.7 553 V564" stroke="#1838c0" stroke-width="1.2" opacity="0.55"/><path d="M927 553 V564" stroke="#1838c0" stroke-width="1.2" opacity="0.55"/><path d="M1047.8 553 V564" stroke="#1838c0" stroke-width="1.5" opacity="0.55"/><path d="M1068.5 553 V564" stroke="#1838c0" stroke-width="2" opacity="0.55"/><path d="M1071.5 553 V564" stroke="#1838c0" stroke-width="1.5" opacity="0.55"/><path d="M1095.9 553 V564" stroke="#1838c0" stroke-width="1.5" opacity="0.55"/><path d="M1099.7 553 V564" stroke="#1838c0" stroke-width="2" opacity="0.55"/><path d="M1110 553 V564" stroke="#1838c0" stroke-width="1.5" opacity="0.55"/><path d="M1113 553 V564" stroke="#1838c0" stroke-width="1.6" opacity="0.55"/><path d="M1123.5 553 V564" stroke="#1838c0" stroke-width="1.3" opacity="0.55"/><path d="M1209.6 553 V564" stroke="#1838c0" stroke-width="1.2" opacity="0.55"/><path d="M1277 553 V564" stroke="#1838c0" stroke-width="1.2" opacity="0.55"/><path d="M1334 553 V564" stroke="#1838c0" stroke-width="1.5" opacity="0.55"/><path d="M1355 553 V564" stroke="#1838c0" stroke-width="1.6" opacity="0.55"/><path d="M1358 553 V564" stroke="#1838c0" stroke-width="1.4" opacity="0.55"/><path d="M1382.4 553 V564" stroke="#1838c0" stroke-width="1.2" opacity="0.55"/><path d="M1501.6 553 V564" stroke="#1838c0" stroke-width="1.3" opacity="0.55"/><path d="M1550 553 V564" stroke="#1838c0" stroke-width="1.2" opacity="0.55"/><path d="M1621.6 553 V564" stroke="#1838c0" stroke-width="1.5" opacity="0.55"/><path d="M1644.6 553 V564" stroke="#1838c0" stroke-width="2.4" opacity="0.55"/><path d="M1650.5 553 V564" stroke="#1838c0" stroke-width="1.3" opacity="0.55"/><path d="M1669 553 V564" stroke="#1838c0" stroke-width="1.3" opacity="0.55"/><path d="M1787 553 V564" stroke="#1838c0" stroke-width="1.3" opacity="0.55"/><path d="M354 553 V564" stroke="#0c1c80" stroke-width="1" opacity="0.5"/><path d="M454 553 V564" stroke="#0c1c80" stroke-width="1" opacity="0.5"/><path d="M546.7 553 V564" stroke="#0c1c80" stroke-width="1" opacity="0.5"/><path d="M713 553 V564" stroke="#0c1c80" stroke-width="1" opacity="0.5"/><path d="M741.8 553 V564" stroke="#0c1c80" stroke-width="1" opacity="0.5"/><path d="M765.6 553 V564" stroke="#0c1c80" stroke-width="1" opacity="0.5"/><path d="M813 553 V564" stroke="#0c1c80" stroke-width="1" opacity="0.5"/><path d="M857 553 V564" stroke="#0c1c80" stroke-width="1" opacity="0.5"/><path d="M1024.6 553 V564" stroke="#0c1c80" stroke-width="1" opacity="0.5"/><path d="M1082 553 V564" stroke="#0c1c80" stroke-width="1" opacity="0.5"/><path d="M1214 553 V564" stroke="#0c1c80" stroke-width="1" opacity="0.5"/><path d="M1310.5 553 V564" stroke="#0c1c80" stroke-width="1" opacity="0.5"/><path d="M1364 553 V564" stroke="#0c1c80" stroke-width="1" opacity="0.5"/><path d="M1414 553 V564" stroke="#0c1c80" stroke-width="1" opacity="0.5"/><path d="M1562 553 V564" stroke="#0c1c80" stroke-width="1" opacity="0.5"/><path d="M1602 553 V564" stroke="#0c1c80" stroke-width="1" opacity="0.5"/><path d="M1632 553 V564" stroke="#0c1c80" stroke-width="1" opacity="0.5"/><path d="M1673 553 V564" stroke="#0c1c80" stroke-width="1" opacity="0.5"/><path d="M1850 553 V564" stroke="#0c1c80" stroke-width="1" opacity="0.5"/><path d="M395 553 V564" stroke="#0c1c80" stroke-width="1" opacity="0.5"/><path d="M560 553 V564" stroke="#0c1c80" stroke-width="1" opacity="0.5"/><path d="M610 553 V564" stroke="#0c1c80" stroke-width="1" opacity="0.5"/><path d="M880 553 V564" stroke="#0c1c80" stroke-width="1" opacity="0.5"/><path d="M975 553 V564" stroke="#0c1c80" stroke-width="1" opacity="0.5"/><path d="M1160 553 V564" stroke="#0c1c80" stroke-width="1" opacity="0.5"/><path d="M1240 553 V564" stroke="#0c1c80" stroke-width="1" opacity="0.5"/><path d="M1460 553 V564" stroke="#0c1c80" stroke-width="1" opacity="0.5"/><path d="M1580 553 V564" stroke="#0c1c80" stroke-width="1" opacity="0.5"/><path d="M1750 553 V564" stroke="#0c1c80" stroke-width="1" opacity="0.5"/><path d="M1835 553 V564" stroke="#0c1c80" stroke-width="1" opacity="0.5"/><path d="M500 553 V564" stroke="#0c1c80" stroke-width="1" opacity="0.5"/><path d="M511 553 V564" stroke="#0c1c80" stroke-width="1" opacity="0.5"/><path d="M636 553 V564" stroke="#0c1c80" stroke-width="1" opacity="0.5"/><path d="M655 553 V564" stroke="#0c1c80" stroke-width="1" opacity="0.5"/><path d="M775 553 V564" stroke="#0c1c80" stroke-width="1" opacity="0.5"/><path d="M797 553 V564" stroke="#0c1c80" stroke-width="1" opacity="0.5"/><path d="M820 553 V564" stroke="#0c1c80" stroke-width="1" opacity="0.5"/><path d="M1052 553 V564" stroke="#0c1c80" stroke-width="1" opacity="0.5"/><path d="M1063 553 V564" stroke="#0c1c80" stroke-width="1" opacity="0.5"/><path d="M1090 553 V564" stroke="#0c1c80" stroke-width="1" opacity="0.5"/><path d="M1128 553 V564" stroke="#0c1c80" stroke-width="1" opacity="0.5"/><path d="M1203 553 V564" stroke="#0c1c80" stroke-width="1" opacity="0.5"/><path d="M1232 553 V564" stroke="#0c1c80" stroke-width="1" opacity="0.5"/><path d="M1296 553 V564" stroke="#0c1c80" stroke-width="1" opacity="0.5"/><path d="M1340 553 V564" stroke="#0c1c80" stroke-width="1" opacity="0.5"/><path d="M1372 553 V564" stroke="#0c1c80" stroke-width="1" opacity="0.5"/><path d="M1388 553 V564" stroke="#0c1c80" stroke-width="1" opacity="0.5"/><path d="M1512 553 V564" stroke="#0c1c80" stroke-width="1" opacity="0.5"/><path d="M1627 553 V564" stroke="#0c1c80" stroke-width="1" opacity="0.5"/><path d="M1648 553 V564" stroke="#0c1c80" stroke-width="1" opacity="0.5"/><path d="M1662 553 V564" stroke="#0c1c80" stroke-width="1" opacity="0.5"/><path d="M1102.5 552 V564" stroke="#30a0e0" stroke-width="1" opacity="0.8"/><path d="M1105.5 552 V564" stroke="#30a0e0" stroke-width="1" opacity="0.8"/><path d="M1108 552 V564" stroke="#30a0e0" stroke-width="1" opacity="0.8"/><path d="M1113.5 552 V564" stroke="#30a0e0" stroke-width="1" opacity="0.8"/><path d="M1178 554 V697" stroke="#d8d8f0" stroke-width="1.4" stroke-dasharray="2.6 2.6" opacity="0.72"/><path d="M1392.8 554 V697" stroke="#b0b0c8" stroke-width="1.4" stroke-dasharray="2.6 2.6" opacity="0.72"/><path d="M1395.3 554 V697" stroke="#b0b0c8" stroke-width="1.4" stroke-dasharray="2.6 2.6" opacity="0.72"/><path d="M1686.6 554 V697" stroke="#d0d0e8" stroke-width="1.4" stroke-dasharray="2.6 2.6" opacity="0.72"/><path d="M1696.4 554 V697" stroke="#c8c8a8" stroke-width="1.4" stroke-dasharray="2.6 2.6" opacity="0.72"/><path d="M1698.4 554 V697" stroke="#b0b0c0" stroke-width="1.4" stroke-dasharray="2.6 2.6" opacity="0.72"/><path d="M1702.5 554 V697" stroke="#d0d0e8" stroke-width="1.4" stroke-dasharray="2.6 2.6" opacity="0.72"/><path d="M1722.3 554 V697" stroke="#d0d0e8" stroke-width="1.4" stroke-dasharray="2.6 2.6" opacity="0.72"/><path d="M1731 554 V697" stroke="#d0d0e8" stroke-width="1.4" stroke-dasharray="2.6 2.6" opacity="0.72"/><path d="M1765.6 554 V697" stroke="#d0d0e8" stroke-width="1.4" stroke-dasharray="2.6 2.6" opacity="0.72"/><path d="M1781.4 554 V697" stroke="#8a8ad8" stroke-width="1.4" stroke-dasharray="2.6 2.6" opacity="0.72"/><path d="M1795 554 V697" stroke="#e0c8c8" stroke-width="1.4" stroke-dasharray="2.6 2.6" opacity="0.72"/></svg>
<div style="position:absolute;left:342px;top:626px;width:178px;height:61px;border-radius:6px;background:rgba(0,0,40,0.8)"></div>
<div style="position:absolute;left:356px;top:636px;height:44px;line-height:44px;white-space:pre;color:#fff;font-family:'DejaVu Sans Mono',monospace;font-size:36.2px">11:50<span style="font-size:22px">:51</span></div>
<div style="position:absolute;left:1039.500px;top:628px;width:133px;height:58.500px;border-radius:5px;background:rgba(0,0,45,0.82)"></div>
<div style="position:absolute;top:635.5px;line-height:21px;height:21px;font-size:13.6px;color:#fff;font-family:'DejaVu Sans Mono','Liberation Mono',monospace;white-space:pre;left:1048px;">Freq:  432 MHz</div>
<div style="position:absolute;top:658.5px;line-height:21px;height:21px;font-size:13.6px;color:#fff;font-family:'DejaVu Sans Mono','Liberation Mono',monospace;white-space:pre;left:1048px;">Span: ±540 kHz</div>
<div style="position:absolute;left:332px;top:697px;width:1548px;height:27px;background:#f0f0f0;"></div>
<div style="position:absolute;left:359px;top:697px;width:1403px;height:27px;background:#000;"></div>
<div style="position:absolute;left:359px;top:697px;width:1403px;height:20px;background:linear-gradient(#626262 0%,#444 20%,#262626 38%,#0a0a0a 58%,#000 70%);"></div>
<div style="position:absolute;left:920px;top:697px;width:280px;height:27px;background:linear-gradient(rgba(255,255,255,0.14),rgba(255,255,255,0.24) 50%,rgba(255,255,255,0.22));"></div>
<div style="position:absolute;left:920px;top:697px;width:280px;height:27px;background:radial-gradient(ellipse 48% 62% at 50% 112%,rgba(215,215,0,0.8),rgba(150,150,0,0.35) 60%,rgba(0,0,0,0) 100%)"></div>
<div style="position:absolute;left:920px;top:697px;width:1.2px;height:27px;background:#d8d8d8;"></div>
<div style="position:absolute;left:1199.5px;top:697px;width:1.2px;height:27px;background:#d8d8d8;"></div>
<div style="position:absolute;left:1059.5px;top:697px;width:1.5px;height:27px;background:#e8e820;"></div>
<svg style="position:absolute;left:0px;top:0px;" width="1920" height="730"><rect x="370.1" y="698" width="1" height="3" fill="#909090"/><rect x="383.1" y="698" width="1" height="3" fill="#909090"/><rect x="396.1" y="698" width="1" height="3" fill="#909090"/><rect x="409.1" y="698" width="1.3" height="6" fill="#bdbdbd"/><rect x="422.1" y="698" width="1" height="3" fill="#909090"/><rect x="435.1" y="698" width="1" height="3" fill="#909090"/><rect x="448.1" y="698" width="1" height="3" fill="#909090"/><rect x="461.1" y="698" width="1" height="3" fill="#909090"/><rect x="474.1" y="698" width="1" height="4.500" fill="#a0a0a0"/><rect x="487.1" y="698" width="1" height="3" fill="#909090"/><rect x="500.1" y="698" width="1" height="3" fill="#909090"/><rect x="513.1" y="698" width="1" height="3" fill="#909090"/><rect x="526.1" y="698" width="1" height="3" fill="#909090"/><rect x="539.1" y="698" width="1.3" height="6" fill="#bdbdbd"/><rect x="552.1" y="698" width="1" height="3" fill="#909090"/><rect x="565.1" y="698" width="1" height="3" fill="#909090"/><rect x="578.1" y="698" width="1" height="3" fill="#909090"/><rect x="591.1" y="698" width="1" height="3" fill="#909090"/><rect x="604.1" y="698" width="1" height="4.500" fill="#a0a0a0"/><rect x="617.1" y="698" width="1" height="3" fill="#909090"/><rect x="630.1" y="698" width="1" height="3" fill="#909090"/><rect x="643.1" y="698" width="1" height="3" fill="#909090"/><rect x="656.1" y="698" width="1" height="3" fill="#909090"/><rect x="669.1" y="698" width="1.3" height="6" fill="#bdbdbd"/><rect x="682.1" y="698" width="1" height="3" fill="#909090"/><rect x="695.1" y="698" width="1" height="3" fill="#909090"/><rect x="708.1" y="698" width="1" height="3" fill="#909090"/><rect x="721.1" y="698" width="1" height="3" fill="#909090"/><rect x="734.1" y="698" width="1" height="4.500" fill="#a0a0a0"/><rect x="747.1" y="698" width="1" height="3" fill="#909090"/><rect x="760.1" y="698" width="1" height="3" fill="#909090"/><rect x="773.1" y="698" width="1" height="3" fill="#909090"/><rect x="786.1" y="698" width="1" height="3" fill="#909090"/><rect x="799.1" y="698" width="1.3" height="6" fill="#bdbdbd"/><rect x="812.1" y="698" width="1" height="3" fill="#909090"/><rect x="825.1" y="698" width="1" height="3" fill="#909090"/><rect x="838.1" y="698" width="1" height="3" fill="#909090"/><rect x="851.1" y="698" width="1" height="3" fill="#909090"/><rect x="864.1" y="698" width="1" height="4.500" fill="#a0a0a0"/><rect x="877.1" y="698" width="1" height="3" fill="#909090"/><rect x="890.1" y="698" width="1" height="3" fill="#909090"/><rect x="903.1" y="698" width="1" height="3" fill="#909090"/><rect x="916.1" y="698" width="1" height="3" fill="#909090"/><rect x="929.1" y="698" width="1.3" height="6" fill="#bdbdbd"/><rect x="942.1" y="698" width="1" height="3" fill="#909090"/><rect x="955.1" y="698" width="1" height="3" fill="#909090"/><rect x="968.1" y="698" width="1" height="3" fill="#909090"/><rect x="981.1" y="698" width="1" height="3" fill="#909090"/><rect x="994.1" y="698" width="1" height="4.500" fill="#a0a0a0"/><rect x="1007.1" y="698" width="1" height="3" fill="#909090"/><rect x="1020.1" y="698" width="1" height="3" fill="#909090"/><rect x="1033.1" y="698" width="1" height="3" fill="#909090"/><rect x="1046.1" y="698" width="1" height="3" fill="#909090"/><rect x="1059.1" y="698" width="1.3" height="6" fill="#bdbdbd"/><rect x="1072.1" y="698" width="1" height="3" fill="#909090"/><rect x="1085.1" y="698" width="1" height="3" fill="#909090"/><rect x="1098.1" y="698" width="1" height="3" fill="#909090"/><rect x="1111.1" y="698" width="1" height="3" fill="#909090"/><rect x="1124.1" y="698" width="1" height="4.500" fill="#a0a0a0"/><rect x="1137.1" y="698" width="1" height="3" fill="#909090"/><rect x="1150.1" y="698" width="1" height="3" fill="#909090"/><rect x="1163.1" y="698" width="1" height="3" fill="#909090"/><rect x="1176.1" y="698" width="1" height="3" fill="#909090"/><rect x="1189.1" y="698" width="1.3" height="6" fill="#bdbdbd"/><rect x="1202.1" y="698" width="1" height="3" fill="#909090"/><rect x="1215.1" y="698" width="1" height="3" fill="#909090"/><rect x="1228.1" y="698" width="1" height="3" fill="#909090"/><rect x="1241.1" y="698" width="1" height="3" fill="#909090"/><rect x="1254.1" y="698" width="1" height="4.500" fill="#a0a0a0"/><rect x="1267.1" y="698" width="1" height="3" fill="#909090"/><rect x="1280.1" y="698" width="1" height="3" fill="#909090"/><rect x="1293.1" y="698" width="1" height="3" fill="#909090"/><rect x="1306.1" y="698" width="1" height="3" fill="#909090"/><rect x="1319.1" y="698" width="1.3" height="6" fill="#bdbdbd"/><rect x="1332.1" y="698" width="1" height="3" fill="#909090"/><rect x="1345.1" y="698" width="1" height="3" fill="#909090"/><rect x="1358.1" y="698" width="1" height="3" fill="#909090"/><rect x="1371.1" y="698" width="1" height="3" fill="#909090"/><rect x="1384.1" y="698" width="1" height="4.500" fill="#a0a0a0"/><rect x="1397.1" y="698" width="1" height="3" fill="#909090"/><rect x="1410.1" y="698" width="1" height="3" fill="#909090"/><rect x="1423.1" y="698" width="1" height="3" fill="#909090"/><rect x="1436.1" y="698" width="1" height="3" fill="#909090"/><rect x="1449.1" y="698" width="1.3" height="6" fill="#bdbdbd"/><rect x="1462.1" y="698" width="1" height="3" fill="#909090"/><rect x="1475.1" y="698" width="1" height="3" fill="#909090"/><rect x="1488.1" y="698" width="1" height="3" fill="#909090"/><rect x="1501.1" y="698" width="1" height="3" fill="#909090"/><rect x="1514.1" y="698" width="1" height="4.500" fill="#a0a0a0"/><rect x="1527.1" y="698" width="1" height="3" fill="#909090"/><rect x="1540.1" y="698" width="1" height="3" fill="#909090"/><rect x="1553.1" y="698" width="1" height="3" fill="#909090"/><rect x="1566.1" y="698" width="1" height="3" fill="#909090"/><rect x="1579.1" y="698" width="1.3" height="6" fill="#bdbdbd"/><rect x="1592.1" y="698" width="1" height="3" fill="#909090"/><rect x="1605.1" y="698" width="1" height="3" fill="#909090"/><rect x="1618.1" y="698" width="1" height="3" fill="#909090"/><rect x="1631.1" y="698" width="1" height="3" fill="#909090"/><rect x="1644.1" y="698" width="1" height="4.500" fill="#a0a0a0"/><rect x="1657.1" y="698" width="1" height="3" fill="#909090"/><rect x="1670.1" y="698" width="1" height="3" fill="#909090"/><rect x="1683.1" y="698" width="1" height="3" fill="#909090"/><rect x="1696.1" y="698" width="1" height="3" fill="#909090"/><rect x="1709.1" y="698" width="1.3" height="6" fill="#bdbdbd"/><rect x="1722.1" y="698" width="1" height="3" fill="#909090"/><rect x="1735.1" y="698" width="1" height="3" fill="#909090"/><rect x="1748.1" y="698" width="1" height="3" fill="#909090"/><rect x="1761.1" y="698" width="1" height="3" fill="#909090"/></svg>
<div style="position:absolute;top:706.0px;line-height:19px;height:19px;font-size:12.5px;color:#b4b4b4;font-family:'Liberation Sans',sans-serif;white-space:pre;left:409.6px;transform:translateX(-50%);">429.500</div>
<div style="position:absolute;top:706.0px;line-height:19px;height:19px;font-size:12.5px;color:#b4b4b4;font-family:'Liberation Sans',sans-serif;white-space:pre;left:539.6px;transform:translateX(-50%);">430.000</div>
<div style="position:absolute;top:706.0px;line-height:19px;height:19px;font-size:12.5px;color:#b4b4b4;font-family:'Liberation Sans',sans-serif;white-space:pre;left:669.6px;transform:translateX(-50%);">430.500</div>
<div style="position:absolute;top:706.0px;line-height:19px;height:19px;font-size:12.5px;color:#b4b4b4;font-family:'Liberation Sans',sans-serif;white-space:pre;left:799.6px;transform:translateX(-50%);">431.000</div>
<div style="position:absolute;top:706.0px;line-height:19px;height:19px;font-size:12.5px;color:#b4b4b4;font-family:'Liberation Sans',sans-serif;white-space:pre;left:929.6px;transform:translateX(-50%);">431.500</div>
<div style="position:absolute;top:706.0px;line-height:19px;height:19px;font-size:12.5px;color:#b4b4b4;font-family:'Liberation Sans',sans-serif;white-space:pre;left:1059.6px;transform:translateX(-50%);">432.000</div>
<div style="position:absolute;top:706.0px;line-height:19px;height:19px;font-size:12.5px;color:#b4b4b4;font-family:'Liberation Sans',sans-serif;white-space:pre;left:1189.6px;transform:translateX(-50%);">432.500</div>
<div style="position:absolute;top:706.0px;line-height:19px;height:19px;font-size:12.5px;color:#b4b4b4;font-family:'Liberation Sans',sans-serif;white-space:pre;left:1319.6px;transform:translateX(-50%);">433.000</div>
<div style="position:absolute;top:706.0px;line-height:19px;height:19px;font-size:12.5px;color:#b4b4b4;font-family:'Liberation Sans',sans-serif;white-space:pre;left:1449.6px;transform:translateX(-50%);">433.500</div>
<div style="position:absolute;top:706.0px;line-height:19px;height:19px;font-size:12.5px;color:#b4b4b4;font-family:'Liberation Sans',sans-serif;white-space:pre;left:1579.6px;transform:translateX(-50%);">434.000</div>
<div style="position:absolute;top:706.0px;line-height:19px;height:19px;font-size:12.5px;color:#b4b4b4;font-family:'Liberation Sans',sans-serif;white-space:pre;left:1709.6px;transform:translateX(-50%);">434.500</div>
<div style="position:absolute;left:334px;top:699px;width:24px;height:24px;box-sizing:border-box;border:1px solid #adadad;background:#e1e1e1"></div>
<div style="position:absolute;left:1763px;top:699px;width:36px;height:24px;box-sizing:border-box;border:1px solid #adadad;background:#e1e1e1"></div>
<div style="position:absolute;left:1802px;top:699px;width:49px;height:24px;box-sizing:border-box;border:1px solid #adadad;background:#e1e1e1"></div>
<div style="position:absolute;left:1854px;top:699px;width:24px;height:24px;box-sizing:border-box;border:1px solid #adadad;background:#e1e1e1"></div>
<svg style="position:absolute;left:0px;top:0px;" width="1920" height="730"><circle cx="346" cy="711" r="7.5" fill="none" stroke="#222" stroke-width="1.5"/><path d="M345.500 708 V714 L341.500 711 Z M350 708 V714 L346 711 Z" fill="#222"/><circle cx="1866" cy="711" r="7.5" fill="none" stroke="#222" stroke-width="1.5"/><path d="M1862.5 708 V714 L1866.500 711 Z M1867 708 V714 L1871 711 Z" fill="#222"/><rect x="1773.5" y="708.5" width="15" height="7.500" fill="#fff" stroke="#333"/><path d="M1775 711 H1787 M1775 713.5 H1787" stroke="#333" stroke-width="1" stroke-dasharray="1.5 1"/><path d="M1780 708 Q1782 705 1786 706" stroke="#333" fill="none" stroke-width="0.9"/><path d="M1839 707.500 L1844 711 L1839 714.5 Z" fill="#111"/></svg>
<div style="position:absolute;top:702.0px;line-height:18px;height:18px;font-size:12px;color:#111;font-family:'Liberation Sans',sans-serif;white-space:pre;left:1817px;transform:translateX(-50%);">x5</div>
<div style="position:absolute;left:332px;top:724px;width:1588px;height:5px;background:#fafafa;"></div>
<div style="position:absolute;left:1881.3px;top:146px;width:36.4px;height:578px;background:#000;"></div>
<div style="position:absolute;left:1882px;top:147px;width:36px;height:28px;background:linear-gradient(#5c5c5c,#3c3c3c 48%,#000 52%,#000);"></div>
<div style="position:absolute;left:1882px;top:175px;width:36px;height:1px;background:#3a3a3a;"></div>
<div style="position:absolute;top:151.5px;line-height:18px;height:18px;font-size:11.5px;color:#f0f0f0;font-family:'Liberation Sans',sans-serif;white-space:pre;left:1900.0px;transform:translateX(-50%);">Auto</div>
<div style="position:absolute;left:1883.3px;top:381px;width:34.2px;height:300px;background:linear-gradient(#ff2a8c 0%,#ff0a46 8%,#ff0000 14%,#ff5a00 24%,#ff9800 30%,#ffe600 38%,#b4ff00 44%,#20f000 52%,#00e860 60%,#00c8c8 66%,#0090ff 71%,#0030ff 77%,#0000e0 82%,#000090 90%,#000030 97%,#000008 100%);"></div>
<div style="position:absolute;left:1883.3px;top:380.5px;width:34.2px;height:1.5px;background:#f4f4f4;"></div>
<div style="position:absolute;left:1883.3px;top:681px;width:34.2px;height:1.5px;background:#f4f4f4;"></div>
<div style="position:absolute;top:202.5px;line-height:15px;height:15px;font-size:9.5px;color:#8c8c8c;font-family:'Liberation Sans',sans-serif;white-space:pre;left:1901.0px;transform:translateX(-50%);">-10</div>
<div style="position:absolute;top:236.8px;line-height:15px;height:15px;font-size:9.5px;color:#8c8c8c;font-family:'Liberation Sans',sans-serif;white-space:pre;left:1901.0px;transform:translateX(-50%);">-20</div>
<div style="position:absolute;top:271.0px;line-height:15px;height:15px;font-size:9.5px;color:#8c8c8c;font-family:'Liberation Sans',sans-serif;white-space:pre;left:1901.0px;transform:translateX(-50%);">-30</div>
<div style="position:absolute;top:305.2px;line-height:15px;height:15px;font-size:9.5px;color:#8c8c8c;font-family:'Liberation Sans',sans-serif;white-space:pre;left:1901.0px;transform:translateX(-50%);">-40</div>
<div style="position:absolute;top:339.5px;line-height:15px;height:15px;font-size:9.5px;color:#8c8c8c;font-family:'Liberation Sans',sans-serif;white-space:pre;left:1901.0px;transform:translateX(-50%);">-50</div>
<div style="position:absolute;left:1886px;top:382.0px;width:28px;height:8px;border-radius:0 0 5px 5px;background:rgba(0,0,0,0.3)"></div>
<div style="position:absolute;top:373.5px;line-height:15px;height:15px;font-size:9.5px;color:#ffd0e0;font-family:'Liberation Sans',sans-serif;white-space:pre;left:1901.0px;transform:translateX(-50%);">-60</div>
<div style="position:absolute;left:1886px;top:406.25px;width:28px;height:18px;border-radius:5px;background:rgba(0,0,0,0.33)"></div>
<div style="position:absolute;top:407.8px;line-height:15px;height:15px;font-size:9.5px;color:#ff9a9a;font-family:'Liberation Sans',sans-serif;white-space:pre;left:1901.0px;transform:translateX(-50%);">-70</div>
<div style="position:absolute;left:1886px;top:440.5px;width:28px;height:18px;border-radius:5px;background:rgba(0,0,0,0.33)"></div>
<div style="position:absolute;top:442.0px;line-height:15px;height:15px;font-size:9.5px;color:#e8a070;font-family:'Liberation Sans',sans-serif;white-space:pre;left:1901.0px;transform:translateX(-50%);">-80</div>
<div style="position:absolute;left:1886px;top:474.75px;width:28px;height:18px;border-radius:5px;background:rgba(0,0,0,0.33)"></div>
<div style="position:absolute;top:476.2px;line-height:15px;height:15px;font-size:9.5px;color:#d8c060;font-family:'Liberation Sans',sans-serif;white-space:pre;left:1901.0px;transform:translateX(-50%);">-90</div>
<div style="position:absolute;left:1886px;top:509.0px;width:28px;height:18px;border-radius:5px;background:rgba(0,0,0,0.33)"></div>
<div style="position:absolute;top:510.5px;line-height:15px;height:15px;font-size:9.5px;color:#a0e070;font-family:'Liberation Sans',sans-serif;white-space:pre;left:1901.0px;transform:translateX(-50%);">-100</div>
<div style="position:absolute;left:1886px;top:543.25px;width:28px;height:18px;border-radius:5px;background:rgba(0,0,0,0.33)"></div>
<div style="position:absolute;top:544.8px;line-height:15px;height:15px;font-size:9.5px;color:#60e090;font-family:'Liberation Sans',sans-serif;white-space:pre;left:1901.0px;transform:translateX(-50%);">-110</div>
<div style="position:absolute;left:1886px;top:577.5px;width:28px;height:18px;border-radius:5px;background:rgba(0,0,0,0.33)"></div>
<div style="position:absolute;top:579.0px;line-height:15px;height:15px;font-size:9.5px;color:#60d0d0;font-family:'Liberation Sans',sans-serif;white-space:pre;left:1901.0px;transform:translateX(-50%);">-120</div>
<div style="position:absolute;left:1886px;top:611.75px;width:28px;height:18px;border-radius:5px;background:rgba(0,0,0,0.33)"></div>
<div style="position:absolute;top:613.2px;line-height:15px;height:15px;font-size:9.5px;color:#8090f0;font-family:'Liberation Sans',sans-serif;white-space:pre;left:1901.0px;transform:translateX(-50%);">-130</div>
<div style="position:absolute;left:1886px;top:646.0px;width:28px;height:18px;border-radius:5px;background:rgba(0,0,0,0.33)"></div>
<div style="position:absolute;top:647.5px;line-height:15px;height:15px;font-size:9.5px;color:#8080d0;font-family:'Liberation Sans',sans-serif;white-space:pre;left:1901.0px;transform:translateX(-50%);">-140</div>
<div style="position:absolute;top:681.8px;line-height:15px;height:15px;font-size:9.5px;color:#a0a0a0;font-family:'Liberation Sans',sans-serif;white-space:pre;left:1901.0px;transform:translateX(-50%);">-150</div>
<div style="position:absolute;left:332px;top:729px;width:1586px;height:20px;background:linear-gradient(#c4d1e1,#d0dbe8 45%,#e1e8f1);"></div>
<div style="position:absolute;top:730.0px;line-height:18px;height:18px;font-size:11.5px;color:#111;font-family:'Liberation Sans',sans-serif;white-space:pre;left:336px;">Signal History</div>
<svg style="position:absolute;left:1880px;top:729px;" width="40" height="19"><path d="M8.500 8 H17.5 L13 13 Z" fill="#111"/><path d="M26.500 6 L33.5 13 M33.5 6 L26.5 13" stroke="#111" stroke-width="1.6"/></svg>
<div style="position:absolute;left:332px;top:749px;width:1586px;height:275px;background:#000;"></div>
<svg style="position:absolute;left:0px;top:0px;" width="1920" height="1024"><defs><linearGradient id="hbg" x1="0" x2="0" y1="0" y2="1"><stop offset="0" stop-color="#111111"/><stop offset="0.6" stop-color="#080808"/><stop offset="1" stop-color="#040404"/></linearGradient><linearGradient id="hf" gradientUnits="userSpaceOnUse" x1="0" x2="0" y1="930" y2="990"><stop offset="0" stop-color="#2a5aa8"/><stop offset="0.45" stop-color="#121c78"/><stop offset="1" stop-color="#0a0a38"/></linearGradient></defs><rect x="384.5" y="766.5" width="1490.0" height="240.0" fill="url(#hbg)"/><polygon points="486.0,1006.5 486.5,985.2 486.5,976.4 487.2,974.9 488.0,977.5 488.8,973.8 489.5,974.4 490.2,978.6 491.0,974.1 491.8,976.5 492.5,969.4 493.2,976.0 494.0,979.0 494.8,979.0 495.5,973.5 496.2,974.0 497.0,977.9 497.8,979.8 498.5,980.9 499.2,979.3 500.0,973.2 500.8,977.2 501.5,976.6 502.2,971.6 503.0,978.2 503.8,982.1 504.5,983.5 505.2,977.7 506.0,976.4 506.8,980.3 507.5,985.1 508.2,968.1 509.0,980.2 509.8,986.9 510.5,982.8 511.2,979.9 512.0,982.1 512.8,979.8 513.5,982.1 514.2,973.4 515.0,978.9 515.8,977.3 516.5,978.0 517.2,981.1 518.0,973.0 518.8,982.6 519.5,975.0 520.2,979.4 521.0,979.9 521.8,977.0 522.5,974.0 523.2,976.4 524.0,978.0 524.8,979.3 525.5,979.9 526.2,977.7 527.0,972.2 527.8,983.1 528.5,978.6 529.2,971.6 530.0,976.6 530.8,978.2 531.5,975.8 532.2,981.0 533.0,977.1 533.8,980.4 534.5,978.4 535.2,978.9 536.0,974.9 536.8,978.0 537.5,980.3 538.2,979.6 539.0,977.3 539.8,979.3 540.5,975.6 541.2,978.0 542.0,979.3 542.8,979.7 543.5,980.4 544.2,978.4 545.0,981.6 545.8,975.5 546.5,979.8 547.2,983.9 548.0,975.5 548.8,978.3 549.5,976.5 550.2,974.7 551.0,978.8 551.8,977.8 552.5,976.6 553.2,979.8 554.0,977.3 554.8,978.9 555.5,979.2 556.2,985.6 557.0,981.9 557.8,979.1 558.5,976.0 559.2,978.9 560.0,977.6 560.8,977.8 561.5,978.3 562.2,973.9 563.0,981.6 563.8,977.3 564.5,978.4 565.2,977.6 566.0,979.9 566.8,983.3 567.5,978.3 568.2,975.8 569.0,977.4 569.8,978.8 570.5,979.7 571.2,984.1 572.0,978.3 572.8,982.5 573.5,979.3 574.2,980.4 575.0,982.3 575.8,981.8 576.5,976.1 577.2,978.4 578.0,976.4 578.8,975.8 579.5,974.3 580.2,980.0 581.0,974.4 581.8,979.6 582.5,981.1 583.2,981.7 584.0,979.4 584.8,976.6 585.5,979.3 586.2,980.1 587.0,983.2 587.8,974.0 588.5,980.1 589.2,980.0 590.0,978.7 590.8,976.7 591.5,976.1 592.2,977.6 593.0,974.9 593.8,977.6 594.5,975.1 595.2,978.3 596.0,984.0 596.8,976.8 597.5,977.2 598.2,983.4 599.0,977.4 599.8,975.9 600.5,976.8 601.2,983.5 602.0,974.9 602.8,978.1 603.5,978.6 604.2,983.1 605.0,977.0 605.8,981.9 606.5,977.7 607.2,980.8 608.0,979.6 608.8,974.8 609.5,975.5 610.2,977.1 611.0,978.6 611.8,977.5 612.5,980.2 613.2,982.1 614.0,975.4 614.8,979.9 615.5,979.0 616.2,981.8 617.0,978.3 617.8,977.7 618.5,979.7 619.2,979.7 620.0,975.7 620.8,974.0 621.5,979.3 622.2,980.2 623.0,984.3 623.8,979.7 624.5,972.5 625.2,974.8 626.0,981.3 626.8,980.9 627.5,975.2 628.2,973.1 629.0,975.9 629.8,969.2 630.5,978.8 631.2,984.1 632.0,979.9 632.8,977.5 633.5,973.0 634.2,977.4 635.0,974.5 635.8,977.8 636.5,975.5 637.2,979.9 638.0,977.0 638.8,977.1 639.5,977.9 640.2,983.0 641.0,980.9 641.8,977.4 642.5,981.4 643.2,979.2 644.0,982.7 644.8,981.0 645.5,975.8 646.2,970.9 647.0,981.6 647.8,980.2 648.5,977.9 649.2,974.1 650.0,976.0 650.8,977.6 651.5,981.1 652.2,977.8 653.0,980.4 653.8,983.6 654.5,978.5 655.2,973.7 656.0,976.8 656.8,973.5 657.5,979.9 658.2,974.9 659.0,978.9 659.8,974.4 660.5,977.6 661.2,975.4 662.0,979.4 662.8,980.8 663.5,978.0 664.2,977.1 665.0,979.7 665.8,977.8 666.5,974.2 667.2,977.9 668.0,985.5 668.8,978.5 669.5,980.2 670.2,980.4 671.0,980.5 671.8,980.8 672.5,978.4 673.2,979.0 674.0,977.8 674.8,974.9 675.5,980.1 676.2,978.4 677.0,979.4 677.8,976.8 678.5,976.3 679.2,975.4 680.0,975.9 680.8,976.3 681.5,978.4 682.2,980.3 683.0,976.7 683.8,977.5 684.5,977.5 685.2,975.1 686.0,978.7 686.8,978.8 687.5,976.3 688.2,979.8 689.0,984.2 689.8,978.4 690.5,975.9 691.2,972.8 692.0,977.8 692.8,982.8 693.5,980.7 694.2,975.1 695.0,978.2 695.8,979.3 696.5,980.7 697.2,974.2 698.0,979.0 698.8,977.3 699.5,978.2 700.2,975.9 701.0,979.9 701.8,982.1 702.5,979.7 703.2,977.1 704.0,979.3 704.8,977.0 705.5,978.3 706.2,977.8 707.0,980.6 707.8,975.0 708.5,982.7 709.2,977.1 710.0,979.2 710.8,974.9 711.5,980.9 712.2,978.2 713.0,976.0 713.8,975.2 714.5,973.0 715.2,979.7 716.0,979.7 716.8,976.1 717.5,981.5 718.2,976.2 719.0,977.5 719.8,982.1 720.5,974.5 721.2,982.6 722.0,982.7 722.8,978.5 723.5,980.1 724.2,980.9 725.0,976.6 725.8,971.9 726.5,982.9 727.2,977.2 728.0,976.0 728.8,976.4 729.5,979.2 730.2,981.2 731.0,976.6 731.8,976.8 732.5,976.4 733.2,978.8 734.0,980.1 734.8,983.5 735.5,976.2 736.2,979.5 737.0,973.4 737.8,973.8 738.5,971.1 739.2,976.9 740.0,981.6 740.8,980.0 741.5,979.7 742.2,979.6 743.0,976.4 743.8,979.5 744.5,982.3 745.2,975.6 746.0,978.8 746.8,980.5 747.5,983.6 748.2,976.2 749.0,972.5 749.8,979.8 750.5,978.1 751.2,980.2 752.0,974.1 752.8,982.6 753.5,984.4 754.2,978.0 755.0,974.9 755.8,975.1 756.5,979.0 757.2,977.1 758.0,972.3 758.8,975.9 759.5,980.8 760.2,979.7 761.0,982.7 761.8,976.8 762.5,978.3 763.2,980.4 764.0,977.0 764.8,976.1 765.5,980.5 766.2,975.8 767.0,977.4 767.8,978.1 768.5,979.7 769.2,976.6 770.0,983.1 770.8,977.7 771.5,981.9 772.2,981.5 773.0,982.7 773.8,983.1 774.5,975.2 775.2,979.0 776.0,978.8 776.8,980.6 777.5,980.5 778.2,978.9 779.0,980.9 779.8,981.5 780.5,976.7 781.2,978.9 782.0,981.9 782.8,978.7 783.5,978.3 784.2,975.6 785.0,979.5 785.8,980.4 786.5,976.2 787.2,978.3 788.0,982.6 788.8,986.0 789.5,976.5 790.2,981.0 791.0,976.1 791.8,977.5 792.5,979.3 793.2,978.1 794.0,978.3 794.8,976.8 795.5,977.8 796.2,973.9 797.0,979.2 797.8,982.5 798.5,976.7 799.2,981.0 800.0,977.1 800.8,976.1 801.5,976.9 802.2,978.1 803.0,980.3 803.8,980.8 804.5,980.7 805.2,975.1 806.0,977.9 806.8,977.3 807.5,981.4 808.2,975.8 809.0,979.6 809.8,978.3 810.5,978.4 811.2,985.9 812.0,980.5 812.8,976.0 813.5,981.7 814.2,976.1 815.0,974.8 815.8,981.7 816.5,973.9 817.2,976.9 818.0,980.6 818.8,978.1 819.5,977.3 820.2,984.6 821.0,982.1 821.8,973.0 822.5,981.6 823.2,974.8 824.0,985.0 824.8,976.2 825.5,981.5 826.2,983.6 827.0,976.7 827.8,985.5 828.5,978.8 829.2,973.7 830.0,976.8 830.8,979.3 831.5,975.3 832.2,979.2 833.0,978.5 833.8,980.0 834.5,971.6 835.2,979.9 836.0,978.2 836.8,976.3 837.5,978.6 838.2,979.4 839.0,978.8 839.8,982.0 840.5,975.5 841.2,976.5 842.0,974.8 842.8,980.4 843.5,981.2 844.2,978.2 845.0,975.4 845.8,977.9 846.5,975.1 847.2,979.2 848.0,979.7 848.8,982.6 849.5,979.0 850.2,974.7 851.0,980.0 851.8,974.4 852.5,978.1 853.2,977.8 854.0,981.0 854.8,976.4 855.5,978.7 856.2,974.3 857.0,980.3 857.8,976.0 858.5,982.3 859.2,978.1 860.0,979.5 860.8,980.1 861.5,980.8 862.2,981.6 863.0,981.5 863.8,979.1 864.5,977.2 865.2,976.8 866.0,979.6 866.8,980.1 867.5,976.5 868.2,972.3 869.0,977.5 869.8,979.6 870.5,976.3 871.2,979.1 872.0,977.8 872.8,980.1 873.5,983.8 874.2,980.2 875.0,980.8 875.8,981.2 876.5,971.7 877.2,977.0 878.0,978.0 878.8,980.0 879.5,983.6 880.2,979.3 881.0,979.4 881.8,979.7 882.5,975.5 883.2,977.7 884.0,980.4 884.8,977.5 885.5,976.5 886.2,978.3 887.0,976.2 887.8,977.5 888.5,976.6 889.2,974.7 890.0,983.4 890.8,978.0 891.5,976.8 892.2,982.5 893.0,979.3 893.8,977.7 894.5,977.9 895.2,983.8 896.0,986.0 896.8,977.2 897.5,983.0 898.2,980.7 899.0,981.4 899.8,975.6 900.5,968.8 901.2,978.0 902.0,978.4 902.8,980.1 903.5,977.4 904.2,974.4 905.0,980.6 905.8,980.3 906.5,977.4 907.2,978.4 908.0,979.6 908.8,979.4 909.5,977.0 910.2,974.0 911.0,982.1 911.8,980.1 912.5,979.9 913.2,975.0 914.0,978.2 914.8,979.7 915.5,981.9 916.2,975.9 917.0,980.7 917.8,977.8 918.5,977.1 919.2,978.7 920.0,979.5 920.8,978.2 921.5,981.0 922.2,975.0 923.0,977.0 923.8,980.3 924.5,974.7 925.2,982.2 926.0,976.5 926.8,975.7 927.5,979.2 928.2,982.4 929.0,979.7 929.8,978.1 930.5,978.7 931.2,979.9 932.0,979.8 932.8,978.0 933.5,973.9 934.2,972.6 935.0,979.1 935.8,975.9 936.5,976.2 937.2,977.4 938.0,979.9 938.8,975.7 939.5,982.8 940.2,976.6 941.0,979.7 941.8,980.3 942.5,981.0 943.2,980.8 944.0,976.2 944.8,986.3 945.5,980.9 946.2,977.6 947.0,973.8 947.8,979.9 948.5,977.3 949.2,974.6 950.0,969.6 950.8,978.3 951.5,979.7 952.2,978.2 953.0,983.2 953.8,982.5 954.5,977.6 955.2,982.1 956.0,983.3 956.8,983.0 957.5,968.5 958.2,978.7 959.0,981.5 959.8,978.9 960.5,977.3 961.2,977.1 962.0,974.0 962.8,973.1 963.5,983.4 964.2,973.5 965.0,976.8 965.8,980.7 966.5,980.1 967.2,976.5 968.0,975.0 968.8,979.4 969.5,980.9 970.2,967.1 971.0,975.7 971.8,975.6 972.5,978.8 973.2,976.1 974.0,977.2 974.8,976.9 975.5,976.4 976.2,982.3 977.0,974.8 977.8,980.5 978.5,979.8 979.2,978.7 980.0,981.5 980.8,978.8 981.5,977.9 982.2,978.2 983.0,974.3 983.8,977.6 984.5,981.1 985.2,971.3 986.0,984.0 986.8,975.9 987.5,981.1 988.2,980.9 989.0,976.8 989.8,977.4 990.5,974.8 991.2,976.3 992.0,983.5 992.8,974.4 993.5,982.8 994.2,976.2 995.0,982.1 995.8,977.4 996.5,977.2 997.2,978.6 998.0,979.6 998.8,978.1 999.5,973.9 1000.2,978.5 1001.0,979.7 1001.8,979.4 1002.5,979.7 1003.2,974.7 1004.0,978.2 1004.8,978.6 1005.5,975.5 1006.2,980.7 1007.0,975.2 1007.8,982.7 1008.5,973.3 1009.2,981.1 1010.0,980.5 1010.8,980.0 1011.5,974.6 1012.2,982.8 1013.0,979.1 1013.8,977.5 1014.5,980.0 1015.2,973.9 1016.0,974.4 1016.8,980.7 1017.5,982.1 1018.2,972.9 1019.0,978.2 1019.8,979.0 1020.5,975.5 1021.2,978.9 1022.0,977.2 1022.8,981.0 1023.5,978.6 1024.2,976.2 1025.0,977.3 1025.8,980.7 1026.5,978.1 1027.2,972.7 1028.0,977.4 1028.8,978.5 1029.5,979.3 1030.2,980.9 1031.0,977.2 1031.8,979.4 1032.5,977.6 1033.2,978.9 1034.0,978.3 1034.8,981.5 1035.5,977.6 1036.2,977.9 1037.0,976.0 1037.8,976.6 1038.5,982.2 1039.2,975.4 1040.0,987.1 1040.8,980.5 1041.5,977.6 1042.2,969.0 1043.0,979.4 1043.8,975.2 1044.5,978.3 1045.2,980.1 1046.0,980.2 1046.8,978.1 1047.5,976.5 1048.2,966.0 1049.0,966.0 1049.8,966.0 1050.5,971.5 1051.2,979.3 1052.0,975.3 1052.8,976.5 1053.5,984.6 1054.2,980.7 1055.0,972.2 1055.8,980.1 1056.5,971.7 1057.2,980.4 1058.0,978.8 1058.8,979.7 1059.5,980.8 1060.2,979.7 1061.0,974.7 1061.8,981.4 1062.5,979.1 1063.2,979.7 1064.0,978.3 1064.8,979.0 1065.5,978.7 1066.2,980.4 1067.0,976.8 1067.8,978.5 1068.5,980.1 1069.2,977.9 1070.0,981.0 1070.8,977.6 1071.5,977.1 1072.2,980.6 1073.0,983.2 1073.8,977.8 1074.5,981.1 1075.2,977.1 1076.0,977.7 1076.8,980.1 1077.5,981.5 1078.2,977.6 1079.0,976.9 1079.8,979.4 1080.5,975.3 1081.2,971.7 1082.0,978.1 1082.8,980.1 1083.5,982.8 1084.2,974.9 1085.0,977.0 1085.8,981.6 1086.5,976.4 1087.2,979.1 1088.0,978.9 1088.8,982.6 1089.5,974.8 1090.2,975.4 1091.0,980.9 1091.8,978.8 1092.5,979.7 1093.2,982.1 1094.0,977.0 1094.8,973.3 1095.5,983.6 1096.2,977.2 1097.0,975.6 1097.8,981.8 1098.5,976.2 1099.2,981.2 1100.0,974.5 1100.8,978.2 1101.5,978.3 1102.2,985.0 1103.0,977.0 1103.8,977.9 1104.5,976.4 1105.2,984.0 1106.0,979.1 1106.8,978.7 1107.5,976.2 1108.2,977.7 1109.0,978.0 1109.8,977.5 1110.5,982.5 1111.2,977.1 1112.0,977.6 1112.8,981.6 1113.5,978.9 1114.2,976.1 1115.0,978.9 1115.8,976.9 1116.5,978.9 1117.2,979.9 1118.0,982.2 1118.8,979.4 1119.5,978.9 1120.2,980.1 1121.0,977.1 1121.8,974.9 1122.5,980.1 1123.2,974.5 1124.0,979.6 1124.8,975.6 1125.5,980.6 1126.2,979.1 1127.0,986.2 1127.8,981.3 1128.5,974.6 1129.2,976.8 1130.0,983.8 1130.8,984.6 1131.5,975.5 1132.2,979.9 1133.0,978.3 1133.8,977.5 1134.5,980.4 1135.2,980.6 1136.0,981.1 1136.8,980.4 1137.5,983.4 1138.2,980.9 1139.0,980.6 1139.8,976.0 1140.5,972.8 1141.2,981.4 1142.0,978.0 1142.8,978.3 1143.5,976.5 1144.2,981.6 1145.0,978.7 1145.8,976.5 1146.5,972.4 1147.2,973.4 1148.0,980.1 1148.8,982.7 1149.5,977.5 1150.2,975.4 1151.0,978.2 1151.8,978.3 1152.5,979.2 1153.2,979.4 1154.0,976.2 1154.8,979.8 1155.5,978.6 1156.2,977.5 1157.0,979.3 1157.8,978.7 1158.5,982.1 1159.2,979.3 1160.0,978.5 1160.8,980.7 1161.5,984.2 1162.2,977.7 1163.0,980.0 1163.8,976.8 1164.5,976.3 1165.2,982.1 1166.0,979.3 1166.8,974.4 1167.5,980.2 1168.2,977.9 1169.0,974.6 1169.8,979.6 1170.5,981.1 1171.2,976.2 1172.0,977.7 1172.8,981.3 1173.5,977.8 1174.2,983.6 1175.0,976.9 1175.8,979.5 1176.5,979.3 1177.2,979.6 1178.0,977.6 1178.8,983.5 1179.5,978.4 1180.2,975.9 1181.0,978.8 1181.8,975.0 1182.5,979.8 1183.2,978.1 1184.0,979.7 1184.8,978.3 1185.5,974.3 1186.2,977.3 1187.0,980.9 1187.8,979.7 1188.5,979.4 1189.2,980.4 1190.0,974.4 1190.8,980.4 1191.5,977.3 1192.2,977.3 1193.0,983.5 1193.8,978.0 1194.5,978.6 1195.2,973.5 1196.0,967.2 1196.8,977.5 1197.5,976.3 1198.2,980.0 1199.0,981.8 1199.8,975.1 1200.5,979.9 1201.2,977.8 1202.0,985.6 1202.8,975.3 1203.5,979.6 1204.2,978.9 1205.0,981.6 1205.8,978.4 1206.5,973.5 1207.2,976.1 1208.0,975.8 1208.8,977.0 1209.5,980.4 1210.2,978.6 1211.0,980.4 1211.8,981.8 1212.5,970.8 1213.2,982.6 1214.0,979.7 1214.8,975.9 1215.5,979.5 1216.2,979.5 1217.0,981.0 1217.8,980.9 1218.5,981.2 1219.2,978.4 1220.0,977.9 1220.8,973.5 1221.5,974.7 1222.2,975.2 1223.0,984.2 1223.8,973.8 1224.5,977.8 1225.2,979.9 1226.0,978.2 1226.8,976.6 1227.5,978.7 1228.2,976.7 1229.0,976.0 1229.8,982.2 1230.5,975.8 1231.2,979.4 1232.0,982.3 1232.8,984.3 1233.5,977.9 1234.2,979.5 1235.0,974.0 1235.8,979.5 1236.5,980.0 1237.2,980.8 1238.0,983.2 1238.8,977.2 1239.5,978.9 1240.2,969.8 1241.0,980.6 1241.8,979.1 1242.5,983.0 1243.2,976.8 1244.0,976.5 1244.8,979.4 1245.5,980.7 1246.2,980.7 1247.0,977.3 1247.8,979.0 1248.5,979.0 1249.2,981.5 1250.0,980.8 1250.8,978.3 1251.5,976.6 1252.2,978.2 1253.0,982.2 1253.8,980.9 1254.5,978.1 1255.2,981.7 1256.0,978.9 1256.8,976.3 1257.5,975.4 1258.2,977.5 1259.0,982.6 1259.8,979.5 1260.5,977.0 1261.2,981.5 1262.0,976.2 1262.8,978.9 1263.5,980.8 1264.2,984.0 1265.0,976.2 1265.8,977.9 1266.5,975.8 1267.2,980.7 1268.0,975.9 1268.8,978.1 1269.5,979.3 1270.2,976.4 1271.0,981.2 1271.8,975.6 1272.5,977.5 1273.2,982.7 1274.0,977.4 1274.8,979.5 1275.5,976.9 1276.2,982.9 1277.0,979.5 1277.8,984.2 1278.5,975.8 1279.2,977.0 1280.0,979.8 1280.8,976.6 1281.5,980.6 1282.2,978.6 1283.0,979.7 1283.8,976.8 1284.5,976.9 1285.2,984.3 1286.0,974.0 1286.8,978.5 1287.5,974.4 1288.2,981.3 1289.0,980.0 1289.8,977.6 1290.5,981.8 1291.2,978.4 1292.0,977.6 1292.8,977.7 1293.5,981.4 1294.2,979.8 1295.0,981.5 1295.8,976.3 1296.5,982.7 1297.2,977.3 1298.0,975.0 1298.8,978.4 1299.5,981.6 1300.2,979.3 1301.0,981.2 1301.8,975.7 1302.5,977.0 1303.2,977.7 1304.0,977.7 1304.8,982.6 1305.5,983.3 1306.2,975.7 1307.0,982.4 1307.8,975.1 1308.5,975.2 1309.2,980.9 1310.0,983.1 1310.8,977.7 1311.5,976.1 1312.2,975.7 1313.0,977.6 1313.8,975.0 1314.5,981.2 1315.2,980.6 1316.0,971.4 1316.8,978.0 1317.5,979.3 1318.2,983.0 1319.0,974.2 1319.8,977.4 1320.5,984.5 1321.2,972.9 1322.0,979.4 1322.8,976.8 1323.5,981.9 1324.2,983.1 1325.0,981.8 1325.8,978.5 1326.5,979.0 1327.2,970.5 1328.0,975.0 1328.8,979.2 1329.5,976.9 1330.2,978.8 1331.0,980.3 1331.8,978.0 1332.5,974.0 1333.2,973.2 1334.0,979.4 1334.8,980.1 1335.5,973.8 1336.2,986.7 1337.0,974.4 1337.8,976.1 1338.5,978.0 1339.2,978.4 1340.0,979.4 1340.8,971.4 1341.5,977.4 1342.2,979.0 1343.0,981.2 1343.8,977.3 1344.5,978.3 1345.2,981.6 1346.0,983.7 1346.8,980.1 1347.5,986.0 1348.2,976.2 1349.0,981.1 1349.8,982.7 1350.5,979.5 1351.2,974.0 1352.0,979.7 1352.8,981.6 1353.5,978.6 1354.2,977.9 1355.0,976.5 1355.8,971.2 1356.5,976.2 1357.2,976.0 1358.0,978.0 1358.8,974.7 1359.5,975.4 1360.2,973.1 1361.0,971.3 1361.8,969.7 1362.5,981.3 1363.2,973.9 1364.0,973.2 1364.8,973.2 1365.5,978.8 1366.2,977.9 1367.0,978.1 1367.8,975.9 1368.5,973.1 1369.2,978.2 1370.0,979.6 1370.8,979.2 1371.5,978.1 1372.2,978.2 1373.0,972.4 1373.8,984.6 1374.5,976.9 1375.2,980.6 1376.0,974.6 1376.8,977.4 1377.5,978.5 1378.2,979.5 1379.0,981.3 1379.8,974.6 1380.5,980.7 1381.2,977.1 1382.0,982.3 1382.8,975.6 1383.5,977.0 1384.2,976.5 1385.0,975.1 1385.8,978.5 1386.5,980.5 1387.2,978.0 1388.0,977.5 1388.8,973.2 1389.5,982.7 1390.2,974.4 1391.0,978.4 1391.8,975.4 1392.5,977.4 1393.2,979.4 1394.0,981.8 1394.8,981.2 1395.5,979.7 1396.2,975.8 1397.0,985.2 1397.8,976.2 1398.5,981.3 1399.2,977.1 1400.0,981.3 1400.8,977.8 1401.5,979.1 1402.2,968.3 1403.0,976.2 1403.8,978.3 1404.5,979.8 1405.2,980.0 1406.0,979.1 1406.8,975.2 1407.5,976.9 1408.2,983.0 1409.0,977.6 1409.8,979.2 1410.5,981.4 1411.2,975.9 1412.0,976.6 1412.8,984.5 1413.5,980.6 1414.2,984.1 1415.0,977.1 1415.8,976.1 1416.5,978.7 1417.2,979.0 1418.0,981.4 1418.8,975.8 1419.5,980.1 1420.2,982.3 1421.0,978.0 1421.8,977.1 1422.5,975.5 1423.2,976.9 1424.0,973.5 1424.8,974.7 1425.5,979.1 1426.2,973.7 1427.0,973.3 1427.8,981.2 1428.5,974.1 1429.2,982.6 1430.0,976.5 1430.8,978.6 1431.5,978.4 1432.2,976.9 1433.0,980.0 1433.8,979.9 1434.5,982.2 1435.2,976.9 1436.0,978.2 1436.8,977.4 1437.5,978.6 1438.2,978.3 1439.0,979.8 1439.8,979.8 1440.5,976.9 1441.2,977.9 1442.0,978.8 1442.8,975.4 1443.5,976.7 1444.2,981.6 1445.0,975.0 1445.8,980.5 1446.5,975.5 1447.2,979.1 1448.0,980.6 1448.8,976.9 1449.5,975.2 1450.2,977.4 1451.0,974.0 1451.8,973.6 1452.5,975.1 1453.2,977.6 1454.0,973.7 1454.8,975.5 1455.5,975.5 1456.2,975.4 1457.0,972.8 1457.8,969.9 1458.5,979.0 1459.2,982.5 1460.0,982.8 1460.8,966.9 1461.5,981.6 1462.2,963.8 1463.0,976.1 1463.8,964.3 1464.5,968.5 1465.2,966.9 1466.0,969.2 1466.8,977.6 1467.5,978.3 1468.2,973.3 1469.0,977.8 1469.8,977.8 1470.5,979.3 1471.2,977.8 1472.0,980.5 1472.8,980.4 1473.5,980.0 1474.2,973.7 1475.0,976.9 1475.8,978.3 1476.5,980.5 1477.2,978.1 1478.0,975.4 1478.8,980.1 1479.5,980.4 1480.2,978.5 1481.0,979.6 1481.8,964.1 1482.5,976.8 1483.2,978.7 1484.0,977.3 1484.8,979.4 1485.5,983.3 1486.2,979.1 1487.0,971.3 1487.8,966.8 1488.5,962.7 1489.2,957.7 1490.0,957.7 1490.8,956.1 1491.5,954.1 1492.2,954.3 1493.0,954.1 1493.8,954.2 1494.5,954.8 1495.2,951.9 1496.0,949.2 1496.8,945.9 1497.5,944.6 1498.2,944.3 1499.0,943.1 1499.8,942.5 1500.5,941.8 1501.2,940.1 1502.0,940.7 1502.8,938.8 1503.5,938.1 1504.2,937.5 1505.0,937.2 1505.8,936.5 1506.5,940.0 1507.2,940.9 1508.0,944.0 1508.8,945.6 1509.5,948.0 1510.2,951.8 1511.0,953.7 1511.8,953.9 1512.5,956.1 1513.2,959.6 1514.0,961.5 1514.8,964.5 1515.5,968.5 1516.2,972.7 1517.0,976.9 1517.8,973.6 1518.5,971.1 1519.2,965.8 1520.0,960.3 1520.8,957.8 1521.5,955.9 1522.2,954.2 1523.0,955.7 1523.8,956.0 1524.5,955.9 1525.2,957.2 1526.0,955.1 1526.8,954.3 1527.5,949.0 1528.2,945.7 1529.0,943.6 1529.8,939.8 1530.5,938.0 1531.2,941.9 1532.0,944.6 1532.8,975.1 1533.5,983.6 1534.2,982.7 1535.0,978.2 1535.8,980.4 1536.5,976.0 1537.2,977.2 1538.0,979.3 1538.8,980.0 1539.5,973.1 1540.2,977.9 1541.0,976.3 1541.8,964.1 1542.5,974.7 1543.2,976.9 1544.0,956.9 1544.8,960.7 1545.5,979.3 1546.2,954.3 1547.0,970.9 1547.8,978.7 1548.5,955.5 1549.2,964.1 1550.0,974.6 1550.8,945.8 1551.5,965.8 1552.2,972.5 1553.0,941.9 1553.8,946.3 1554.5,979.8 1555.2,931.5 1556.0,937.9 1556.8,974.1 1557.5,929.7 1558.2,937.6 1559.0,972.9 1559.8,931.2 1560.5,959.5 1561.2,975.8 1562.0,945.7 1562.8,959.5 1563.5,974.5 1564.2,943.7 1565.0,961.1 1565.8,975.1 1566.5,941.3 1567.2,949.5 1568.0,978.9 1568.8,938.9 1569.5,958.1 1570.2,974.7 1571.0,937.0 1571.8,951.4 1572.5,976.3 1573.2,932.7 1574.0,944.9 1574.8,976.5 1575.5,932.4 1576.2,947.4 1577.0,974.0 1577.8,948.2 1578.5,971.4 1579.2,975.1 1580.0,959.8 1580.8,978.3 1581.5,966.7 1582.2,951.9 1583.0,971.9 1583.8,973.3 1584.5,948.0 1585.2,957.7 1586.0,972.5 1586.8,944.7 1587.5,951.6 1588.2,974.7 1589.0,942.0 1589.8,954.9 1590.5,973.4 1591.2,936.4 1592.0,950.2 1592.8,974.8 1593.5,936.7 1594.2,950.8 1595.0,979.1 1595.8,947.7 1596.5,962.9 1597.2,978.2 1598.0,957.1 1598.8,976.1 1599.5,975.8 1600.2,974.0 1601.0,975.9 1601.8,978.8 1602.5,970.8 1603.2,983.0 1604.0,982.3 1604.8,979.3 1605.5,978.7 1606.2,980.6 1607.0,972.5 1607.8,978.3 1608.5,980.8 1609.2,979.2 1610.0,978.6 1610.8,978.8 1611.5,977.4 1612.2,978.5 1613.0,975.0 1613.8,974.3 1614.5,981.0 1615.2,982.8 1616.0,977.0 1616.8,977.1 1617.5,980.7 1618.2,971.1 1619.0,977.3 1619.8,972.1 1620.5,971.8 1621.2,981.3 1622.0,978.3 1622.8,977.6 1623.5,979.0 1624.2,978.5 1625.0,976.7 1625.8,979.6 1626.5,979.8 1627.2,978.8 1628.0,979.6 1628.8,982.7 1629.5,965.1 1630.2,977.0 1631.0,974.8 1631.8,979.9 1632.5,980.6 1633.2,980.9 1634.0,975.3 1634.8,977.0 1635.5,976.0 1636.2,980.8 1637.0,977.1 1637.8,975.9 1638.5,978.8 1639.2,977.7 1640.0,976.6 1640.8,974.4 1641.5,980.7 1642.2,977.1 1643.0,978.9 1643.8,980.6 1644.5,979.6 1645.2,978.0 1646.0,979.4 1646.8,973.7 1647.5,978.0 1648.2,979.2 1649.0,979.0 1649.8,980.6 1650.5,976.8 1651.2,980.6 1652.0,984.1 1652.8,974.3 1653.5,978.7 1654.2,976.3 1655.0,973.6 1655.8,979.2 1656.5,977.9 1657.2,976.9 1658.0,973.5 1658.8,979.0 1659.5,980.4 1660.2,977.4 1661.0,980.2 1661.8,977.2 1662.5,970.9 1663.2,977.4 1664.0,980.2 1664.8,982.5 1665.5,975.0 1666.2,979.2 1667.0,978.4 1667.8,977.6 1668.5,979.7 1669.2,969.9 1670.0,976.0 1670.8,979.4 1671.5,976.8 1672.2,977.3 1673.0,980.9 1673.8,981.2 1674.5,979.5 1675.2,976.1 1676.0,980.5 1676.8,982.8 1677.5,975.9 1678.2,976.1 1679.0,979.3 1679.8,981.3 1680.5,979.0 1681.2,979.1 1682.0,975.8 1682.8,972.7 1683.5,977.3 1684.2,979.4 1685.0,967.2 1685.8,976.4 1686.5,978.1 1687.2,966.3 1688.0,978.8 1688.8,976.6 1689.5,981.3 1690.2,982.0 1691.0,980.2 1691.8,980.3 1692.5,978.8 1693.2,979.6 1694.0,980.2 1694.8,980.1 1695.5,981.8 1696.2,977.4 1697.0,981.9 1697.8,980.3 1698.5,968.9 1699.2,980.0 1700.0,974.0 1700.8,968.8 1701.5,980.7 1702.2,978.8 1703.0,976.8 1703.8,979.5 1704.5,981.3 1705.2,976.3 1706.0,981.5 1706.8,974.8 1707.5,975.7 1708.2,977.9 1709.0,984.5 1709.8,979.0 1710.5,982.4 1711.2,977.8 1712.0,978.0 1712.8,979.9 1713.5,975.1 1714.2,981.3 1715.0,982.4 1715.8,979.6 1716.5,980.7 1717.2,978.9 1718.0,982.5 1718.8,976.4 1719.5,979.0 1720.2,977.7 1721.0,981.4 1721.8,982.7 1722.5,980.6 1723.2,970.9 1724.0,973.7 1724.8,977.7 1725.5,975.5 1726.2,979.5 1727.0,977.4 1727.8,974.4 1728.5,984.6 1729.2,977.9 1730.0,977.2 1730.8,982.6 1731.5,978.3 1732.2,976.6 1733.0,977.8 1733.8,975.9 1734.5,977.1 1735.2,979.8 1736.0,983.7 1736.8,978.3 1737.5,981.5 1738.2,973.6 1739.0,978.2 1739.8,977.2 1740.5,979.9 1741.2,976.9 1742.0,976.2 1742.8,978.9 1743.5,972.2 1744.2,982.6 1745.0,975.8 1745.8,980.3 1746.5,977.8 1747.2,979.4 1748.0,978.3 1748.8,981.1 1749.5,971.0 1750.2,979.2 1751.0,980.1 1751.8,976.2 1752.5,980.8 1753.2,974.0 1754.0,980.3 1754.8,979.6 1755.5,976.6 1756.2,976.4 1757.0,976.1 1757.8,978.9 1758.5,971.2 1759.2,979.1 1760.0,979.4 1760.8,980.8 1761.5,976.0 1762.2,977.9 1763.0,984.6 1763.8,966.6 1764.5,976.0 1765.2,976.1 1766.0,977.6 1766.8,972.1 1767.5,976.1 1768.2,971.8 1769.0,978.3 1769.8,974.5 1770.5,975.3 1771.2,977.2 1772.0,975.8 1772.8,976.7 1773.5,978.3 1774.2,980.3 1775.0,980.4 1775.8,978.3 1776.5,981.5 1777.2,975.4 1778.0,976.7 1778.8,975.4 1779.5,975.2 1780.2,983.3 1781.0,980.5 1781.8,979.8 1782.5,978.5 1783.2,980.9 1784.0,976.2 1784.8,981.4 1785.5,980.9 1786.2,979.6 1787.0,982.5 1787.8,981.6 1788.5,977.2 1789.2,975.4 1790.0,976.3 1790.8,974.0 1791.5,982.7 1792.2,981.3 1793.0,977.7 1793.8,979.4 1794.5,980.0 1795.2,976.7 1796.0,978.7 1796.8,977.6 1797.5,972.9 1798.2,979.2 1799.0,973.7 1799.8,972.2 1800.5,978.5 1801.2,976.6 1802.0,980.2 1802.8,972.9 1803.5,979.7 1804.2,978.3 1805.0,981.0 1805.8,974.9 1806.5,983.1 1807.2,977.2 1808.0,974.2 1808.8,981.2 1809.5,981.8 1810.2,977.0 1811.0,979.0 1811.8,978.3 1812.5,979.7 1813.2,976.3 1814.0,977.0 1814.8,982.7 1815.5,979.1 1816.2,974.7 1817.0,979.7 1817.8,984.5 1818.5,975.3 1819.2,975.7 1820.0,977.8 1820.8,978.3 1821.5,975.6 1822.2,978.6 1823.0,978.1 1823.8,979.1 1824.5,980.6 1825.2,979.3 1826.0,981.7 1826.8,979.7 1827.5,977.2 1828.2,976.7 1829.0,977.7 1829.8,976.3 1830.5,977.2 1831.2,978.4 1832.0,976.9 1832.8,976.4 1833.5,981.4 1834.2,977.5 1835.0,975.2 1835.8,978.8 1836.5,981.6 1837.2,981.9 1838.0,976.9 1838.8,978.7 1839.5,976.4 1840.2,976.0 1841.0,978.2 1841.8,977.8 1842.5,979.2 1843.2,979.2 1844.0,978.9 1844.8,981.4 1845.5,980.2 1846.2,975.0 1847.0,974.7 1847.8,983.1 1848.5,980.6 1849.2,982.7 1850.0,973.8 1850.8,978.9 1851.5,976.5 1852.2,976.8 1853.0,974.2 1853.8,980.7 1854.5,979.8 1855.2,980.1 1856.0,980.5 1856.8,976.0 1857.5,978.2 1858.2,982.6 1859.0,980.8 1859.8,979.4 1860.5,980.0 1861.2,980.1 1862.0,983.2 1863.0,1006.5" fill="url(#hf)"/><rect x="486" y="985.2" width="1376.5" height="21.3" fill="#07071f"/><path d="M1874.5 766.5 V1006.5 M1864.5 766.5 V1006.5 M1854.5 766.5 V1006.5 M1844.5 766.5 V1006.5 M1834.5 766.5 V1006.5 M1824.5 766.5 V1006.5 M1814.5 766.5 V1006.5 M1804.5 766.5 V1006.5 M1794.5 766.5 V1006.5 M1784.5 766.5 V1006.5 M1774.5 766.5 V1006.5 M1764.5 766.5 V1006.5 M1754.5 766.5 V1006.5 M1744.5 766.5 V1006.5 M1734.5 766.5 V1006.5 M1724.5 766.5 V1006.5 M1714.5 766.5 V1006.5 M1704.5 766.5 V1006.5 M1694.5 766.5 V1006.5 M1684.5 766.5 V1006.5 M1674.5 766.5 V1006.5 M1664.5 766.5 V1006.5 M1654.5 766.5 V1006.5 M1644.5 766.5 V1006.5 M1634.5 766.5 V1006.5 M1624.5 766.5 V1006.5 M1614.5 766.5 V1006.5 M1604.5 766.5 V1006.5 M1594.5 766.5 V1006.5 M1584.5 766.5 V1006.5 M1574.5 766.5 V1006.5 M1564.5 766.5 V1006.5 M1554.5 766.5 V1006.5 M1544.5 766.5 V1006.5 M1534.5 766.5 V1006.5 M1524.5 766.5 V1006.5 M1514.5 766.5 V1006.5 M1504.5 766.5 V1006.5 M1494.5 766.5 V1006.5 M1484.5 766.5 V1006.5 M1474.5 766.5 V1006.5 M1464.5 766.5 V1006.5 M1454.5 766.5 V1006.5 M1444.5 766.5 V1006.5 M1434.5 766.5 V1006.5 M1424.5 766.5 V1006.5 M1414.5 766.5 V1006.5 M1404.5 766.5 V1006.5 M1394.5 766.5 V1006.5 M1384.5 766.5 V1006.5 M1374.5 766.5 V1006.5 M1364.5 766.5 V1006.5 M1354.5 766.5 V1006.5 M1344.5 766.5 V1006.5 M1334.5 766.5 V1006.5 M1324.5 766.5 V1006.5 M1314.5 766.5 V1006.5 M1304.5 766.5 V1006.5 M1294.5 766.5 V1006.5 M1284.5 766.5 V1006.5 M1274.5 766.5 V1006.5 M1264.5 766.5 V1006.5 M1254.5 766.5 V1006.5 M1244.5 766.5 V1006.5 M1234.5 766.5 V1006.5 M1224.5 766.5 V1006.5 M1214.5 766.5 V1006.5 M1204.5 766.5 V1006.5 M1194.5 766.5 V1006.5 M1184.5 766.5 V1006.5 M1174.5 766.5 V1006.5 M1164.5 766.5 V1006.5 M1154.5 766.5 V1006.5 M1144.5 766.5 V1006.5 M1134.5 766.5 V1006.5 M1124.5 766.5 V1006.5 M1114.5 766.5 V1006.5 M1104.5 766.5 V1006.5 M1094.5 766.5 V1006.5 M1084.5 766.5 V1006.5 M1074.5 766.5 V1006.5 M1064.5 766.5 V1006.5 M1054.5 766.5 V1006.5 M1044.5 766.5 V1006.5 M1034.5 766.5 V1006.5 M1024.5 766.5 V1006.5 M1014.5 766.5 V1006.5 M1004.5 766.5 V1006.5 M994.5 766.5 V1006.5 M984.5 766.5 V1006.5 M974.5 766.5 V1006.5 M964.5 766.5 V1006.5 M954.5 766.5 V1006.5 M944.5 766.5 V1006.5 M934.5 766.5 V1006.5 M924.5 766.5 V1006.5 M914.5 766.5 V1006.5 M904.5 766.5 V1006.5 M894.5 766.5 V1006.5 M884.5 766.5 V1006.5 M874.5 766.5 V1006.5 M864.5 766.5 V1006.5 M854.5 766.5 V1006.5 M844.5 766.5 V1006.5 M834.5 766.5 V1006.5 M824.5 766.5 V1006.5 M814.5 766.5 V1006.5 M804.5 766.5 V1006.5 M794.5 766.5 V1006.5 M784.5 766.5 V1006.5 M774.5 766.5 V1006.5 M764.5 766.5 V1006.5 M754.5 766.5 V1006.5 M744.5 766.5 V1006.5 M734.5 766.5 V1006.5 M724.5 766.5 V1006.5 M714.5 766.5 V1006.5 M704.5 766.5 V1006.5 M694.5 766.5 V1006.5 M684.5 766.5 V1006.5 M674.5 766.5 V1006.5 M664.5 766.5 V1006.5 M654.5 766.5 V1006.5 M644.5 766.5 V1006.5 M634.5 766.5 V1006.5 M624.5 766.5 V1006.5 M614.5 766.5 V1006.5 M604.5 766.5 V1006.5 M594.5 766.5 V1006.5 M584.5 766.5 V1006.5 M574.5 766.5 V1006.5 M564.5 766.5 V1006.5 M554.5 766.5 V1006.5 M544.5 766.5 V1006.5 M534.5 766.5 V1006.5 M524.5 766.5 V1006.5 M514.5 766.5 V1006.5 M504.5 766.5 V1006.5 M494.5 766.5 V1006.5 M484.5 766.5 V1006.5 M474.5 766.5 V1006.5 M464.5 766.5 V1006.5 M454.5 766.5 V1006.5 M444.5 766.5 V1006.5 M434.5 766.5 V1006.5 M424.5 766.5 V1006.5 M414.5 766.5 V1006.5 M404.5 766.5 V1006.5 M394.5 766.5 V1006.5" stroke="#ffffff" stroke-opacity="0.215" stroke-width="1" shape-rendering="crispEdges"/><path d="M384.5 785.50 H1874.5 M384.5 812.72 H1874.5 M384.5 839.94 H1874.5 M384.5 867.16 H1874.5 M384.5 894.38 H1874.5 M384.5 921.60 H1874.5 M384.5 948.82 H1874.5 M384.5 976.04 H1874.5 M384.5 1003.26 H1874.5" stroke="#ffffff" stroke-opacity="0.2" stroke-width="1"/><polyline points="486.0,1006.5 486.5,985.2 486.5,976.4 487.2,974.9 488.0,977.5 488.8,973.8 489.5,974.4 490.2,978.6 491.0,974.1 491.8,976.5 492.5,969.4 493.2,976.0 494.0,979.0 494.8,979.0 495.5,973.5 496.2,974.0 497.0,977.9 497.8,979.8 498.5,980.9 499.2,979.3 500.0,973.2 500.8,977.2 501.5,976.6 502.2,971.6 503.0,978.2 503.8,982.1 504.5,983.5 505.2,977.7 506.0,976.4 506.8,980.3 507.5,985.1 508.2,968.1 509.0,980.2 509.8,986.9 510.5,982.8 511.2,979.9 512.0,982.1 512.8,979.8 513.5,982.1 514.2,973.4 515.0,978.9 515.8,977.3 516.5,978.0 517.2,981.1 518.0,973.0 518.8,982.6 519.5,975.0 520.2,979.4 521.0,979.9 521.8,977.0 522.5,974.0 523.2,976.4 524.0,978.0 524.8,979.3 525.5,979.9 526.2,977.7 527.0,972.2 527.8,983.1 528.5,978.6 529.2,971.6 530.0,976.6 530.8,978.2 531.5,975.8 532.2,981.0 533.0,977.1 533.8,980.4 534.5,978.4 535.2,978.9 536.0,974.9 536.8,978.0 537.5,980.3 538.2,979.6 539.0,977.3 539.8,979.3 540.5,975.6 541.2,978.0 542.0,979.3 542.8,979.7 543.5,980.4 544.2,978.4 545.0,981.6 545.8,975.5 546.5,979.8 547.2,983.9 548.0,975.5 548.8,978.3 549.5,976.5 550.2,974.7 551.0,978.8 551.8,977.8 552.5,976.6 553.2,979.8 554.0,977.3 554.8,978.9 555.5,979.2 556.2,985.6 557.0,981.9 557.8,979.1 558.5,976.0 559.2,978.9 560.0,977.6 560.8,977.8 561.5,978.3 562.2,973.9 563.0,981.6 563.8,977.3 564.5,978.4 565.2,977.6 566.0,979.9 566.8,983.3 567.5,978.3 568.2,975.8 569.0,977.4 569.8,978.8 570.5,979.7 571.2,984.1 572.0,978.3 572.8,982.5 573.5,979.3 574.2,980.4 575.0,982.3 575.8,981.8 576.5,976.1 577.2,978.4 578.0,976.4 578.8,975.8 579.5,974.3 580.2,980.0 581.0,974.4 581.8,979.6 582.5,981.1 583.2,981.7 584.0,979.4 584.8,976.6 585.5,979.3 586.2,980.1 587.0,983.2 587.8,974.0 588.5,980.1 589.2,980.0 590.0,978.7 590.8,976.7 591.5,976.1 592.2,977.6 593.0,974.9 593.8,977.6 594.5,975.1 595.2,978.3 596.0,984.0 596.8,976.8 597.5,977.2 598.2,983.4 599.0,977.4 599.8,975.9 600.5,976.8 601.2,983.5 602.0,974.9 602.8,978.1 603.5,978.6 604.2,983.1 605.0,977.0 605.8,981.9 606.5,977.7 607.2,980.8 608.0,979.6 608.8,974.8 609.5,975.5 610.2,977.1 611.0,978.6 611.8,977.5 612.5,980.2 613.2,982.1 614.0,975.4 614.8,979.9 615.5,979.0 616.2,981.8 617.0,978.3 617.8,977.7 618.5,979.7 619.2,979.7 620.0,975.7 620.8,974.0 621.5,979.3 622.2,980.2 623.0,984.3 623.8,979.7 624.5,972.5 625.2,974.8 626.0,981.3 626.8,980.9 627.5,975.2 628.2,973.1 629.0,975.9 629.8,969.2 630.5,978.8 631.2,984.1 632.0,979.9 632.8,977.5 633.5,973.0 634.2,977.4 635.0,974.5 635.8,977.8 636.5,975.5 637.2,979.9 638.0,977.0 638.8,977.1 639.5,977.9 640.2,983.0 641.0,980.9 641.8,977.4 642.5,981.4 643.2,979.2 644.0,982.7 644.8,981.0 645.5,975.8 646.2,970.9 647.0,981.6 647.8,980.2 648.5,977.9 649.2,974.1 650.0,976.0 650.8,977.6 651.5,981.1 652.2,977.8 653.0,980.4 653.8,983.6 654.5,978.5 655.2,973.7 656.0,976.8 656.8,973.5 657.5,979.9 658.2,974.9 659.0,978.9 659.8,974.4 660.5,977.6 661.2,975.4 662.0,979.4 662.8,980.8 663.5,978.0 664.2,977.1 665.0,979.7 665.8,977.8 666.5,974.2 667.2,977.9 668.0,985.5 668.8,978.5 669.5,980.2 670.2,980.4 671.0,980.5 671.8,980.8 672.5,978.4 673.2,979.0 674.0,977.8 674.8,974.9 675.5,980.1 676.2,978.4 677.0,979.4 677.8,976.8 678.5,976.3 679.2,975.4 680.0,975.9 680.8,976.3 681.5,978.4 682.2,980.3 683.0,976.7 683.8,977.5 684.5,977.5 685.2,975.1 686.0,978.7 686.8,978.8 687.5,976.3 688.2,979.8 689.0,984.2 689.8,978.4 690.5,975.9 691.2,972.8 692.0,977.8 692.8,982.8 693.5,980.7 694.2,975.1 695.0,978.2 695.8,979.3 696.5,980.7 697.2,974.2 698.0,979.0 698.8,977.3 699.5,978.2 700.2,975.9 701.0,979.9 701.8,982.1 702.5,979.7 703.2,977.1 704.0,979.3 704.8,977.0 705.5,978.3 706.2,977.8 707.0,980.6 707.8,975.0 708.5,982.7 709.2,977.1 710.0,979.2 710.8,974.9 711.5,980.9 712.2,978.2 713.0,976.0 713.8,975.2 714.5,973.0 715.2,979.7 716.0,979.7 716.8,976.1 717.5,981.5 718.2,976.2 719.0,977.5 719.8,982.1 720.5,974.5 721.2,982.6 722.0,982.7 722.8,978.5 723.5,980.1 724.2,980.9 725.0,976.6 725.8,971.9 726.5,982.9 727.2,977.2 728.0,976.0 728.8,976.4 729.5,979.2 730.2,981.2 731.0,976.6 731.8,976.8 732.5,976.4 733.2,978.8 734.0,980.1 734.8,983.5 735.5,976.2 736.2,979.5 737.0,973.4 737.8,973.8 738.5,971.1 739.2,976.9 740.0,981.6 740.8,980.0 741.5,979.7 742.2,979.6 743.0,976.4 743.8,979.5 744.5,982.3 745.2,975.6 746.0,978.8 746.8,980.5 747.5,983.6 748.2,976.2 749.0,972.5 749.8,979.8 750.5,978.1 751.2,980.2 752.0,974.1 752.8,982.6 753.5,984.4 754.2,978.0 755.0,974.9 755.8,975.1 756.5,979.0 757.2,977.1 758.0,972.3 758.8,975.9 759.5,980.8 760.2,979.7 761.0,982.7 761.8,976.8 762.5,978.3 763.2,980.4 764.0,977.0 764.8,976.1 765.5,980.5 766.2,975.8 767.0,977.4 767.8,978.1 768.5,979.7 769.2,976.6 770.0,983.1 770.8,977.7 771.5,981.9 772.2,981.5 773.0,982.7 773.8,983.1 774.5,975.2 775.2,979.0 776.0,978.8 776.8,980.6 777.5,980.5 778.2,978.9 779.0,980.9 779.8,981.5 780.5,976.7 781.2,978.9 782.0,981.9 782.8,978.7 783.5,978.3 784.2,975.6 785.0,979.5 785.8,980.4 786.5,976.2 787.2,978.3 788.0,982.6 788.8,986.0 789.5,976.5 790.2,981.0 791.0,976.1 791.8,977.5 792.5,979.3 793.2,978.1 794.0,978.3 794.8,976.8 795.5,977.8 796.2,973.9 797.0,979.2 797.8,982.5 798.5,976.7 799.2,981.0 800.0,977.1 800.8,976.1 801.5,976.9 802.2,978.1 803.0,980.3 803.8,980.8 804.5,980.7 805.2,975.1 806.0,977.9 806.8,977.3 807.5,981.4 808.2,975.8 809.0,979.6 809.8,978.3 810.5,978.4 811.2,985.9 812.0,980.5 812.8,976.0 813.5,981.7 814.2,976.1 815.0,974.8 815.8,981.7 816.5,973.9 817.2,976.9 818.0,980.6 818.8,978.1 819.5,977.3 820.2,984.6 821.0,982.1 821.8,973.0 822.5,981.6 823.2,974.8 824.0,985.0 824.8,976.2 825.5,981.5 826.2,983.6 827.0,976.7 827.8,985.5 828.5,978.8 829.2,973.7 830.0,976.8 830.8,979.3 831.5,975.3 832.2,979.2 833.0,978.5 833.8,980.0 834.5,971.6 835.2,979.9 836.0,978.2 836.8,976.3 837.5,978.6 838.2,979.4 839.0,978.8 839.8,982.0 840.5,975.5 841.2,976.5 842.0,974.8 842.8,980.4 843.5,981.2 844.2,978.2 845.0,975.4 845.8,977.9 846.5,975.1 847.2,979.2 848.0,979.7 848.8,982.6 849.5,979.0 850.2,974.7 851.0,980.0 851.8,974.4 852.5,978.1 853.2,977.8 854.0,981.0 854.8,976.4 855.5,978.7 856.2,974.3 857.0,980.3 857.8,976.0 858.5,982.3 859.2,978.1 860.0,979.5 860.8,980.1 861.5,980.8 862.2,981.6 863.0,981.5 863.8,979.1 864.5,977.2 865.2,976.8 866.0,979.6 866.8,980.1 867.5,976.5 868.2,972.3 869.0,977.5 869.8,979.6 870.5,976.3 871.2,979.1 872.0,977.8 872.8,980.1 873.5,983.8 874.2,980.2 875.0,980.8 875.8,981.2 876.5,971.7 877.2,977.0 878.0,978.0 878.8,980.0 879.5,983.6 880.2,979.3 881.0,979.4 881.8,979.7 882.5,975.5 883.2,977.7 884.0,980.4 884.8,977.5 885.5,976.5 886.2,978.3 887.0,976.2 887.8,977.5 888.5,976.6 889.2,974.7 890.0,983.4 890.8,978.0 891.5,976.8 892.2,982.5 893.0,979.3 893.8,977.7 894.5,977.9 895.2,983.8 896.0,986.0 896.8,977.2 897.5,983.0 898.2,980.7 899.0,981.4 899.8,975.6 900.5,968.8 901.2,978.0 902.0,978.4 902.8,980.1 903.5,977.4 904.2,974.4 905.0,980.6 905.8,980.3 906.5,977.4 907.2,978.4 908.0,979.6 908.8,979.4 909.5,977.0 910.2,974.0 911.0,982.1 911.8,980.1 912.5,979.9 913.2,975.0 914.0,978.2 914.8,979.7 915.5,981.9 916.2,975.9 917.0,980.7 917.8,977.8 918.5,977.1 919.2,978.7 920.0,979.5 920.8,978.2 921.5,981.0 922.2,975.0 923.0,977.0 923.8,980.3 924.5,974.7 925.2,982.2 926.0,976.5 926.8,975.7 927.5,979.2 928.2,982.4 929.0,979.7 929.8,978.1 930.5,978.7 931.2,979.9 932.0,979.8 932.8,978.0 933.5,973.9 934.2,972.6 935.0,979.1 935.8,975.9 936.5,976.2 937.2,977.4 938.0,979.9 938.8,975.7 939.5,982.8 940.2,976.6 941.0,979.7 941.8,980.3 942.5,981.0 943.2,980.8 944.0,976.2 944.8,986.3 945.5,980.9 946.2,977.6 947.0,973.8 947.8,979.9 948.5,977.3 949.2,974.6 950.0,969.6 950.8,978.3 951.5,979.7 952.2,978.2 953.0,983.2 953.8,982.5 954.5,977.6 955.2,982.1 956.0,983.3 956.8,983.0 957.5,968.5 958.2,978.7 959.0,981.5 959.8,978.9 960.5,977.3 961.2,977.1 962.0,974.0 962.8,973.1 963.5,983.4 964.2,973.5 965.0,976.8 965.8,980.7 966.5,980.1 967.2,976.5 968.0,975.0 968.8,979.4 969.5,980.9 970.2,967.1 971.0,975.7 971.8,975.6 972.5,978.8 973.2,976.1 974.0,977.2 974.8,976.9 975.5,976.4 976.2,982.3 977.0,974.8 977.8,980.5 978.5,979.8 979.2,978.7 980.0,981.5 980.8,978.8 981.5,977.9 982.2,978.2 983.0,974.3 983.8,977.6 984.5,981.1 985.2,971.3 986.0,984.0 986.8,975.9 987.5,981.1 988.2,980.9 989.0,976.8 989.8,977.4 990.5,974.8 991.2,976.3 992.0,983.5 992.8,974.4 993.5,982.8 994.2,976.2 995.0,982.1 995.8,977.4 996.5,977.2 997.2,978.6 998.0,979.6 998.8,978.1 999.5,973.9 1000.2,978.5 1001.0,979.7 1001.8,979.4 1002.5,979.7 1003.2,974.7 1004.0,978.2 1004.8,978.6 1005.5,975.5 1006.2,980.7 1007.0,975.2 1007.8,982.7 1008.5,973.3 1009.2,981.1 1010.0,980.5 1010.8,980.0 1011.5,974.6 1012.2,982.8 1013.0,979.1 1013.8,977.5 1014.5,980.0 1015.2,973.9 1016.0,974.4 1016.8,980.7 1017.5,982.1 1018.2,972.9 1019.0,978.2 1019.8,979.0 1020.5,975.5 1021.2,978.9 1022.0,977.2 1022.8,981.0 1023.5,978.6 1024.2,976.2 1025.0,977.3 1025.8,980.7 1026.5,978.1 1027.2,972.7 1028.0,977.4 1028.8,978.5 1029.5,979.3 1030.2,980.9 1031.0,977.2 1031.8,979.4 1032.5,977.6 1033.2,978.9 1034.0,978.3 1034.8,981.5 1035.5,977.6 1036.2,977.9 1037.0,976.0 1037.8,976.6 1038.5,982.2 1039.2,975.4 1040.0,987.1 1040.8,980.5 1041.5,977.6 1042.2,969.0 1043.0,979.4 1043.8,975.2 1044.5,978.3 1045.2,980.1 1046.0,980.2 1046.8,978.1 1047.5,976.5 1048.2,966.0 1049.0,966.0 1049.8,966.0 1050.5,971.5 1051.2,979.3 1052.0,975.3 1052.8,976.5 1053.5,984.6 1054.2,980.7 1055.0,972.2 1055.8,980.1 1056.5,971.7 1057.2,980.4 1058.0,978.8 1058.8,979.7 1059.5,980.8 1060.2,979.7 1061.0,974.7 1061.8,981.4 1062.5,979.1 1063.2,979.7 1064.0,978.3 1064.8,979.0 1065.5,978.7 1066.2,980.4 1067.0,976.8 1067.8,978.5 1068.5,980.1 1069.2,977.9 1070.0,981.0 1070.8,977.6 1071.5,977.1 1072.2,980.6 1073.0,983.2 1073.8,977.8 1074.5,981.1 1075.2,977.1 1076.0,977.7 1076.8,980.1 1077.5,981.5 1078.2,977.6 1079.0,976.9 1079.8,979.4 1080.5,975.3 1081.2,971.7 1082.0,978.1 1082.8,980.1 1083.5,982.8 1084.2,974.9 1085.0,977.0 1085.8,981.6 1086.5,976.4 1087.2,979.1 1088.0,978.9 1088.8,982.6 1089.5,974.8 1090.2,975.4 1091.0,980.9 1091.8,978.8 1092.5,979.7 1093.2,982.1 1094.0,977.0 1094.8,973.3 1095.5,983.6 1096.2,977.2 1097.0,975.6 1097.8,981.8 1098.5,976.2 1099.2,981.2 1100.0,974.5 1100.8,978.2 1101.5,978.3 1102.2,985.0 1103.0,977.0 1103.8,977.9 1104.5,976.4 1105.2,984.0 1106.0,979.1 1106.8,978.7 1107.5,976.2 1108.2,977.7 1109.0,978.0 1109.8,977.5 1110.5,982.5 1111.2,977.1 1112.0,977.6 1112.8,981.6 1113.5,978.9 1114.2,976.1 1115.0,978.9 1115.8,976.9 1116.5,978.9 1117.2,979.9 1118.0,982.2 1118.8,979.4 1119.5,978.9 1120.2,980.1 1121.0,977.1 1121.8,974.9 1122.5,980.1 1123.2,974.5 1124.0,979.6 1124.8,975.6 1125.5,980.6 1126.2,979.1 1127.0,986.2 1127.8,981.3 1128.5,974.6 1129.2,976.8 1130.0,983.8 1130.8,984.6 1131.5,975.5 1132.2,979.9 1133.0,978.3 1133.8,977.5 1134.5,980.4 1135.2,980.6 1136.0,981.1 1136.8,980.4 1137.5,983.4 1138.2,980.9 1139.0,980.6 1139.8,976.0 1140.5,972.8 1141.2,981.4 1142.0,978.0 1142.8,978.3 1143.5,976.5 1144.2,981.6 1145.0,978.7 1145.8,976.5 1146.5,972.4 1147.2,973.4 1148.0,980.1 1148.8,982.7 1149.5,977.5 1150.2,975.4 1151.0,978.2 1151.8,978.3 1152.5,979.2 1153.2,979.4 1154.0,976.2 1154.8,979.8 1155.5,978.6 1156.2,977.5 1157.0,979.3 1157.8,978.7 1158.5,982.1 1159.2,979.3 1160.0,978.5 1160.8,980.7 1161.5,984.2 1162.2,977.7 1163.0,980.0 1163.8,976.8 1164.5,976.3 1165.2,982.1 1166.0,979.3 1166.8,974.4 1167.5,980.2 1168.2,977.9 1169.0,974.6 1169.8,979.6 1170.5,981.1 1171.2,976.2 1172.0,977.7 1172.8,981.3 1173.5,977.8 1174.2,983.6 1175.0,976.9 1175.8,979.5 1176.5,979.3 1177.2,979.6 1178.0,977.6 1178.8,983.5 1179.5,978.4 1180.2,975.9 1181.0,978.8 1181.8,975.0 1182.5,979.8 1183.2,978.1 1184.0,979.7 1184.8,978.3 1185.5,974.3 1186.2,977.3 1187.0,980.9 1187.8,979.7 1188.5,979.4 1189.2,980.4 1190.0,974.4 1190.8,980.4 1191.5,977.3 1192.2,977.3 1193.0,983.5 1193.8,978.0 1194.5,978.6 1195.2,973.5 1196.0,967.2 1196.8,977.5 1197.5,976.3 1198.2,980.0 1199.0,981.8 1199.8,975.1 1200.5,979.9 1201.2,977.8 1202.0,985.6 1202.8,975.3 1203.5,979.6 1204.2,978.9 1205.0,981.6 1205.8,978.4 1206.5,973.5 1207.2,976.1 1208.0,975.8 1208.8,977.0 1209.5,980.4 1210.2,978.6 1211.0,980.4 1211.8,981.8 1212.5,970.8 1213.2,982.6 1214.0,979.7 1214.8,975.9 1215.5,979.5 1216.2,979.5 1217.0,981.0 1217.8,980.9 1218.5,981.2 1219.2,978.4 1220.0,977.9 1220.8,973.5 1221.5,974.7 1222.2,975.2 1223.0,984.2 1223.8,973.8 1224.5,977.8 1225.2,979.9 1226.0,978.2 1226.8,976.6 1227.5,978.7 1228.2,976.7 1229.0,976.0 1229.8,982.2 1230.5,975.8 1231.2,979.4 1232.0,982.3 1232.8,984.3 1233.5,977.9 1234.2,979.5 1235.0,974.0 1235.8,979.5 1236.5,980.0 1237.2,980.8 1238.0,983.2 1238.8,977.2 1239.5,978.9 1240.2,969.8 1241.0,980.6 1241.8,979.1 1242.5,983.0 1243.2,976.8 1244.0,976.5 1244.8,979.4 1245.5,980.7 1246.2,980.7 1247.0,977.3 1247.8,979.0 1248.5,979.0 1249.2,981.5 1250.0,980.8 1250.8,978.3 1251.5,976.6 1252.2,978.2 1253.0,982.2 1253.8,980.9 1254.5,978.1 1255.2,981.7 1256.0,978.9 1256.8,976.3 1257.5,975.4 1258.2,977.5 1259.0,982.6 1259.8,979.5 1260.5,977.0 1261.2,981.5 1262.0,976.2 1262.8,978.9 1263.5,980.8 1264.2,984.0 1265.0,976.2 1265.8,977.9 1266.5,975.8 1267.2,980.7 1268.0,975.9 1268.8,978.1 1269.5,979.3 1270.2,976.4 1271.0,981.2 1271.8,975.6 1272.5,977.5 1273.2,982.7 1274.0,977.4 1274.8,979.5 1275.5,976.9 1276.2,982.9 1277.0,979.5 1277.8,984.2 1278.5,975.8 1279.2,977.0 1280.0,979.8 1280.8,976.6 1281.5,980.6 1282.2,978.6 1283.0,979.7 1283.8,976.8 1284.5,976.9 1285.2,984.3 1286.0,974.0 1286.8,978.5 1287.5,974.4 1288.2,981.3 1289.0,980.0 1289.8,977.6 1290.5,981.8 1291.2,978.4 1292.0,977.6 1292.8,977.7 1293.5,981.4 1294.2,979.8 1295.0,981.5 1295.8,976.3 1296.5,982.7 1297.2,977.3 1298.0,975.0 1298.8,978.4 1299.5,981.6 1300.2,979.3 1301.0,981.2 1301.8,975.7 1302.5,977.0 1303.2,977.7 1304.0,977.7 1304.8,982.6 1305.5,983.3 1306.2,975.7 1307.0,982.4 1307.8,975.1 1308.5,975.2 1309.2,980.9 1310.0,983.1 1310.8,977.7 1311.5,976.1 1312.2,975.7 1313.0,977.6 1313.8,975.0 1314.5,981.2 1315.2,980.6 1316.0,971.4 1316.8,978.0 1317.5,979.3 1318.2,983.0 1319.0,974.2 1319.8,977.4 1320.5,984.5 1321.2,972.9 1322.0,979.4 1322.8,976.8 1323.5,981.9 1324.2,983.1 1325.0,981.8 1325.8,978.5 1326.5,979.0 1327.2,970.5 1328.0,975.0 1328.8,979.2 1329.5,976.9 1330.2,978.8 1331.0,980.3 1331.8,978.0 1332.5,974.0 1333.2,973.2 1334.0,979.4 1334.8,980.1 1335.5,973.8 1336.2,986.7 1337.0,974.4 1337.8,976.1 1338.5,978.0 1339.2,978.4 1340.0,979.4 1340.8,971.4 1341.5,977.4 1342.2,979.0 1343.0,981.2 1343.8,977.3 1344.5,978.3 1345.2,981.6 1346.0,983.7 1346.8,980.1 1347.5,986.0 1348.2,976.2 1349.0,981.1 1349.8,982.7 1350.5,979.5 1351.2,974.0 1352.0,979.7 1352.8,981.6 1353.5,978.6 1354.2,977.9 1355.0,976.5 1355.8,971.2 1356.5,976.2 1357.2,976.0 1358.0,978.0 1358.8,974.7 1359.5,975.4 1360.2,973.1 1361.0,971.3 1361.8,969.7 1362.5,981.3 1363.2,973.9 1364.0,973.2 1364.8,973.2 1365.5,978.8 1366.2,977.9 1367.0,978.1 1367.8,975.9 1368.5,973.1 1369.2,978.2 1370.0,979.6 1370.8,979.2 1371.5,978.1 1372.2,978.2 1373.0,972.4 1373.8,984.6 1374.5,976.9 1375.2,980.6 1376.0,974.6 1376.8,977.4 1377.5,978.5 1378.2,979.5 1379.0,981.3 1379.8,974.6 1380.5,980.7 1381.2,977.1 1382.0,982.3 1382.8,975.6 1383.5,977.0 1384.2,976.5 1385.0,975.1 1385.8,978.5 1386.5,980.5 1387.2,978.0 1388.0,977.5 1388.8,973.2 1389.5,982.7 1390.2,974.4 1391.0,978.4 1391.8,975.4 1392.5,977.4 1393.2,979.4 1394.0,981.8 1394.8,981.2 1395.5,979.7 1396.2,975.8 1397.0,985.2 1397.8,976.2 1398.5,981.3 1399.2,977.1 1400.0,981.3 1400.8,977.8 1401.5,979.1 1402.2,968.3 1403.0,976.2 1403.8,978.3 1404.5,979.8 1405.2,980.0 1406.0,979.1 1406.8,975.2 1407.5,976.9 1408.2,983.0 1409.0,977.6 1409.8,979.2 1410.5,981.4 1411.2,975.9 1412.0,976.6 1412.8,984.5 1413.5,980.6 1414.2,984.1 1415.0,977.1 1415.8,976.1 1416.5,978.7 1417.2,979.0 1418.0,981.4 1418.8,975.8 1419.5,980.1 1420.2,982.3 1421.0,978.0 1421.8,977.1 1422.5,975.5 1423.2,976.9 1424.0,973.5 1424.8,974.7 1425.5,979.1 1426.2,973.7 1427.0,973.3 1427.8,981.2 1428.5,974.1 1429.2,982.6 1430.0,976.5 1430.8,978.6 1431.5,978.4 1432.2,976.9 1433.0,980.0 1433.8,979.9 1434.5,982.2 1435.2,976.9 1436.0,978.2 1436.8,977.4 1437.5,978.6 1438.2,978.3 1439.0,979.8 1439.8,979.8 1440.5,976.9 1441.2,977.9 1442.0,978.8 1442.8,975.4 1443.5,976.7 1444.2,981.6 1445.0,975.0 1445.8,980.5 1446.5,975.5 1447.2,979.1 1448.0,980.6 1448.8,976.9 1449.5,975.2 1450.2,977.4 1451.0,974.0 1451.8,973.6 1452.5,975.1 1453.2,977.6 1454.0,973.7 1454.8,975.5 1455.5,975.5 1456.2,975.4 1457.0,972.8 1457.8,969.9 1458.5,979.0 1459.2,982.5 1460.0,982.8 1460.8,966.9 1461.5,981.6 1462.2,963.8 1463.0,976.1 1463.8,964.3 1464.5,968.5 1465.2,966.9 1466.0,969.2 1466.8,977.6 1467.5,978.3 1468.2,973.3 1469.0,977.8 1469.8,977.8 1470.5,979.3 1471.2,977.8 1472.0,980.5 1472.8,980.4 1473.5,980.0 1474.2,973.7 1475.0,976.9 1475.8,978.3 1476.5,980.5 1477.2,978.1 1478.0,975.4 1478.8,980.1 1479.5,980.4 1480.2,978.5 1481.0,979.6 1481.8,964.1 1482.5,976.8 1483.2,978.7 1484.0,977.3 1484.8,979.4 1485.5,983.3 1486.2,979.1 1487.0,971.3 1487.8,966.8 1488.5,962.7 1489.2,957.7 1490.0,957.7 1490.8,956.1 1491.5,954.1 1492.2,954.3 1493.0,954.1 1493.8,954.2 1494.5,954.8 1495.2,951.9 1496.0,949.2 1496.8,945.9 1497.5,944.6 1498.2,944.3 1499.0,943.1 1499.8,942.5 1500.5,941.8 1501.2,940.1 1502.0,940.7 1502.8,938.8 1503.5,938.1 1504.2,937.5 1505.0,937.2 1505.8,936.5 1506.5,940.0 1507.2,940.9 1508.0,944.0 1508.8,945.6 1509.5,948.0 1510.2,951.8 1511.0,953.7 1511.8,953.9 1512.5,956.1 1513.2,959.6 1514.0,961.5 1514.8,964.5 1515.5,968.5 1516.2,972.7 1517.0,976.9 1517.8,973.6 1518.5,971.1 1519.2,965.8 1520.0,960.3 1520.8,957.8 1521.5,955.9 1522.2,954.2 1523.0,955.7 1523.8,956.0 1524.5,955.9 1525.2,957.2 1526.0,955.1 1526.8,954.3 1527.5,949.0 1528.2,945.7 1529.0,943.6 1529.8,939.8 1530.5,938.0 1531.2,941.9 1532.0,944.6 1532.8,975.1 1533.5,983.6 1534.2,982.7 1535.0,978.2 1535.8,980.4 1536.5,976.0 1537.2,977.2 1538.0,979.3 1538.8,980.0 1539.5,973.1 1540.2,977.9 1541.0,976.3 1541.8,964.1 1542.5,974.7 1543.2,976.9 1544.0,956.9 1544.8,960.7 1545.5,979.3 1546.2,954.3 1547.0,970.9 1547.8,978.7 1548.5,955.5 1549.2,964.1 1550.0,974.6 1550.8,945.8 1551.5,965.8 1552.2,972.5 1553.0,941.9 1553.8,946.3 1554.5,979.8 1555.2,931.5 1556.0,937.9 1556.8,974.1 1557.5,929.7 1558.2,937.6 1559.0,972.9 1559.8,931.2 1560.5,959.5 1561.2,975.8 1562.0,945.7 1562.8,959.5 1563.5,974.5 1564.2,943.7 1565.0,961.1 1565.8,975.1 1566.5,941.3 1567.2,949.5 1568.0,978.9 1568.8,938.9 1569.5,958.1 1570.2,974.7 1571.0,937.0 1571.8,951.4 1572.5,976.3 1573.2,932.7 1574.0,944.9 1574.8,976.5 1575.5,932.4 1576.2,947.4 1577.0,974.0 1577.8,948.2 1578.5,971.4 1579.2,975.1 1580.0,959.8 1580.8,978.3 1581.5,966.7 1582.2,951.9 1583.0,971.9 1583.8,973.3 1584.5,948.0 1585.2,957.7 1586.0,972.5 1586.8,944.7 1587.5,951.6 1588.2,974.7 1589.0,942.0 1589.8,954.9 1590.5,973.4 1591.2,936.4 1592.0,950.2 1592.8,974.8 1593.5,936.7 1594.2,950.8 1595.0,979.1 1595.8,947.7 1596.5,962.9 1597.2,978.2 1598.0,957.1 1598.8,976.1 1599.5,975.8 1600.2,974.0 1601.0,975.9 1601.8,978.8 1602.5,970.8 1603.2,983.0 1604.0,982.3 1604.8,979.3 1605.5,978.7 1606.2,980.6 1607.0,972.5 1607.8,978.3 1608.5,980.8 1609.2,979.2 1610.0,978.6 1610.8,978.8 1611.5,977.4 1612.2,978.5 1613.0,975.0 1613.8,974.3 1614.5,981.0 1615.2,982.8 1616.0,977.0 1616.8,977.1 1617.5,980.7 1618.2,971.1 1619.0,977.3 1619.8,972.1 1620.5,971.8 1621.2,981.3 1622.0,978.3 1622.8,977.6 1623.5,979.0 1624.2,978.5 1625.0,976.7 1625.8,979.6 1626.5,979.8 1627.2,978.8 1628.0,979.6 1628.8,982.7 1629.5,965.1 1630.2,977.0 1631.0,974.8 1631.8,979.9 1632.5,980.6 1633.2,980.9 1634.0,975.3 1634.8,977.0 1635.5,976.0 1636.2,980.8 1637.0,977.1 1637.8,975.9 1638.5,978.8 1639.2,977.7 1640.0,976.6 1640.8,974.4 1641.5,980.7 1642.2,977.1 1643.0,978.9 1643.8,980.6 1644.5,979.6 1645.2,978.0 1646.0,979.4 1646.8,973.7 1647.5,978.0 1648.2,979.2 1649.0,979.0 1649.8,980.6 1650.5,976.8 1651.2,980.6 1652.0,984.1 1652.8,974.3 1653.5,978.7 1654.2,976.3 1655.0,973.6 1655.8,979.2 1656.5,977.9 1657.2,976.9 1658.0,973.5 1658.8,979.0 1659.5,980.4 1660.2,977.4 1661.0,980.2 1661.8,977.2 1662.5,970.9 1663.2,977.4 1664.0,980.2 1664.8,982.5 1665.5,975.0 1666.2,979.2 1667.0,978.4 1667.8,977.6 1668.5,979.7 1669.2,969.9 1670.0,976.0 1670.8,979.4 1671.5,976.8 1672.2,977.3 1673.0,980.9 1673.8,981.2 1674.5,979.5 1675.2,976.1 1676.0,980.5 1676.8,982.8 1677.5,975.9 1678.2,976.1 1679.0,979.3 1679.8,981.3 1680.5,979.0 1681.2,979.1 1682.0,975.8 1682.8,972.7 1683.5,977.3 1684.2,979.4 1685.0,967.2 1685.8,976.4 1686.5,978.1 1687.2,966.3 1688.0,978.8 1688.8,976.6 1689.5,981.3 1690.2,982.0 1691.0,980.2 1691.8,980.3 1692.5,978.8 1693.2,979.6 1694.0,980.2 1694.8,980.1 1695.5,981.8 1696.2,977.4 1697.0,981.9 1697.8,980.3 1698.5,968.9 1699.2,980.0 1700.0,974.0 1700.8,968.8 1701.5,980.7 1702.2,978.8 1703.0,976.8 1703.8,979.5 1704.5,981.3 1705.2,976.3 1706.0,981.5 1706.8,974.8 1707.5,975.7 1708.2,977.9 1709.0,984.5 1709.8,979.0 1710.5,982.4 1711.2,977.8 1712.0,978.0 1712.8,979.9 1713.5,975.1 1714.2,981.3 1715.0,982.4 1715.8,979.6 1716.5,980.7 1717.2,978.9 1718.0,982.5 1718.8,976.4 1719.5,979.0 1720.2,977.7 1721.0,981.4 1721.8,982.7 1722.5,980.6 1723.2,970.9 1724.0,973.7 1724.8,977.7 1725.5,975.5 1726.2,979.5 1727.0,977.4 1727.8,974.4 1728.5,984.6 1729.2,977.9 1730.0,977.2 1730.8,982.6 1731.5,978.3 1732.2,976.6 1733.0,977.8 1733.8,975.9 1734.5,977.1 1735.2,979.8 1736.0,983.7 1736.8,978.3 1737.5,981.5 1738.2,973.6 1739.0,978.2 1739.8,977.2 1740.5,979.9 1741.2,976.9 1742.0,976.2 1742.8,978.9 1743.5,972.2 1744.2,982.6 1745.0,975.8 1745.8,980.3 1746.5,977.8 1747.2,979.4 1748.0,978.3 1748.8,981.1 1749.5,971.0 1750.2,979.2 1751.0,980.1 1751.8,976.2 1752.5,980.8 1753.2,974.0 1754.0,980.3 1754.8,979.6 1755.5,976.6 1756.2,976.4 1757.0,976.1 1757.8,978.9 1758.5,971.2 1759.2,979.1 1760.0,979.4 1760.8,980.8 1761.5,976.0 1762.2,977.9 1763.0,984.6 1763.8,966.6 1764.5,976.0 1765.2,976.1 1766.0,977.6 1766.8,972.1 1767.5,976.1 1768.2,971.8 1769.0,978.3 1769.8,974.5 1770.5,975.3 1771.2,977.2 1772.0,975.8 1772.8,976.7 1773.5,978.3 1774.2,980.3 1775.0,980.4 1775.8,978.3 1776.5,981.5 1777.2,975.4 1778.0,976.7 1778.8,975.4 1779.5,975.2 1780.2,983.3 1781.0,980.5 1781.8,979.8 1782.5,978.5 1783.2,980.9 1784.0,976.2 1784.8,981.4 1785.5,980.9 1786.2,979.6 1787.0,982.5 1787.8,981.6 1788.5,977.2 1789.2,975.4 1790.0,976.3 1790.8,974.0 1791.5,982.7 1792.2,981.3 1793.0,977.7 1793.8,979.4 1794.5,980.0 1795.2,976.7 1796.0,978.7 1796.8,977.6 1797.5,972.9 1798.2,979.2 1799.0,973.7 1799.8,972.2 1800.5,978.5 1801.2,976.6 1802.0,980.2 1802.8,972.9 1803.5,979.7 1804.2,978.3 1805.0,981.0 1805.8,974.9 1806.5,983.1 1807.2,977.2 1808.0,974.2 1808.8,981.2 1809.5,981.8 1810.2,977.0 1811.0,979.0 1811.8,978.3 1812.5,979.7 1813.2,976.3 1814.0,977.0 1814.8,982.7 1815.5,979.1 1816.2,974.7 1817.0,979.7 1817.8,984.5 1818.5,975.3 1819.2,975.7 1820.0,977.8 1820.8,978.3 1821.5,975.6 1822.2,978.6 1823.0,978.1 1823.8,979.1 1824.5,980.6 1825.2,979.3 1826.0,981.7 1826.8,979.7 1827.5,977.2 1828.2,976.7 1829.0,977.7 1829.8,976.3 1830.5,977.2 1831.2,978.4 1832.0,976.9 1832.8,976.4 1833.5,981.4 1834.2,977.5 1835.0,975.2 1835.8,978.8 1836.5,981.6 1837.2,981.9 1838.0,976.9 1838.8,978.7 1839.5,976.4 1840.2,976.0 1841.0,978.2 1841.8,977.8 1842.5,979.2 1843.2,979.2 1844.0,978.9 1844.8,981.4 1845.5,980.2 1846.2,975.0 1847.0,974.7 1847.8,983.1 1848.5,980.6 1849.2,982.7 1850.0,973.8 1850.8,978.9 1851.5,976.5 1852.2,976.8 1853.0,974.2 1853.8,980.7 1854.5,979.8 1855.2,980.1 1856.0,980.5 1856.8,976.0 1857.5,978.2 1858.2,982.6 1859.0,980.8 1859.8,979.4 1860.5,980.0 1861.2,980.1 1862.0,983.2 1863.0,1006.5" fill="none" stroke="#dedee6" stroke-width="1.05" stroke-linejoin="round"/><path d="M486.500 1006.5 V985.500 H1862.500 V1006.5" fill="none" stroke="#c8c8a4" stroke-width="1" shape-rendering="crispEdges" opacity="0.9"/><rect x="384.5" y="766.5" width="1490.0" height="240.0" fill="none" stroke="#8c8c88" stroke-width="1" shape-rendering="crispEdges"/><path d="M1849 971.500 H1874" stroke="#d8d8d8" stroke-width="1"/></svg>
<div style="position:absolute;top:754.8px;line-height:12px;height:12px;font-size:7.8px;color:#f0f0f0;font-family:'Liberation Sans',sans-serif;white-space:pre;left:1874.5px;transform:translateX(-50%);">0s</div>
<div style="position:absolute;top:1008.5px;line-height:12px;height:12px;font-size:7.8px;color:#f0f0f0;font-family:'Liberation Sans',sans-serif;white-space:pre;left:1874.5px;transform:translateX(-50%);">0s</div>
<div style="position:absolute;top:754.8px;line-height:12px;height:12px;font-size:7.8px;color:#f0f0f0;font-family:'Liberation Sans',sans-serif;white-space:pre;left:1749.5px;transform:translateX(-50%);">50s</div>
<div style="position:absolute;top:1008.5px;line-height:12px;height:12px;font-size:7.8px;color:#f0f0f0;font-family:'Liberation Sans',sans-serif;white-space:pre;left:1749.5px;transform:translateX(-50%);">50s</div>
<div style="position:absolute;top:754.8px;line-height:12px;height:12px;font-size:7.8px;color:#f0f0f0;font-family:'Liberation Sans',sans-serif;white-space:pre;left:1624.5px;transform:translateX(-50%);">100s</div>
<div style="position:absolute;top:1008.5px;line-height:12px;height:12px;font-size:7.8px;color:#f0f0f0;font-family:'Liberation Sans',sans-serif;white-space:pre;left:1624.5px;transform:translateX(-50%);">100s</div>
<div style="position:absolute;top:754.8px;line-height:12px;height:12px;font-size:7.8px;color:#f0f0f0;font-family:'Liberation Sans',sans-serif;white-space:pre;left:1499.5px;transform:translateX(-50%);">150s</div>
<div style="position:absolute;top:1008.5px;line-height:12px;height:12px;font-size:7.8px;color:#f0f0f0;font-family:'Liberation Sans',sans-serif;white-space:pre;left:1499.5px;transform:translateX(-50%);">150s</div>
<div style="position:absolute;top:754.8px;line-height:12px;height:12px;font-size:7.8px;color:#f0f0f0;font-family:'Liberation Sans',sans-serif;white-space:pre;left:1374.5px;transform:translateX(-50%);">200s</div>
<div style="position:absolute;top:1008.5px;line-height:12px;height:12px;font-size:7.8px;color:#f0f0f0;font-family:'Liberation Sans',sans-serif;white-space:pre;left:1374.5px;transform:translateX(-50%);">200s</div>
<div style="position:absolute;top:754.8px;line-height:12px;height:12px;font-size:7.8px;color:#f0f0f0;font-family:'Liberation Sans',sans-serif;white-space:pre;left:1249.5px;transform:translateX(-50%);">250s</div>
<div style="position:absolute;top:1008.5px;line-height:12px;height:12px;font-size:7.8px;color:#f0f0f0;font-family:'Liberation Sans',sans-serif;white-space:pre;left:1249.5px;transform:translateX(-50%);">250s</div>
<div style="position:absolute;top:754.8px;line-height:12px;height:12px;font-size:7.8px;color:#f0f0f0;font-family:'Liberation Sans',sans-serif;white-space:pre;left:1124.5px;transform:translateX(-50%);">300s</div>
<div style="position:absolute;top:1008.5px;line-height:12px;height:12px;font-size:7.8px;color:#f0f0f0;font-family:'Liberation Sans',sans-serif;white-space:pre;left:1124.5px;transform:translateX(-50%);">300s</div>
<div style="position:absolute;top:754.8px;line-height:12px;height:12px;font-size:7.8px;color:#f0f0f0;font-family:'Liberation Sans',sans-serif;white-space:pre;left:999.5px;transform:translateX(-50%);">350s</div>
<div style="position:absolute;top:1008.5px;line-height:12px;height:12px;font-size:7.8px;color:#f0f0f0;font-family:'Liberation Sans',sans-serif;white-space:pre;left:999.5px;transform:translateX(-50%);">350s</div>
<div style="position:absolute;top:754.8px;line-height:12px;height:12px;font-size:7.8px;color:#f0f0f0;font-family:'Liberation Sans',sans-serif;white-space:pre;left:874.5px;transform:translateX(-50%);">400s</div>
<div style="position:absolute;top:1008.5px;line-height:12px;height:12px;font-size:7.8px;color:#f0f0f0;font-family:'Liberation Sans',sans-serif;white-space:pre;left:874.5px;transform:translateX(-50%);">400s</div>
<div style="position:absolute;top:754.8px;line-height:12px;height:12px;font-size:7.8px;color:#f0f0f0;font-family:'Liberation Sans',sans-serif;white-space:pre;left:749.5px;transform:translateX(-50%);">450s</div>
<div style="position:absolute;top:1008.5px;line-height:12px;height:12px;font-size:7.8px;color:#f0f0f0;font-family:'Liberation Sans',sans-serif;white-space:pre;left:749.5px;transform:translateX(-50%);">450s</div>
<div style="position:absolute;top:754.8px;line-height:12px;height:12px;font-size:7.8px;color:#f0f0f0;font-family:'Liberation Sans',sans-serif;white-space:pre;left:624.5px;transform:translateX(-50%);">500s</div>
<div style="position:absolute;top:1008.5px;line-height:12px;height:12px;font-size:7.8px;color:#f0f0f0;font-family:'Liberation Sans',sans-serif;white-space:pre;left:624.5px;transform:translateX(-50%);">500s</div>
<div style="position:absolute;top:754.8px;line-height:12px;height:12px;font-size:7.8px;color:#f0f0f0;font-family:'Liberation Sans',sans-serif;white-space:pre;left:499.5px;transform:translateX(-50%);">550s</div>
<div style="position:absolute;top:1008.5px;line-height:12px;height:12px;font-size:7.8px;color:#f0f0f0;font-family:'Liberation Sans',sans-serif;white-space:pre;left:499.5px;transform:translateX(-50%);">550s</div>
<div style="position:absolute;top:779.5px;line-height:13px;height:13px;font-size:8px;color:#e8e8e8;font-family:'Liberation Sans',sans-serif;white-space:pre;left:1879px;letter-spacing:-0.15px;">-60 dBm</div>
<div style="position:absolute;top:806.7px;line-height:13px;height:13px;font-size:8px;color:#e8e8e8;font-family:'Liberation Sans',sans-serif;white-space:pre;left:1879px;letter-spacing:-0.15px;">-70 dBm</div>
<div style="position:absolute;top:833.9px;line-height:13px;height:13px;font-size:8px;color:#e8e8e8;font-family:'Liberation Sans',sans-serif;white-space:pre;left:1879px;letter-spacing:-0.15px;">-80 dBm</div>
<div style="position:absolute;top:861.2px;line-height:13px;height:13px;font-size:8px;color:#e8e8e8;font-family:'Liberation Sans',sans-serif;white-space:pre;left:1879px;letter-spacing:-0.15px;">-90 dBm</div>
<div style="position:absolute;top:888.4px;line-height:13px;height:13px;font-size:8px;color:#e8e8e8;font-family:'Liberation Sans',sans-serif;white-space:pre;left:1879px;letter-spacing:-0.15px;">-100 dBm</div>
<div style="position:absolute;top:915.6px;line-height:13px;height:13px;font-size:8px;color:#e8e8e8;font-family:'Liberation Sans',sans-serif;white-space:pre;left:1879px;letter-spacing:-0.15px;">-110 dBm</div>
<div style="position:absolute;top:942.8px;line-height:13px;height:13px;font-size:8px;color:#e8e8e8;font-family:'Liberation Sans',sans-serif;white-space:pre;left:1879px;letter-spacing:-0.15px;">-120 dBm</div>
<div style="position:absolute;top:970.0px;line-height:13px;height:13px;font-size:8px;color:#e8e8e8;font-family:'Liberation Sans',sans-serif;white-space:pre;left:1879px;letter-spacing:-0.15px;">-130 dBm</div>
<div style="position:absolute;top:997.3px;line-height:13px;height:13px;font-size:8px;color:#e8e8e8;font-family:'Liberation Sans',sans-serif;white-space:pre;left:1879px;letter-spacing:-0.15px;">-140 dBm</div>
<div style="position:absolute;top:953.0px;line-height:20px;height:20px;font-size:13.5px;color:#f4f4f4;font-family:'Liberation Sans',sans-serif;white-space:pre;left:1873px;transform:translateX(-100%);background:rgba(0,0,0,0.75);padding:0 2px;">-128.3 dBm</div>
<div style="position:absolute;left:335px;top:752px;width:24px;height:23px;box-sizing:border-box;border:1px solid #3c3c3c;background:radial-gradient(ellipse 55% 50% at 50% 108%,rgba(225,225,0,1),rgba(150,150,0,0.55) 60%,rgba(0,0,0,0) 100%),linear-gradient(#3a3a3a 0%,#2a2a2a 48%,#000 50%,#050505 100%);color:#fff;font-family:'Liberation Sans',sans-serif;font-size:11px;line-height:21px;text-align:center;white-space:nowrap"></div>
<div style="position:absolute;left:335px;top:778px;width:24px;height:23px;box-sizing:border-box;border:1px solid #3c3c3c;background:linear-gradient(#3a3a3a 0%,#2a2a2a 48%,#000 50%,#050505 100%);color:#d8d8d8;font-family:'Liberation Sans',sans-serif;font-size:11px;line-height:21px;text-align:center;white-space:nowrap"></div>
<div style="position:absolute;left:335px;top:804px;width:24px;height:23px;box-sizing:border-box;border:1px solid #3c3c3c;background:linear-gradient(#3a3a3a 0%,#2a2a2a 48%,#000 50%,#050505 100%);color:#d8d8d8;font-family:'Liberation Sans',sans-serif;font-size:11px;line-height:21px;text-align:center;white-space:nowrap"></div>
<svg style="position:absolute;left:0px;top:0px;pointer-events:none" width="400" height="1024"><circle cx="347" cy="763.500" r="4" fill="none" stroke="#fff" stroke-width="1.3"/><path d="M344.500 787.500 A3.2 3.2 0 1 0 349 787" fill="none" stroke="#fff" stroke-width="1.2"/><path d="M347.500 785 L350 787.500 L347 788.5 Z" fill="#fff"/><rect x="343.6" y="817" width="1.7" height="1.800" fill="#fff"/><rect x="346.3" y="817" width="1.7" height="1.800" fill="#fff"/><rect x="349" y="817" width="1.7" height="1.800" fill="#fff"/></svg>
<div style="position:absolute;left:0px;top:1024px;width:1920px;height:24px;background:#f0f0f0;"></div>
<div style="position:absolute;top:1028.0px;line-height:16px;height:16px;font-size:10.7px;color:#6a6a6a;font-family:'Liberation Sans',sans-serif;white-space:pre;left:9px;">LimeSDR-USB, BW = 1.500 MHz</div>
<div style="position:absolute;top:1027.0px;line-height:18px;height:18px;font-size:11.5px;color:#222;font-family:'Liberation Sans',sans-serif;white-space:pre;left:1359px;">Scheduler: Off</div>
<div style="position:absolute;top:1027.5px;line-height:17px;height:17px;font-size:11px;color:#222;font-family:'Liberation Sans',sans-serif;white-space:pre;left:1463px;letter-spacing:-0.35px;">CPU: 9.3%</div>
<div style="position:absolute;top:1027.5px;line-height:17px;height:17px;font-size:11px;color:#222;font-family:'Liberation Sans',sans-serif;white-space:pre;left:1612px;letter-spacing:-0.4px;">GPU: 10.4%</div>
<div style="position:absolute;top:1027.0px;line-height:18px;height:18px;font-size:11.5px;color:#222;font-family:'Liberation Sans',sans-serif;white-space:pre;left:1768px;">Audio: 24ms</div>
<div style="position:absolute;left:1528px;top:1031px;width:70px;height:12px;box-sizing:border-box;border:1px solid #bcbcbc;background:#e6e6e6"></div>
<div style="position:absolute;left:1684px;top:1031px;width:70px;height:12px;box-sizing:border-box;border:1px solid #bcbcbc;background:#e6e6e6"></div>
<div style="position:absolute;left:1845px;top:1031px;width:70px;height:12px;box-sizing:border-box;border:1px solid #bcbcbc;background:#e6e6e6"></div>
<div style="position:absolute;left:1686.5px;top:1034px;width:1px;height:6px;background:#3cb43c;"></div>
<div style="position:absolute;left:1848px;top:1034px;width:17px;height:6px;background:#10b020;"></div>
</div></body></html>
